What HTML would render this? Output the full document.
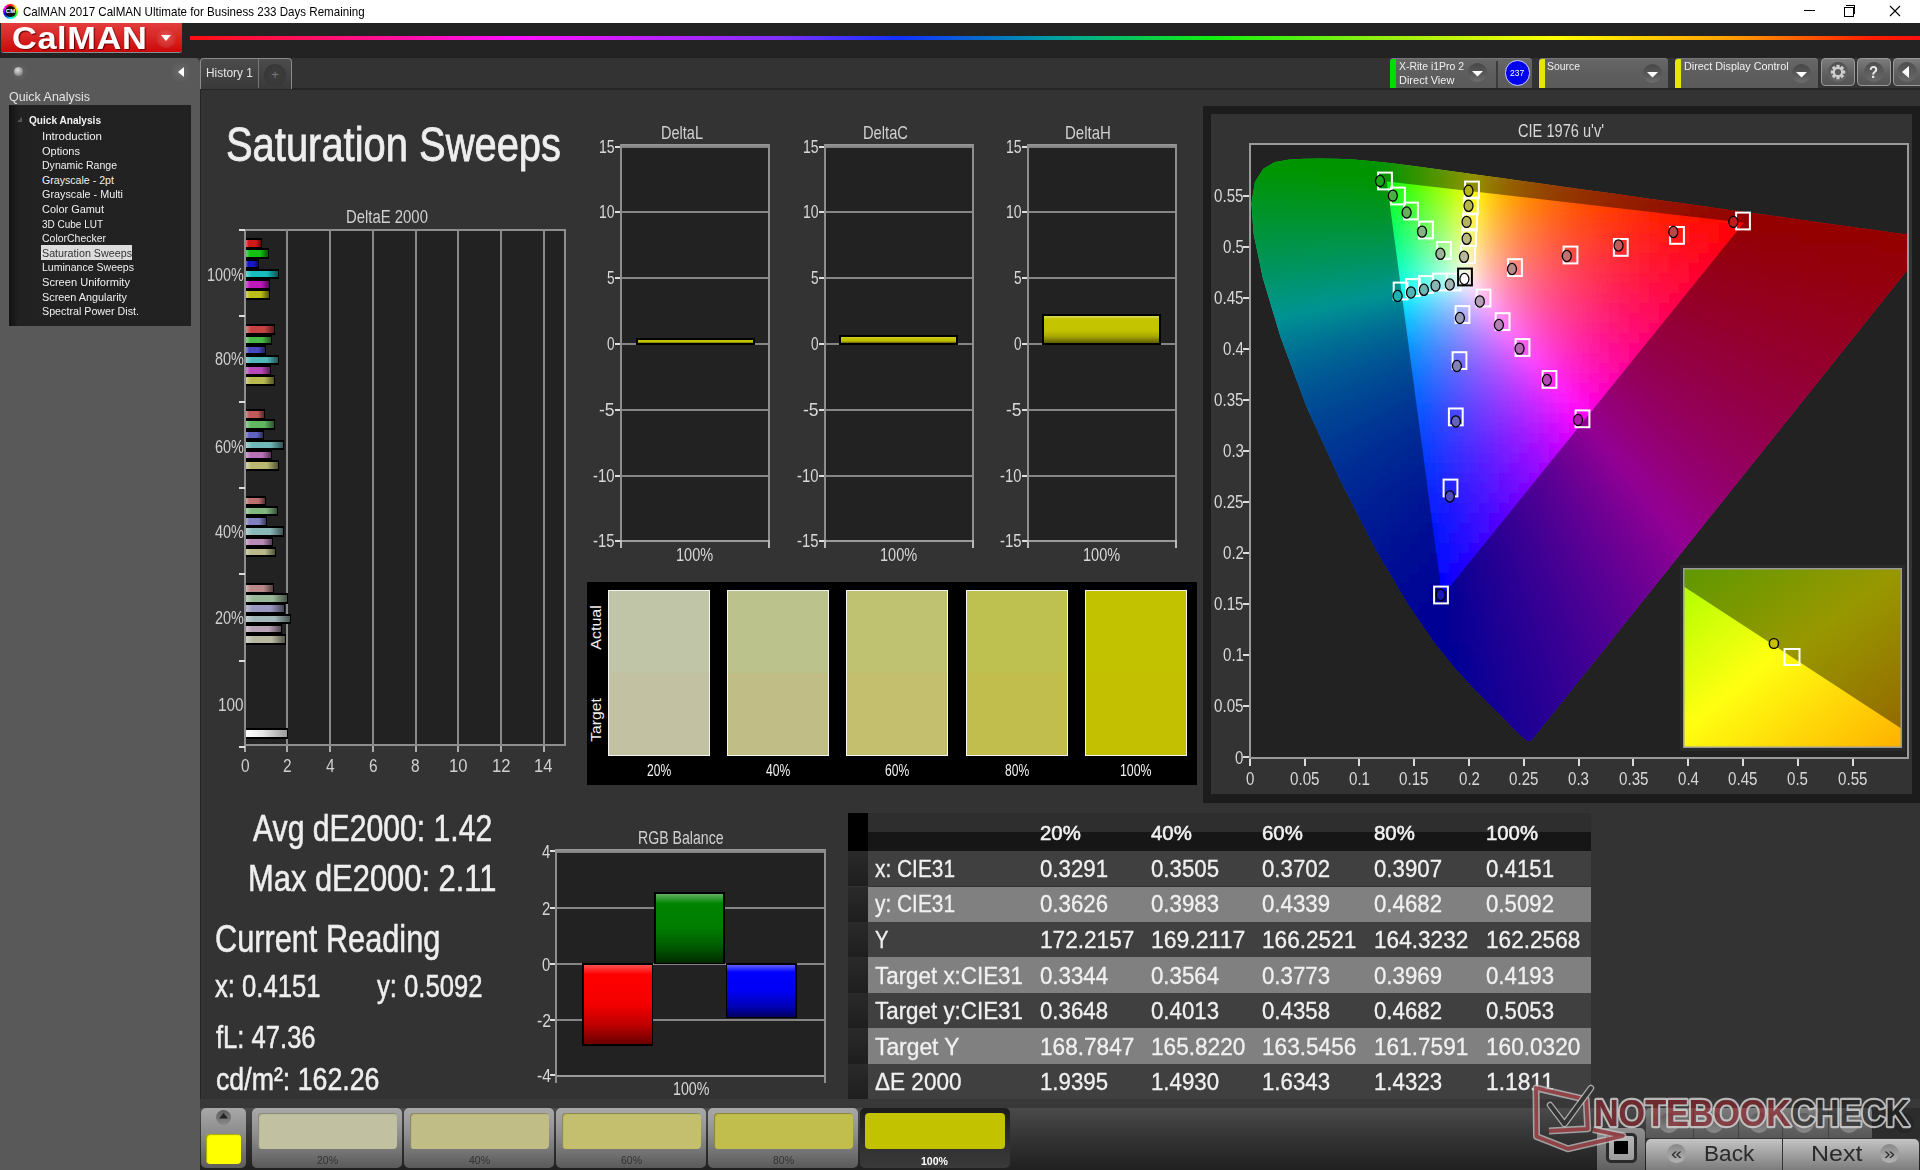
<!DOCTYPE html>
<html><head><meta charset="utf-8"><style>
html,body{margin:0;padding:0;width:1920px;height:1170px;overflow:hidden;background:#333;}
body{position:relative;font-family:"Liberation Sans",sans-serif;}
.r{position:absolute;}
.t{position:absolute;white-space:nowrap;}
svg.r{overflow:hidden}
.cg rect{width:10px;height:10px}
</style></head><body>
<div class="r" style="left:0px;top:0px;width:1920px;height:23px;background:#fff"></div>
<div class="r" style="left:3px;top:4px;width:15px;height:15px;border-radius:50%;background:conic-gradient(#f00,#ff0,#0f0,#0ff,#00f,#f0f,#f00)"></div>
<div class="r" style="left:5px;top:6px;width:11px;height:11px;border-radius:50%;background:#111"></div>
<div class="t" style="left:5px;top:8px;font-size:6px;line-height:7px;color:#fff;font-weight:bold;width:11px;text-align:center">CM</div>
<div class="t " style="left:23.30px;top:6.12px;font-size:12.20px;line-height:12.20px;color:#000;transform:scaleX(0.9499);transform-origin:0 0;">CalMAN 2017 CalMAN Ultimate for Business 233 Days Remaining</div>
<div class="r" style="left:1804px;top:10px;width:11px;height:1px;background:#000"></div>
<div class="r" style="left:1844px;top:7px;width:8px;height:8px;border:1px solid #000;background:#fff"></div>
<div class="r" style="left:1846px;top:5px;width:8px;height:8px;border-top:1px solid #000;border-right:1px solid #000"></div>
<svg class="r" style="left:1889px;top:5px" width="12" height="12"><path d="M1 1L11 11M11 1L1 11" stroke="#000" stroke-width="1.1"/></svg>
<div class="r" style="left:0px;top:23px;width:1920px;height:35px;background:#232323"></div>
<div class="r" style="left:1px;top:23px;width:181px;height:29px;background:linear-gradient(#e43d3d,#d82424 50%,#cc0808);border-radius:0 0 3px 3px;box-shadow:0 1px 0 #8a8a8a"></div>
<div class="t " style="left:12.00px;top:23.00px;font-size:31.25px;line-height:31.25px;color:#fff;font-weight:bold;transform:scaleX(1.1018);transform-origin:0 0;text-shadow:1px 1px 1px #600;letter-spacing:0.5px">CalMAN</div>
<div class="r" style="left:156px;top:28px;width:20px;height:20px;border-radius:50%;background:radial-gradient(circle at 50% 40%,#e85050,#c81818)"></div>
<svg class="r" style="left:159px;top:32px" width="14" height="12"><path d="M2 3L12 3L7 9Z" fill="#fff"/></svg>
<div class="r" style="left:190px;top:36px;width:1730px;height:4px;background:linear-gradient(90deg,#ff1010 0%,#ff10a0 12%,#ff10ff 19%,#8030ff 34%,#1030ff 41%,#00a0a0 50%,#10f010 59%,#a0f010 70%,#ffff00 79%,#ffa000 89%,#ff2000 97%,#ff1010 100%)"></div>
<div class="r" style="left:0px;top:58px;width:200px;height:1112px;background:#595959;border-radius:0 5px 0 0"></div>
<div class="r" style="left:9px;top:62px;width:20px;height:20px;border-radius:50%;background:radial-gradient(circle,#666 0,#5a5a5a 60%,#555 100%)"></div>
<div class="r" style="left:14px;top:67px;width:9px;height:9px;border-radius:50%;background:radial-gradient(circle at 40% 35%,#ddd,#888 70%)"></div>
<div class="r" style="left:171px;top:62px;width:20px;height:20px;border-radius:50%;background:radial-gradient(circle,#6a6a6a,#555)"></div>
<svg class="r" style="left:176px;top:66px" width="10" height="12"><path d="M8 1L8 11L2 6Z" fill="#fff"/></svg>
<div class="t " style="left:9.00px;top:90.62px;font-size:12.79px;line-height:12.79px;color:#e4e4e4;transform:scaleX(0.9739);transform-origin:0 0;">Quick Analysis</div>
<div class="r" style="left:9px;top:105px;width:182px;height:221px;background:linear-gradient(90deg,#121212 0,#212121 10px,#222 100%)"></div>
<svg class="r" style="left:17px;top:117px" width="6" height="6"><path d="M5 0L5 5L0 5Z" fill="#555"/></svg>
<div class="t " style="left:29.00px;top:115.47px;font-size:10.61px;line-height:10.61px;color:#f4f4f4;font-weight:bold;transform:scaleX(0.9513);transform-origin:0 0;">Quick Analysis</div>
<div class="t " style="left:42.00px;top:131.07px;font-size:10.61px;line-height:10.61px;color:#f0f0f0;transform:scaleX(1.0821);transform-origin:0 0;">Introduction</div>
<div class="t " style="left:42.00px;top:145.67px;font-size:10.61px;line-height:10.61px;color:#f0f0f0;transform:scaleX(1.0392);transform-origin:0 0;">Options</div>
<div class="t " style="left:42.00px;top:160.27px;font-size:10.61px;line-height:10.61px;color:#f0f0f0;transform:scaleX(0.9935);transform-origin:0 0;">Dynamic Range</div>
<div class="t " style="left:42.00px;top:174.87px;font-size:10.61px;line-height:10.61px;color:#f0f0f0;">Grayscale - 2pt</div>
<div class="t " style="left:42.00px;top:189.47px;font-size:10.61px;line-height:10.61px;color:#f0f0f0;transform:scaleX(1.0176);transform-origin:0 0;">Grayscale - Multi</div>
<div class="t " style="left:42.00px;top:204.07px;font-size:10.61px;line-height:10.61px;color:#f0f0f0;transform:scaleX(1.0308);transform-origin:0 0;">Color Gamut</div>
<div class="t " style="left:42.00px;top:218.67px;font-size:10.61px;line-height:10.61px;color:#f0f0f0;transform:scaleX(0.9403);transform-origin:0 0;">3D Cube LUT</div>
<div class="t " style="left:42.00px;top:233.27px;font-size:10.61px;line-height:10.61px;color:#f0f0f0;transform:scaleX(0.9866);transform-origin:0 0;">ColorChecker</div>
<div class="r" style="left:41px;top:245px;width:91px;height:15px;background:#dcdcdc"></div>
<div class="t " style="left:42.00px;top:247.87px;font-size:10.61px;line-height:10.61px;color:#333;transform:scaleX(1.0105);transform-origin:0 0;">Saturation Sweeps</div>
<div class="t " style="left:42.00px;top:262.47px;font-size:10.61px;line-height:10.61px;color:#f0f0f0;transform:scaleX(0.9935);transform-origin:0 0;">Luminance Sweeps</div>
<div class="t " style="left:42.00px;top:277.07px;font-size:10.61px;line-height:10.61px;color:#f0f0f0;transform:scaleX(1.0436);transform-origin:0 0;">Screen Uniformity</div>
<div class="t " style="left:42.00px;top:291.67px;font-size:10.61px;line-height:10.61px;color:#f0f0f0;transform:scaleX(1.0220);transform-origin:0 0;">Screen Angularity</div>
<div class="t " style="left:42.00px;top:306.27px;font-size:10.61px;line-height:10.61px;color:#f0f0f0;transform:scaleX(1.0092);transform-origin:0 0;">Spectral Power Dist.</div>
<div class="r" style="left:200px;top:88px;width:1720px;height:1020px;background:#333"></div>
<div class="r" style="left:200px;top:88px;width:1720px;height:2px;background:#262626"></div>
<div class="r" style="left:200px;top:88px;width:1px;height:1020px;background:#242424"></div>
<div class="r" style="left:200px;top:58px;width:92px;height:31px;background:linear-gradient(#4c4c4c,#393939);border:1px solid #8a8a8a;border-bottom:none;border-radius:4px 4px 0 0;box-sizing:border-box"></div>
<div class="r" style="left:258px;top:59px;width:1px;height:29px;background:#777"></div>
<div class="t " style="left:206.00px;top:66.99px;font-size:12.35px;line-height:12.35px;color:#e6e6e6;transform:scaleX(0.9642);transform-origin:0 0;">History 1</div>
<div class="r" style="left:264px;top:64px;width:22px;height:22px;border-radius:50%;background:radial-gradient(circle,#3e3e3e,#353535)"></div>
<div class="t " style="left:271.20px;top:68.45px;font-size:13.00px;line-height:13.00px;color:#777;">+</div>
<div class="t " style="left:225.80px;top:120.75px;font-size:47.97px;line-height:47.97px;color:#eeeeee;transform:scaleX(0.8320);transform-origin:0 0;-webkit-text-stroke:0.8px #eeeeee;">Saturation Sweeps</div>
<div class="t " style="left:346.00px;top:209.12px;font-size:17.88px;line-height:17.88px;color:#d0d0d0;transform:scaleX(0.8333);transform-origin:0 0;">DeltaE 2000</div>
<div class="r" style="left:244px;top:229px;width:322px;height:517px;background:#222;box-sizing:border-box;border-left:2px solid #8e8e8e;border-top:2px solid #8e8e8e;border-right:2px solid #8e8e8e"></div>
<div class="r" style="left:244px;top:744px;width:322px;height:2px;background:#8e8e8e"></div>
<div class="r" style="left:286px;top:229px;width:2px;height:517px;background:#8a8a8a"></div>
<div class="r" style="left:329px;top:229px;width:2px;height:517px;background:#8a8a8a"></div>
<div class="r" style="left:372px;top:229px;width:2px;height:517px;background:#8a8a8a"></div>
<div class="r" style="left:415px;top:229px;width:2px;height:517px;background:#8a8a8a"></div>
<div class="r" style="left:457px;top:229px;width:2px;height:517px;background:#8a8a8a"></div>
<div class="r" style="left:500px;top:229px;width:2px;height:517px;background:#8a8a8a"></div>
<div class="r" style="left:543px;top:229px;width:2px;height:517px;background:#8a8a8a"></div>
<div class="r" style="left:244px;top:746px;width:2px;height:6px;background:#aaa"></div>
<div class="t " style="left:240.50px;top:758.29px;font-size:17.44px;line-height:17.44px;color:#d0d0d0;transform:scaleX(0.8865);transform-origin:0 0;">0</div>
<div class="r" style="left:286px;top:746px;width:2px;height:6px;background:#aaa"></div>
<div class="t " style="left:283.19px;top:758.29px;font-size:17.44px;line-height:17.44px;color:#d0d0d0;transform:scaleX(0.8865);transform-origin:0 0;">2</div>
<div class="r" style="left:329px;top:746px;width:2px;height:6px;background:#aaa"></div>
<div class="t " style="left:325.87px;top:758.29px;font-size:17.44px;line-height:17.44px;color:#d0d0d0;transform:scaleX(0.8865);transform-origin:0 0;">4</div>
<div class="r" style="left:372px;top:746px;width:2px;height:6px;background:#aaa"></div>
<div class="t " style="left:368.56px;top:758.29px;font-size:17.44px;line-height:17.44px;color:#d0d0d0;transform:scaleX(0.8865);transform-origin:0 0;">6</div>
<div class="r" style="left:415px;top:746px;width:2px;height:6px;background:#aaa"></div>
<div class="t " style="left:411.24px;top:758.29px;font-size:17.44px;line-height:17.44px;color:#d0d0d0;transform:scaleX(0.8865);transform-origin:0 0;">8</div>
<div class="r" style="left:457px;top:746px;width:2px;height:6px;background:#aaa"></div>
<div class="t " style="left:448.98px;top:758.29px;font-size:17.44px;line-height:17.44px;color:#d0d0d0;transform:scaleX(0.9535);transform-origin:0 0;">10</div>
<div class="r" style="left:500px;top:746px;width:2px;height:6px;background:#aaa"></div>
<div class="t " style="left:491.66px;top:758.29px;font-size:17.44px;line-height:17.44px;color:#d0d0d0;transform:scaleX(0.9535);transform-origin:0 0;">12</div>
<div class="r" style="left:543px;top:746px;width:2px;height:6px;background:#aaa"></div>
<div class="t " style="left:534.35px;top:758.29px;font-size:17.44px;line-height:17.44px;color:#d0d0d0;transform:scaleX(0.9535);transform-origin:0 0;">14</div>
<div class="r" style="left:239px;top:229px;width:6px;height:2px;background:#ddd"></div>
<div class="r" style="left:239px;top:315px;width:6px;height:2px;background:#ddd"></div>
<div class="r" style="left:239px;top:401px;width:6px;height:2px;background:#ddd"></div>
<div class="r" style="left:239px;top:487px;width:6px;height:2px;background:#ddd"></div>
<div class="r" style="left:239px;top:573px;width:6px;height:2px;background:#ddd"></div>
<div class="r" style="left:239px;top:660px;width:6px;height:2px;background:#ddd"></div>
<div class="r" style="left:239px;top:746px;width:6px;height:2px;background:#ddd"></div>
<div class="t " style="left:206.70px;top:265.50px;font-size:18.60px;line-height:18.60px;color:#d0d0d0;transform:scaleX(0.7734);transform-origin:0 0;">100%</div>
<div class="t " style="left:214.50px;top:350.10px;font-size:18.60px;line-height:18.60px;color:#d0d0d0;transform:scaleX(0.7788);transform-origin:0 0;">80%</div>
<div class="t " style="left:214.50px;top:437.70px;font-size:18.60px;line-height:18.60px;color:#d0d0d0;transform:scaleX(0.7788);transform-origin:0 0;">60%</div>
<div class="t " style="left:214.50px;top:523.20px;font-size:18.60px;line-height:18.60px;color:#d0d0d0;transform:scaleX(0.7788);transform-origin:0 0;">40%</div>
<div class="t " style="left:214.50px;top:608.70px;font-size:18.60px;line-height:18.60px;color:#d0d0d0;transform:scaleX(0.7788);transform-origin:0 0;">20%</div>
<div class="t " style="left:217.90px;top:695.70px;font-size:18.60px;line-height:18.60px;color:#d0d0d0;transform:scaleX(0.8247);transform-origin:0 0;">100</div>
<div class="r" style="left:246px;top:238.2px;width:15.8px;height:10.5px;background:#000"></div>
<div class="r" style="left:246px;top:240.2px;width:14.8px;height:6.6px;background:linear-gradient(90deg,rgba(255,255,255,.35),rgba(255,255,255,0) 18%,rgba(0,0,0,0) 65%,rgba(0,0,0,.55)),#d01a1a"></div>
<div class="r" style="left:246px;top:248.4px;width:23px;height:10.5px;background:#000"></div>
<div class="r" style="left:246px;top:250.4px;width:22px;height:6.6px;background:linear-gradient(90deg,rgba(255,255,255,.35),rgba(255,255,255,0) 18%,rgba(0,0,0,0) 65%,rgba(0,0,0,.55)),#14bf14"></div>
<div class="r" style="left:246px;top:258.6px;width:13px;height:10.5px;background:#000"></div>
<div class="r" style="left:246px;top:260.6px;width:12px;height:6.6px;background:linear-gradient(90deg,rgba(255,255,255,.35),rgba(255,255,255,0) 18%,rgba(0,0,0,0) 65%,rgba(0,0,0,.55)),#1616c8"></div>
<div class="r" style="left:246px;top:268.8px;width:32.5px;height:10.5px;background:#000"></div>
<div class="r" style="left:246px;top:270.8px;width:31.5px;height:6.6px;background:linear-gradient(90deg,rgba(255,255,255,.35),rgba(255,255,255,0) 18%,rgba(0,0,0,0) 65%,rgba(0,0,0,.55)),#18bcbc"></div>
<div class="r" style="left:246px;top:279.0px;width:23.7px;height:10.5px;background:#000"></div>
<div class="r" style="left:246px;top:281.0px;width:22.7px;height:6.6px;background:linear-gradient(90deg,rgba(255,255,255,.35),rgba(255,255,255,0) 18%,rgba(0,0,0,0) 65%,rgba(0,0,0,.55)),#bc18bc"></div>
<div class="r" style="left:246px;top:289.2px;width:24px;height:10.5px;background:#000"></div>
<div class="r" style="left:246px;top:291.2px;width:23px;height:6.6px;background:linear-gradient(90deg,rgba(255,255,255,.35),rgba(255,255,255,0) 18%,rgba(0,0,0,0) 65%,rgba(0,0,0,.55)),#bcbc18"></div>
<div class="r" style="left:246px;top:324.3px;width:29px;height:10.5px;background:#000"></div>
<div class="r" style="left:246px;top:326.3px;width:28px;height:6.6px;background:linear-gradient(90deg,rgba(255,255,255,.35),rgba(255,255,255,0) 18%,rgba(0,0,0,0) 65%,rgba(0,0,0,.55)),#c64242"></div>
<div class="r" style="left:246px;top:334.5px;width:25.7px;height:10.5px;background:#000"></div>
<div class="r" style="left:246px;top:336.5px;width:24.7px;height:6.6px;background:linear-gradient(90deg,rgba(255,255,255,.35),rgba(255,255,255,0) 18%,rgba(0,0,0,0) 65%,rgba(0,0,0,.55)),#48b848"></div>
<div class="r" style="left:246px;top:344.7px;width:20px;height:10.5px;background:#000"></div>
<div class="r" style="left:246px;top:346.7px;width:19px;height:6.6px;background:linear-gradient(90deg,rgba(255,255,255,.35),rgba(255,255,255,0) 18%,rgba(0,0,0,0) 65%,rgba(0,0,0,.55)),#4848c0"></div>
<div class="r" style="left:246px;top:354.9px;width:32.5px;height:10.5px;background:#000"></div>
<div class="r" style="left:246px;top:356.9px;width:31.5px;height:6.6px;background:linear-gradient(90deg,rgba(255,255,255,.35),rgba(255,255,255,0) 18%,rgba(0,0,0,0) 65%,rgba(0,0,0,.55)),#50b8b8"></div>
<div class="r" style="left:246px;top:365.1px;width:25.3px;height:10.5px;background:#000"></div>
<div class="r" style="left:246px;top:367.1px;width:24.3px;height:6.6px;background:linear-gradient(90deg,rgba(255,255,255,.35),rgba(255,255,255,0) 18%,rgba(0,0,0,0) 65%,rgba(0,0,0,.55)),#b848b8"></div>
<div class="r" style="left:246px;top:375.3px;width:28.6px;height:10.5px;background:#000"></div>
<div class="r" style="left:246px;top:377.3px;width:27.6px;height:6.6px;background:linear-gradient(90deg,rgba(255,255,255,.35),rgba(255,255,255,0) 18%,rgba(0,0,0,0) 65%,rgba(0,0,0,.55)),#b8b850"></div>
<div class="r" style="left:246px;top:409.1px;width:18.5px;height:10.5px;background:#000"></div>
<div class="r" style="left:246px;top:411.1px;width:17.5px;height:6.6px;background:linear-gradient(90deg,rgba(255,255,255,.35),rgba(255,255,255,0) 18%,rgba(0,0,0,0) 65%,rgba(0,0,0,.55)),#c05a5a"></div>
<div class="r" style="left:246px;top:419.3px;width:28.7px;height:10.5px;background:#000"></div>
<div class="r" style="left:246px;top:421.3px;width:27.7px;height:6.6px;background:linear-gradient(90deg,rgba(255,255,255,.35),rgba(255,255,255,0) 18%,rgba(0,0,0,0) 65%,rgba(0,0,0,.55)),#62b862"></div>
<div class="r" style="left:246px;top:429.5px;width:17.7px;height:10.5px;background:#000"></div>
<div class="r" style="left:246px;top:431.5px;width:16.7px;height:6.6px;background:linear-gradient(90deg,rgba(255,255,255,.35),rgba(255,255,255,0) 18%,rgba(0,0,0,0) 65%,rgba(0,0,0,.55)),#6262c0"></div>
<div class="r" style="left:246px;top:439.7px;width:37.7px;height:10.5px;background:#000"></div>
<div class="r" style="left:246px;top:441.7px;width:36.7px;height:6.6px;background:linear-gradient(90deg,rgba(255,255,255,.35),rgba(255,255,255,0) 18%,rgba(0,0,0,0) 65%,rgba(0,0,0,.55)),#72b8b8"></div>
<div class="r" style="left:246px;top:449.9px;width:25.7px;height:10.5px;background:#000"></div>
<div class="r" style="left:246px;top:451.9px;width:24.7px;height:6.6px;background:linear-gradient(90deg,rgba(255,255,255,.35),rgba(255,255,255,0) 18%,rgba(0,0,0,0) 65%,rgba(0,0,0,.55)),#b872b8"></div>
<div class="r" style="left:246px;top:460.1px;width:32.9px;height:10.5px;background:#000"></div>
<div class="r" style="left:246px;top:462.1px;width:31.9px;height:6.6px;background:linear-gradient(90deg,rgba(255,255,255,.35),rgba(255,255,255,0) 18%,rgba(0,0,0,0) 65%,rgba(0,0,0,.55)),#b8b872"></div>
<div class="r" style="left:246px;top:495.7px;width:20px;height:10.5px;background:#000"></div>
<div class="r" style="left:246px;top:497.7px;width:19px;height:6.6px;background:linear-gradient(90deg,rgba(255,255,255,.35),rgba(255,255,255,0) 18%,rgba(0,0,0,0) 65%,rgba(0,0,0,.55)),#bc7070"></div>
<div class="r" style="left:246px;top:505.9px;width:31.6px;height:10.5px;background:#000"></div>
<div class="r" style="left:246px;top:507.9px;width:30.6px;height:6.6px;background:linear-gradient(90deg,rgba(255,255,255,.35),rgba(255,255,255,0) 18%,rgba(0,0,0,0) 65%,rgba(0,0,0,.55)),#80b880"></div>
<div class="r" style="left:246px;top:516.1px;width:21.4px;height:10.5px;background:#000"></div>
<div class="r" style="left:246px;top:518.1px;width:20.4px;height:6.6px;background:linear-gradient(90deg,rgba(255,255,255,.35),rgba(255,255,255,0) 18%,rgba(0,0,0,0) 65%,rgba(0,0,0,.55)),#8080c0"></div>
<div class="r" style="left:246px;top:526.3px;width:38.4px;height:10.5px;background:#000"></div>
<div class="r" style="left:246px;top:528.3px;width:37.4px;height:6.6px;background:linear-gradient(90deg,rgba(255,255,255,.35),rgba(255,255,255,0) 18%,rgba(0,0,0,0) 65%,rgba(0,0,0,.55)),#8ab8b8"></div>
<div class="r" style="left:246px;top:536.5px;width:26.8px;height:10.5px;background:#000"></div>
<div class="r" style="left:246px;top:538.5px;width:25.8px;height:6.6px;background:linear-gradient(90deg,rgba(255,255,255,.35),rgba(255,255,255,0) 18%,rgba(0,0,0,0) 65%,rgba(0,0,0,.55)),#b88ab8"></div>
<div class="r" style="left:246px;top:546.7px;width:29.6px;height:10.5px;background:#000"></div>
<div class="r" style="left:246px;top:548.7px;width:28.6px;height:6.6px;background:linear-gradient(90deg,rgba(255,255,255,.35),rgba(255,255,255,0) 18%,rgba(0,0,0,0) 65%,rgba(0,0,0,.55)),#b8b88a"></div>
<div class="r" style="left:246px;top:583.0px;width:27.5px;height:10.5px;background:#000"></div>
<div class="r" style="left:246px;top:585.0px;width:26.5px;height:6.6px;background:linear-gradient(90deg,rgba(255,255,255,.35),rgba(255,255,255,0) 18%,rgba(0,0,0,0) 65%,rgba(0,0,0,.55)),#b88888"></div>
<div class="r" style="left:246px;top:593.2px;width:41.9px;height:10.5px;background:#000"></div>
<div class="r" style="left:246px;top:595.2px;width:40.9px;height:6.6px;background:linear-gradient(90deg,rgba(255,255,255,.35),rgba(255,255,255,0) 18%,rgba(0,0,0,0) 65%,rgba(0,0,0,.55)),#98b898"></div>
<div class="r" style="left:246px;top:603.4px;width:38.9px;height:10.5px;background:#000"></div>
<div class="r" style="left:246px;top:605.4px;width:37.9px;height:6.6px;background:linear-gradient(90deg,rgba(255,255,255,.35),rgba(255,255,255,0) 18%,rgba(0,0,0,0) 65%,rgba(0,0,0,.55)),#9898c0"></div>
<div class="r" style="left:246px;top:613.6px;width:44.9px;height:10.5px;background:#000"></div>
<div class="r" style="left:246px;top:615.6px;width:43.9px;height:6.6px;background:linear-gradient(90deg,rgba(255,255,255,.35),rgba(255,255,255,0) 18%,rgba(0,0,0,0) 65%,rgba(0,0,0,.55)),#a2b8b8"></div>
<div class="r" style="left:246px;top:623.8px;width:35.9px;height:10.5px;background:#000"></div>
<div class="r" style="left:246px;top:625.8px;width:34.9px;height:6.6px;background:linear-gradient(90deg,rgba(255,255,255,.35),rgba(255,255,255,0) 18%,rgba(0,0,0,0) 65%,rgba(0,0,0,.55)),#b8a2b8"></div>
<div class="r" style="left:246px;top:634.0px;width:39.8px;height:10.5px;background:#000"></div>
<div class="r" style="left:246px;top:636.0px;width:38.8px;height:6.6px;background:linear-gradient(90deg,rgba(255,255,255,.35),rgba(255,255,255,0) 18%,rgba(0,0,0,0) 65%,rgba(0,0,0,.55)),#b8b8a2"></div>
<div class="r" style="left:246px;top:728px;width:42.2px;height:11px;background:#000"></div>
<div class="r" style="left:246px;top:730px;width:41.2px;height:7px;background:linear-gradient(90deg,#fff,#e8e8e8 40%,#9a9a9a)"></div>
<div class="t " style="left:660.50px;top:123.95px;font-size:18.31px;line-height:18.31px;color:#d0d0d0;transform:scaleX(0.7933);transform-origin:0 0;">DeltaL</div>
<div class="r" style="left:620px;top:145px;width:150px;height:397px;background:#222"></div>
<div class="r" style="left:620px;top:211px;width:150px;height:2px;background:#858585"></div>
<div class="r" style="left:620px;top:277px;width:150px;height:2px;background:#858585"></div>
<div class="r" style="left:620px;top:343px;width:150px;height:2px;background:#858585"></div>
<div class="r" style="left:620px;top:409px;width:150px;height:2px;background:#858585"></div>
<div class="r" style="left:620px;top:475px;width:150px;height:2px;background:#858585"></div>
<div class="r" style="left:620px;top:144px;width:150px;height:4px;background:linear-gradient(#9a9a9a,#7e7e7e)"></div>
<div class="r" style="left:620px;top:540px;width:150px;height:2px;background:#9a9a9a"></div>
<div class="r" style="left:620px;top:144px;width:2px;height:398px;background:#8e8e8e"></div>
<div class="r" style="left:768px;top:144px;width:2px;height:398px;background:#8e8e8e"></div>
<div class="r" style="left:620px;top:540px;width:2px;height:8px;background:#bbb"></div>
<div class="r" style="left:768px;top:540px;width:2px;height:8px;background:#bbb"></div>
<div class="r" style="left:615px;top:146px;width:5px;height:2px;background:#ddd"></div>
<div class="t " style="left:598.90px;top:137.60px;font-size:18.60px;line-height:18.60px;color:#d8d8d8;transform:scaleX(0.7538);transform-origin:0 0;">15</div>
<div class="r" style="left:615px;top:211px;width:5px;height:2px;background:#ddd"></div>
<div class="t " style="left:598.90px;top:203.30px;font-size:18.60px;line-height:18.60px;color:#d8d8d8;transform:scaleX(0.7538);transform-origin:0 0;">10</div>
<div class="r" style="left:615px;top:277px;width:5px;height:2px;background:#ddd"></div>
<div class="t " style="left:606.90px;top:269.20px;font-size:18.60px;line-height:18.60px;color:#d8d8d8;transform:scaleX(0.7345);transform-origin:0 0;">5</div>
<div class="r" style="left:615px;top:343px;width:5px;height:2px;background:#ddd"></div>
<div class="t " style="left:606.90px;top:335.10px;font-size:18.60px;line-height:18.60px;color:#d8d8d8;transform:scaleX(0.7345);transform-origin:0 0;">0</div>
<div class="r" style="left:615px;top:409px;width:5px;height:2px;background:#ddd"></div>
<div class="t " style="left:598.90px;top:401.00px;font-size:18.60px;line-height:18.60px;color:#d8d8d8;transform:scaleX(0.9430);transform-origin:0 0;">-5</div>
<div class="r" style="left:615px;top:475px;width:5px;height:2px;background:#ddd"></div>
<div class="t " style="left:593.00px;top:466.90px;font-size:18.60px;line-height:18.60px;color:#d8d8d8;transform:scaleX(0.7995);transform-origin:0 0;">-10</div>
<div class="r" style="left:615px;top:540px;width:5px;height:2px;background:#ddd"></div>
<div class="t " style="left:593.00px;top:532.10px;font-size:18.60px;line-height:18.60px;color:#d8d8d8;transform:scaleX(0.7995);transform-origin:0 0;">-15</div>
<div class="t " style="left:676.40px;top:545.79px;font-size:18.02px;line-height:18.02px;color:#d8d8d8;transform:scaleX(0.8070);transform-origin:0 0;">100%</div>
<div class="r" style="left:636px;top:338.1px;width:119px;height:6.7px;background:#000"></div>
<div class="r" style="left:637.8px;top:339.9px;width:115.4px;height:3.1px;background:linear-gradient(#dada5a 0,#c4c400 12%,#c2c200 55%,#a8a800 75%,#5e5e00 100%)"></div>
<div class="t " style="left:862.50px;top:123.95px;font-size:18.31px;line-height:18.31px;color:#d0d0d0;transform:scaleX(0.8038);transform-origin:0 0;">DeltaC</div>
<div class="r" style="left:824px;top:145px;width:150px;height:397px;background:#222"></div>
<div class="r" style="left:824px;top:211px;width:150px;height:2px;background:#858585"></div>
<div class="r" style="left:824px;top:277px;width:150px;height:2px;background:#858585"></div>
<div class="r" style="left:824px;top:343px;width:150px;height:2px;background:#858585"></div>
<div class="r" style="left:824px;top:409px;width:150px;height:2px;background:#858585"></div>
<div class="r" style="left:824px;top:475px;width:150px;height:2px;background:#858585"></div>
<div class="r" style="left:824px;top:144px;width:150px;height:4px;background:linear-gradient(#9a9a9a,#7e7e7e)"></div>
<div class="r" style="left:824px;top:540px;width:150px;height:2px;background:#9a9a9a"></div>
<div class="r" style="left:824px;top:144px;width:2px;height:398px;background:#8e8e8e"></div>
<div class="r" style="left:972px;top:144px;width:2px;height:398px;background:#8e8e8e"></div>
<div class="r" style="left:824px;top:540px;width:2px;height:8px;background:#bbb"></div>
<div class="r" style="left:972px;top:540px;width:2px;height:8px;background:#bbb"></div>
<div class="r" style="left:819px;top:146px;width:5px;height:2px;background:#ddd"></div>
<div class="t " style="left:802.90px;top:137.60px;font-size:18.60px;line-height:18.60px;color:#d8d8d8;transform:scaleX(0.7538);transform-origin:0 0;">15</div>
<div class="r" style="left:819px;top:211px;width:5px;height:2px;background:#ddd"></div>
<div class="t " style="left:802.90px;top:203.30px;font-size:18.60px;line-height:18.60px;color:#d8d8d8;transform:scaleX(0.7538);transform-origin:0 0;">10</div>
<div class="r" style="left:819px;top:277px;width:5px;height:2px;background:#ddd"></div>
<div class="t " style="left:810.90px;top:269.20px;font-size:18.60px;line-height:18.60px;color:#d8d8d8;transform:scaleX(0.7345);transform-origin:0 0;">5</div>
<div class="r" style="left:819px;top:343px;width:5px;height:2px;background:#ddd"></div>
<div class="t " style="left:810.90px;top:335.10px;font-size:18.60px;line-height:18.60px;color:#d8d8d8;transform:scaleX(0.7345);transform-origin:0 0;">0</div>
<div class="r" style="left:819px;top:409px;width:5px;height:2px;background:#ddd"></div>
<div class="t " style="left:802.90px;top:401.00px;font-size:18.60px;line-height:18.60px;color:#d8d8d8;transform:scaleX(0.9430);transform-origin:0 0;">-5</div>
<div class="r" style="left:819px;top:475px;width:5px;height:2px;background:#ddd"></div>
<div class="t " style="left:797.00px;top:466.90px;font-size:18.60px;line-height:18.60px;color:#d8d8d8;transform:scaleX(0.7995);transform-origin:0 0;">-10</div>
<div class="r" style="left:819px;top:540px;width:5px;height:2px;background:#ddd"></div>
<div class="t " style="left:797.00px;top:532.10px;font-size:18.60px;line-height:18.60px;color:#d8d8d8;transform:scaleX(0.7995);transform-origin:0 0;">-15</div>
<div class="t " style="left:880.40px;top:545.79px;font-size:18.02px;line-height:18.02px;color:#d8d8d8;transform:scaleX(0.8070);transform-origin:0 0;">100%</div>
<div class="r" style="left:839px;top:335.4px;width:119px;height:9.4px;background:#000"></div>
<div class="r" style="left:840.8px;top:337.2px;width:115.4px;height:5.8px;background:linear-gradient(#dada5a 0,#c4c400 12%,#c2c200 55%,#a8a800 75%,#5e5e00 100%)"></div>
<div class="t " style="left:1065.00px;top:123.95px;font-size:18.31px;line-height:18.31px;color:#d0d0d0;transform:scaleX(0.8217);transform-origin:0 0;">DeltaH</div>
<div class="r" style="left:1027px;top:145px;width:150px;height:397px;background:#222"></div>
<div class="r" style="left:1027px;top:211px;width:150px;height:2px;background:#858585"></div>
<div class="r" style="left:1027px;top:277px;width:150px;height:2px;background:#858585"></div>
<div class="r" style="left:1027px;top:343px;width:150px;height:2px;background:#858585"></div>
<div class="r" style="left:1027px;top:409px;width:150px;height:2px;background:#858585"></div>
<div class="r" style="left:1027px;top:475px;width:150px;height:2px;background:#858585"></div>
<div class="r" style="left:1027px;top:144px;width:150px;height:4px;background:linear-gradient(#9a9a9a,#7e7e7e)"></div>
<div class="r" style="left:1027px;top:540px;width:150px;height:2px;background:#9a9a9a"></div>
<div class="r" style="left:1027px;top:144px;width:2px;height:398px;background:#8e8e8e"></div>
<div class="r" style="left:1175px;top:144px;width:2px;height:398px;background:#8e8e8e"></div>
<div class="r" style="left:1027px;top:540px;width:2px;height:8px;background:#bbb"></div>
<div class="r" style="left:1175px;top:540px;width:2px;height:8px;background:#bbb"></div>
<div class="r" style="left:1022px;top:146px;width:5px;height:2px;background:#ddd"></div>
<div class="t " style="left:1005.90px;top:137.60px;font-size:18.60px;line-height:18.60px;color:#d8d8d8;transform:scaleX(0.7538);transform-origin:0 0;">15</div>
<div class="r" style="left:1022px;top:211px;width:5px;height:2px;background:#ddd"></div>
<div class="t " style="left:1005.90px;top:203.30px;font-size:18.60px;line-height:18.60px;color:#d8d8d8;transform:scaleX(0.7538);transform-origin:0 0;">10</div>
<div class="r" style="left:1022px;top:277px;width:5px;height:2px;background:#ddd"></div>
<div class="t " style="left:1013.90px;top:269.20px;font-size:18.60px;line-height:18.60px;color:#d8d8d8;transform:scaleX(0.7345);transform-origin:0 0;">5</div>
<div class="r" style="left:1022px;top:343px;width:5px;height:2px;background:#ddd"></div>
<div class="t " style="left:1013.90px;top:335.10px;font-size:18.60px;line-height:18.60px;color:#d8d8d8;transform:scaleX(0.7345);transform-origin:0 0;">0</div>
<div class="r" style="left:1022px;top:409px;width:5px;height:2px;background:#ddd"></div>
<div class="t " style="left:1005.90px;top:401.00px;font-size:18.60px;line-height:18.60px;color:#d8d8d8;transform:scaleX(0.9430);transform-origin:0 0;">-5</div>
<div class="r" style="left:1022px;top:475px;width:5px;height:2px;background:#ddd"></div>
<div class="t " style="left:1000.00px;top:466.90px;font-size:18.60px;line-height:18.60px;color:#d8d8d8;transform:scaleX(0.7995);transform-origin:0 0;">-10</div>
<div class="r" style="left:1022px;top:540px;width:5px;height:2px;background:#ddd"></div>
<div class="t " style="left:1000.00px;top:532.10px;font-size:18.60px;line-height:18.60px;color:#d8d8d8;transform:scaleX(0.7995);transform-origin:0 0;">-15</div>
<div class="t " style="left:1083.40px;top:545.79px;font-size:18.02px;line-height:18.02px;color:#d8d8d8;transform:scaleX(0.8070);transform-origin:0 0;">100%</div>
<div class="r" style="left:1042.1px;top:314.2px;width:119px;height:30.6px;background:#000"></div>
<div class="r" style="left:1043.9px;top:316.0px;width:115.4px;height:27.0px;background:linear-gradient(#dada5a 0,#c4c400 12%,#c2c200 55%,#a8a800 75%,#5e5e00 100%)"></div>
<div class="r" style="left:587px;top:582px;width:610px;height:203px;background:#000"></div>
<div class="r" style="left:608px;top:590px;width:102px;height:166px;box-sizing:border-box;border:1.3px solid #f4f4f4;background:linear-gradient(#c1c5a8 0,#c1c5a8 50%,#c2c1a2 50%,#c2c1a2 100%)"></div>
<div class="t " style="left:646.90px;top:761.75px;font-size:16.42px;line-height:16.42px;color:#f4f4f4;transform:scaleX(0.7362);transform-origin:0 0;">20%</div>
<div class="r" style="left:727px;top:590px;width:102px;height:166px;box-sizing:border-box;border:1.3px solid #f4f4f4;background:linear-gradient(#bcc28c 0,#bcc28c 50%,#c0be86 50%,#c0be86 100%)"></div>
<div class="t " style="left:765.90px;top:761.75px;font-size:16.42px;line-height:16.42px;color:#f4f4f4;transform:scaleX(0.7362);transform-origin:0 0;">40%</div>
<div class="r" style="left:846px;top:590px;width:102px;height:166px;box-sizing:border-box;border:1.3px solid #f4f4f4;background:linear-gradient(#bfc371 0,#bfc371 50%,#c3bf6e 50%,#c3bf6e 100%)"></div>
<div class="t " style="left:884.90px;top:761.75px;font-size:16.42px;line-height:16.42px;color:#f4f4f4;transform:scaleX(0.7362);transform-origin:0 0;">60%</div>
<div class="r" style="left:966px;top:590px;width:102px;height:166px;box-sizing:border-box;border:1.3px solid #f4f4f4;background:linear-gradient(#bec150 0,#bec150 50%,#c2be4e 50%,#c2be4e 100%)"></div>
<div class="t " style="left:1004.90px;top:761.75px;font-size:16.42px;line-height:16.42px;color:#f4f4f4;transform:scaleX(0.7362);transform-origin:0 0;">80%</div>
<div class="r" style="left:1085px;top:590px;width:102px;height:166px;box-sizing:border-box;border:1.3px solid #f4f4f4;background:linear-gradient(#c2c200 0,#c2c200 50%,#c2c000 50%,#c2c000 100%)"></div>
<div class="t " style="left:1120.20px;top:761.75px;font-size:16.42px;line-height:16.42px;color:#f4f4f4;transform:scaleX(0.7522);transform-origin:0 0;">100%</div>
<div class="t" style="left:601.00px;top:636.50px;font-size:15.12px;line-height:15.12px;color:#f0f0f0;transform-origin:0 12.80px;transform:rotate(-90deg) scaleX(1.0616)">Actual</div>
<div class="t" style="left:601.00px;top:728.50px;font-size:15.12px;line-height:15.12px;color:#f0f0f0;transform-origin:0 12.80px;transform:rotate(-90deg) scaleX(1.0378)">Target</div>
<div class="t " style="left:252.50px;top:811.07px;font-size:36.48px;line-height:36.48px;color:#eeeeee;transform:scaleX(0.8269);transform-origin:0 0;-webkit-text-stroke:0.55px #eeeeee;">Avg dE2000: 1.42</div>
<div class="t " style="left:248.40px;top:861.17px;font-size:36.48px;line-height:36.48px;color:#eeeeee;transform:scaleX(0.8469);transform-origin:0 0;-webkit-text-stroke:0.55px #eeeeee;">Max dE2000: 2.11</div>
<div class="t " style="left:215.00px;top:919.77px;font-size:38.37px;line-height:38.37px;color:#eeeeee;transform:scaleX(0.8005);transform-origin:0 0;-webkit-text-stroke:0.55px #eeeeee;">Current Reading</div>
<div class="t " style="left:215.20px;top:970.14px;font-size:32.27px;line-height:32.27px;color:#eeeeee;transform:scaleX(0.7939);transform-origin:0 0;-webkit-text-stroke:0.55px #eeeeee;">x: 0.4151</div>
<div class="t " style="left:376.90px;top:970.14px;font-size:32.27px;line-height:32.27px;color:#eeeeee;transform:scaleX(0.7939);transform-origin:0 0;-webkit-text-stroke:0.55px #eeeeee;">y: 0.5092</div>
<div class="t " style="left:215.60px;top:1020.94px;font-size:32.27px;line-height:32.27px;color:#eeeeee;transform:scaleX(0.7931);transform-origin:0 0;-webkit-text-stroke:0.55px #eeeeee;">fL: 47.36</div>
<div class="t " style="left:215.80px;top:1062.84px;font-size:32.27px;line-height:32.27px;color:#eeeeee;transform:scaleX(0.8282);transform-origin:0 0;-webkit-text-stroke:0.55px #eeeeee;">cd/m²: 162.26</div>
<div class="t " style="left:638.40px;top:828.55px;font-size:18.31px;line-height:18.31px;color:#d0d0d0;transform:scaleX(0.7724);transform-origin:0 0;">RGB Balance</div>
<div class="r" style="left:555px;top:849px;width:270px;height:227px;background:#222"></div>
<div class="r" style="left:555px;top:907px;width:270px;height:2px;background:#858585"></div>
<div class="r" style="left:555px;top:963px;width:270px;height:2px;background:#858585"></div>
<div class="r" style="left:555px;top:1019px;width:270px;height:2px;background:#858585"></div>
<div class="r" style="left:555px;top:849px;width:270px;height:4px;background:linear-gradient(#9a9a9a,#7e7e7e)"></div>
<div class="r" style="left:555px;top:1075px;width:270px;height:2px;background:#9a9a9a"></div>
<div class="r" style="left:555px;top:849px;width:2px;height:234px;background:#8e8e8e"></div>
<div class="r" style="left:824px;top:849px;width:2px;height:234px;background:#8e8e8e"></div>
<div class="r" style="left:550px;top:850px;width:5px;height:2px;background:#ddd"></div>
<div class="t " style="left:542.20px;top:841.81px;font-size:19.19px;line-height:19.19px;color:#d8d8d8;transform:scaleX(0.7778);transform-origin:0 0;">4</div>
<div class="r" style="left:550px;top:907px;width:5px;height:2px;background:#ddd"></div>
<div class="t " style="left:542.20px;top:898.71px;font-size:19.19px;line-height:19.19px;color:#d8d8d8;transform:scaleX(0.7778);transform-origin:0 0;">2</div>
<div class="r" style="left:550px;top:963px;width:5px;height:2px;background:#ddd"></div>
<div class="t " style="left:542.20px;top:954.71px;font-size:19.19px;line-height:19.19px;color:#d8d8d8;transform:scaleX(0.7778);transform-origin:0 0;">0</div>
<div class="r" style="left:550px;top:1019px;width:5px;height:2px;background:#ddd"></div>
<div class="t " style="left:536.50px;top:1010.51px;font-size:19.19px;line-height:19.19px;color:#d8d8d8;transform:scaleX(0.8206);transform-origin:0 0;">-2</div>
<div class="r" style="left:550px;top:1074px;width:5px;height:2px;background:#ddd"></div>
<div class="t " style="left:536.50px;top:1066.31px;font-size:19.19px;line-height:19.19px;color:#d8d8d8;transform:scaleX(0.8206);transform-origin:0 0;">-4</div>
<div class="t " style="left:672.50px;top:1080.39px;font-size:18.02px;line-height:18.02px;color:#d8d8d8;transform:scaleX(0.7918);transform-origin:0 0;">100%</div>
<div class="r" style="left:582.4px;top:963px;width:71.1px;height:82.8px;background:#000"></div>
<div class="r" style="left:583.9px;top:964.5px;width:68.1px;height:79.8px;background:linear-gradient(#ff5050 0,#ff0000 12%,#f40000 50%,#c00000 75%,#6a0000 100%)"></div>
<div class="r" style="left:654.2px;top:892.1px;width:70.6px;height:72.4px;background:#000"></div>
<div class="r" style="left:655.7px;top:893.6px;width:67.6px;height:69.4px;background:linear-gradient(#60b060 0,#008400 14%,#007c00 50%,#005800 78%,#002a00 100%)"></div>
<div class="r" style="left:725.6px;top:963px;width:71.1px;height:55px;background:#000"></div>
<div class="r" style="left:727.1px;top:964.5px;width:68.1px;height:52px;background:linear-gradient(#6060ff 0,#0000ff 14%,#0000f4 50%,#0000b4 80%,#000060 100%)"></div>
<div class="r" style="left:848px;top:813px;width:743px;height:19px;background:#2e2e2e"></div>
<div class="r" style="left:848px;top:832px;width:743px;height:19px;background:#161616"></div>
<div class="r" style="left:848px;top:813px;width:20px;height:38px;background:#000"></div>
<div class="t " style="left:1039.70px;top:823.10px;font-size:20.49px;line-height:20.49px;color:#f2f2f2;transform:scaleX(0.9947);transform-origin:0 0;-webkit-text-stroke:0.55px #f2f2f2;">20%</div>
<div class="t " style="left:1150.80px;top:823.10px;font-size:20.49px;line-height:20.49px;color:#f2f2f2;transform:scaleX(0.9947);transform-origin:0 0;-webkit-text-stroke:0.55px #f2f2f2;">40%</div>
<div class="t " style="left:1262.40px;top:823.10px;font-size:20.49px;line-height:20.49px;color:#f2f2f2;transform:scaleX(0.9947);transform-origin:0 0;-webkit-text-stroke:0.55px #f2f2f2;">60%</div>
<div class="t " style="left:1374.40px;top:823.10px;font-size:20.49px;line-height:20.49px;color:#f2f2f2;transform:scaleX(0.9947);transform-origin:0 0;-webkit-text-stroke:0.55px #f2f2f2;">80%</div>
<div class="t " style="left:1486.00px;top:823.10px;font-size:20.49px;line-height:20.49px;color:#f2f2f2;transform:scaleX(0.9920);transform-origin:0 0;-webkit-text-stroke:0.55px #f2f2f2;">100%</div>
<div class="r" style="left:868px;top:850.8px;width:723px;height:35.7px;background:#404040"></div>
<div class="r" style="left:848px;top:850.8px;width:20px;height:35.7px;background:linear-gradient(#2a2a2a,#1e1e1e)"></div>
<div class="t " style="left:875.00px;top:857.89px;font-size:23.11px;line-height:23.11px;color:#f0f0f0;transform:scaleX(0.9026);transform-origin:0 0;-webkit-text-stroke:0.3px #f0f0f0;">x: CIE31</div>
<div class="t " style="left:1039.70px;top:857.89px;font-size:23.11px;line-height:23.11px;color:#f0f0f0;transform:scaleX(0.9620);transform-origin:0 0;-webkit-text-stroke:0.3px #f0f0f0;">0.3291</div>
<div class="t " style="left:1150.80px;top:857.89px;font-size:23.11px;line-height:23.11px;color:#f0f0f0;transform:scaleX(0.9620);transform-origin:0 0;-webkit-text-stroke:0.3px #f0f0f0;">0.3505</div>
<div class="t " style="left:1262.40px;top:857.89px;font-size:23.11px;line-height:23.11px;color:#f0f0f0;transform:scaleX(0.9620);transform-origin:0 0;-webkit-text-stroke:0.3px #f0f0f0;">0.3702</div>
<div class="t " style="left:1374.40px;top:857.89px;font-size:23.11px;line-height:23.11px;color:#f0f0f0;transform:scaleX(0.9620);transform-origin:0 0;-webkit-text-stroke:0.3px #f0f0f0;">0.3907</div>
<div class="t " style="left:1486.00px;top:857.89px;font-size:23.11px;line-height:23.11px;color:#f0f0f0;transform:scaleX(0.9620);transform-origin:0 0;-webkit-text-stroke:0.3px #f0f0f0;">0.4151</div>
<div class="r" style="left:868px;top:886.5px;width:723px;height:35.3px;background:#808080"></div>
<div class="r" style="left:848px;top:886.5px;width:20px;height:35.3px;background:linear-gradient(#2a2a2a,#1e1e1e)"></div>
<div class="t " style="left:875.00px;top:893.49px;font-size:23.11px;line-height:23.11px;color:#f0f0f0;transform:scaleX(0.9026);transform-origin:0 0;-webkit-text-stroke:0.3px #f0f0f0;">y: CIE31</div>
<div class="t " style="left:1039.70px;top:893.49px;font-size:23.11px;line-height:23.11px;color:#f0f0f0;transform:scaleX(0.9620);transform-origin:0 0;-webkit-text-stroke:0.3px #f0f0f0;">0.3626</div>
<div class="t " style="left:1150.80px;top:893.49px;font-size:23.11px;line-height:23.11px;color:#f0f0f0;transform:scaleX(0.9620);transform-origin:0 0;-webkit-text-stroke:0.3px #f0f0f0;">0.3983</div>
<div class="t " style="left:1262.40px;top:893.49px;font-size:23.11px;line-height:23.11px;color:#f0f0f0;transform:scaleX(0.9620);transform-origin:0 0;-webkit-text-stroke:0.3px #f0f0f0;">0.4339</div>
<div class="t " style="left:1374.40px;top:893.49px;font-size:23.11px;line-height:23.11px;color:#f0f0f0;transform:scaleX(0.9620);transform-origin:0 0;-webkit-text-stroke:0.3px #f0f0f0;">0.4682</div>
<div class="t " style="left:1486.00px;top:893.49px;font-size:23.11px;line-height:23.11px;color:#f0f0f0;transform:scaleX(0.9620);transform-origin:0 0;-webkit-text-stroke:0.3px #f0f0f0;">0.5092</div>
<div class="r" style="left:868px;top:921.8px;width:723px;height:35.5px;background:#404040"></div>
<div class="r" style="left:848px;top:921.8px;width:20px;height:35.5px;background:linear-gradient(#2a2a2a,#1e1e1e)"></div>
<div class="t " style="left:875.00px;top:929.09px;font-size:23.11px;line-height:23.11px;color:#f0f0f0;transform:scaleX(0.8757);transform-origin:0 0;-webkit-text-stroke:0.3px #f0f0f0;">Y</div>
<div class="t " style="left:1039.70px;top:929.09px;font-size:23.11px;line-height:23.11px;color:#f0f0f0;transform:scaleX(0.9783);transform-origin:0 0;-webkit-text-stroke:0.3px #f0f0f0;">172.2157</div>
<div class="t " style="left:1150.80px;top:929.09px;font-size:23.11px;line-height:23.11px;color:#f0f0f0;transform:scaleX(0.9960);transform-origin:0 0;-webkit-text-stroke:0.3px #f0f0f0;">169.2117</div>
<div class="t " style="left:1262.40px;top:929.09px;font-size:23.11px;line-height:23.11px;color:#f0f0f0;transform:scaleX(0.9783);transform-origin:0 0;-webkit-text-stroke:0.3px #f0f0f0;">166.2521</div>
<div class="t " style="left:1374.40px;top:929.09px;font-size:23.11px;line-height:23.11px;color:#f0f0f0;transform:scaleX(0.9783);transform-origin:0 0;-webkit-text-stroke:0.3px #f0f0f0;">164.3232</div>
<div class="t " style="left:1486.00px;top:929.09px;font-size:23.11px;line-height:23.11px;color:#f0f0f0;transform:scaleX(0.9783);transform-origin:0 0;-webkit-text-stroke:0.3px #f0f0f0;">162.2568</div>
<div class="r" style="left:868px;top:957.3px;width:723px;height:35.4px;background:#808080"></div>
<div class="r" style="left:848px;top:957.3px;width:20px;height:35.4px;background:linear-gradient(#2a2a2a,#1e1e1e)"></div>
<div class="t " style="left:875.00px;top:964.69px;font-size:23.11px;line-height:23.11px;color:#f0f0f0;transform:scaleX(0.9682);transform-origin:0 0;-webkit-text-stroke:0.3px #f0f0f0;">Target x:CIE31</div>
<div class="t " style="left:1039.70px;top:964.69px;font-size:23.11px;line-height:23.11px;color:#f0f0f0;transform:scaleX(0.9620);transform-origin:0 0;-webkit-text-stroke:0.3px #f0f0f0;">0.3344</div>
<div class="t " style="left:1150.80px;top:964.69px;font-size:23.11px;line-height:23.11px;color:#f0f0f0;transform:scaleX(0.9620);transform-origin:0 0;-webkit-text-stroke:0.3px #f0f0f0;">0.3564</div>
<div class="t " style="left:1262.40px;top:964.69px;font-size:23.11px;line-height:23.11px;color:#f0f0f0;transform:scaleX(0.9620);transform-origin:0 0;-webkit-text-stroke:0.3px #f0f0f0;">0.3773</div>
<div class="t " style="left:1374.40px;top:964.69px;font-size:23.11px;line-height:23.11px;color:#f0f0f0;transform:scaleX(0.9620);transform-origin:0 0;-webkit-text-stroke:0.3px #f0f0f0;">0.3969</div>
<div class="t " style="left:1486.00px;top:964.69px;font-size:23.11px;line-height:23.11px;color:#f0f0f0;transform:scaleX(0.9620);transform-origin:0 0;-webkit-text-stroke:0.3px #f0f0f0;">0.4193</div>
<div class="r" style="left:868px;top:992.7px;width:723px;height:35.4px;background:#404040"></div>
<div class="r" style="left:848px;top:992.7px;width:20px;height:35.4px;background:linear-gradient(#2a2a2a,#1e1e1e)"></div>
<div class="t " style="left:875.00px;top:1000.29px;font-size:23.11px;line-height:23.11px;color:#f0f0f0;transform:scaleX(0.9682);transform-origin:0 0;-webkit-text-stroke:0.3px #f0f0f0;">Target y:CIE31</div>
<div class="t " style="left:1039.70px;top:1000.29px;font-size:23.11px;line-height:23.11px;color:#f0f0f0;transform:scaleX(0.9620);transform-origin:0 0;-webkit-text-stroke:0.3px #f0f0f0;">0.3648</div>
<div class="t " style="left:1150.80px;top:1000.29px;font-size:23.11px;line-height:23.11px;color:#f0f0f0;transform:scaleX(0.9620);transform-origin:0 0;-webkit-text-stroke:0.3px #f0f0f0;">0.4013</div>
<div class="t " style="left:1262.40px;top:1000.29px;font-size:23.11px;line-height:23.11px;color:#f0f0f0;transform:scaleX(0.9620);transform-origin:0 0;-webkit-text-stroke:0.3px #f0f0f0;">0.4358</div>
<div class="t " style="left:1374.40px;top:1000.29px;font-size:23.11px;line-height:23.11px;color:#f0f0f0;transform:scaleX(0.9620);transform-origin:0 0;-webkit-text-stroke:0.3px #f0f0f0;">0.4682</div>
<div class="t " style="left:1486.00px;top:1000.29px;font-size:23.11px;line-height:23.11px;color:#f0f0f0;transform:scaleX(0.9620);transform-origin:0 0;-webkit-text-stroke:0.3px #f0f0f0;">0.5053</div>
<div class="r" style="left:868px;top:1028.1px;width:723px;height:35.5px;background:#808080"></div>
<div class="r" style="left:848px;top:1028.1px;width:20px;height:35.5px;background:linear-gradient(#2a2a2a,#1e1e1e)"></div>
<div class="t " style="left:875.00px;top:1035.89px;font-size:23.11px;line-height:23.11px;color:#f0f0f0;transform:scaleX(0.9877);transform-origin:0 0;-webkit-text-stroke:0.3px #f0f0f0;">Target Y</div>
<div class="t " style="left:1039.70px;top:1035.89px;font-size:23.11px;line-height:23.11px;color:#f0f0f0;transform:scaleX(0.9783);transform-origin:0 0;-webkit-text-stroke:0.3px #f0f0f0;">168.7847</div>
<div class="t " style="left:1150.80px;top:1035.89px;font-size:23.11px;line-height:23.11px;color:#f0f0f0;transform:scaleX(0.9783);transform-origin:0 0;-webkit-text-stroke:0.3px #f0f0f0;">165.8220</div>
<div class="t " style="left:1262.40px;top:1035.89px;font-size:23.11px;line-height:23.11px;color:#f0f0f0;transform:scaleX(0.9783);transform-origin:0 0;-webkit-text-stroke:0.3px #f0f0f0;">163.5456</div>
<div class="t " style="left:1374.40px;top:1035.89px;font-size:23.11px;line-height:23.11px;color:#f0f0f0;transform:scaleX(0.9783);transform-origin:0 0;-webkit-text-stroke:0.3px #f0f0f0;">161.7591</div>
<div class="t " style="left:1486.00px;top:1035.89px;font-size:23.11px;line-height:23.11px;color:#f0f0f0;transform:scaleX(0.9783);transform-origin:0 0;-webkit-text-stroke:0.3px #f0f0f0;">160.0320</div>
<div class="r" style="left:868px;top:1063.6px;width:723px;height:35.4px;background:#404040"></div>
<div class="r" style="left:848px;top:1063.6px;width:20px;height:35.4px;background:linear-gradient(#2a2a2a,#1e1e1e)"></div>
<div class="t " style="left:875.00px;top:1071.49px;font-size:23.11px;line-height:23.11px;color:#f0f0f0;transform:scaleX(0.9753);transform-origin:0 0;-webkit-text-stroke:0.3px #f0f0f0;">ΔE 2000</div>
<div class="t " style="left:1039.70px;top:1071.49px;font-size:23.11px;line-height:23.11px;color:#f0f0f0;transform:scaleX(0.9620);transform-origin:0 0;-webkit-text-stroke:0.3px #f0f0f0;">1.9395</div>
<div class="t " style="left:1150.80px;top:1071.49px;font-size:23.11px;line-height:23.11px;color:#f0f0f0;transform:scaleX(0.9620);transform-origin:0 0;-webkit-text-stroke:0.3px #f0f0f0;">1.4930</div>
<div class="t " style="left:1262.40px;top:1071.49px;font-size:23.11px;line-height:23.11px;color:#f0f0f0;transform:scaleX(0.9620);transform-origin:0 0;-webkit-text-stroke:0.3px #f0f0f0;">1.6343</div>
<div class="t " style="left:1374.40px;top:1071.49px;font-size:23.11px;line-height:23.11px;color:#f0f0f0;transform:scaleX(0.9620);transform-origin:0 0;-webkit-text-stroke:0.3px #f0f0f0;">1.4323</div>
<div class="t " style="left:1486.00px;top:1071.49px;font-size:23.11px;line-height:23.11px;color:#f0f0f0;transform:scaleX(0.9859);transform-origin:0 0;-webkit-text-stroke:0.3px #f0f0f0;">1.1811</div>
<div class="r" style="left:1203px;top:106px;width:717px;height:697px;background:#1c1c1c"></div>
<div class="r" style="left:1211px;top:114px;width:701px;height:680px;background:#333"></div>
<div class="t " style="left:1518.00px;top:121.96px;font-size:18.90px;line-height:18.90px;color:#d8d8d8;transform:scaleX(0.7733);transform-origin:0 0;">CIE 1976 u'v'</div>
<div class="r" style="left:1249px;top:143px;width:660px;height:616px;background:#222"></div>
<div class="r" style="left:1243px;top:756px;width:6px;height:2px;background:#ddd"></div>
<div class="t " style="left:1235.10px;top:748.50px;font-size:18.60px;line-height:18.60px;color:#d8d8d8;transform:scaleX(0.8118);transform-origin:0 0;">0</div>
<div class="r" style="left:1249px;top:758px;width:2px;height:8px;background:#ddd"></div>
<div class="t " style="left:1245.60px;top:769.72px;font-size:18.46px;line-height:18.46px;color:#d8d8d8;transform:scaleX(0.8182);transform-origin:0 0;">0</div>
<div class="r" style="left:1243px;top:705px;width:6px;height:2px;background:#ddd"></div>
<div class="t " style="left:1214.00px;top:697.49px;font-size:18.60px;line-height:18.60px;color:#d8d8d8;transform:scaleX(0.8147);transform-origin:0 0;">0.05</div>
<div class="r" style="left:1304px;top:758px;width:2px;height:8px;background:#ddd"></div>
<div class="t " style="left:1289.85px;top:769.72px;font-size:18.46px;line-height:18.46px;color:#d8d8d8;transform:scaleX(0.8211);transform-origin:0 0;">0.05</div>
<div class="r" style="left:1243px;top:654px;width:6px;height:2px;background:#ddd"></div>
<div class="t " style="left:1222.50px;top:646.47px;font-size:18.60px;line-height:18.60px;color:#d8d8d8;transform:scaleX(0.8120);transform-origin:0 0;">0.1</div>
<div class="r" style="left:1358px;top:758px;width:2px;height:8px;background:#ddd"></div>
<div class="t " style="left:1348.90px;top:769.72px;font-size:18.46px;line-height:18.46px;color:#d8d8d8;transform:scaleX(0.8184);transform-origin:0 0;">0.1</div>
<div class="r" style="left:1243px;top:603px;width:6px;height:2px;background:#ddd"></div>
<div class="t " style="left:1214.00px;top:595.46px;font-size:18.60px;line-height:18.60px;color:#d8d8d8;transform:scaleX(0.8147);transform-origin:0 0;">0.15</div>
<div class="r" style="left:1413px;top:758px;width:2px;height:8px;background:#ddd"></div>
<div class="t " style="left:1399.45px;top:769.72px;font-size:18.46px;line-height:18.46px;color:#d8d8d8;transform:scaleX(0.8211);transform-origin:0 0;">0.15</div>
<div class="r" style="left:1243px;top:552px;width:6px;height:2px;background:#ddd"></div>
<div class="t " style="left:1222.50px;top:544.44px;font-size:18.60px;line-height:18.60px;color:#d8d8d8;transform:scaleX(0.8120);transform-origin:0 0;">0.2</div>
<div class="r" style="left:1468px;top:758px;width:2px;height:8px;background:#ddd"></div>
<div class="t " style="left:1458.50px;top:769.72px;font-size:18.46px;line-height:18.46px;color:#d8d8d8;transform:scaleX(0.8184);transform-origin:0 0;">0.2</div>
<div class="r" style="left:1243px;top:501px;width:6px;height:2px;background:#ddd"></div>
<div class="t " style="left:1214.00px;top:493.43px;font-size:18.60px;line-height:18.60px;color:#d8d8d8;transform:scaleX(0.8147);transform-origin:0 0;">0.25</div>
<div class="r" style="left:1523px;top:758px;width:2px;height:8px;background:#ddd"></div>
<div class="t " style="left:1509.05px;top:769.72px;font-size:18.46px;line-height:18.46px;color:#d8d8d8;transform:scaleX(0.8211);transform-origin:0 0;">0.25</div>
<div class="r" style="left:1243px;top:450px;width:6px;height:2px;background:#ddd"></div>
<div class="t " style="left:1222.50px;top:442.41px;font-size:18.60px;line-height:18.60px;color:#d8d8d8;transform:scaleX(0.8120);transform-origin:0 0;">0.3</div>
<div class="r" style="left:1578px;top:758px;width:2px;height:8px;background:#ddd"></div>
<div class="t " style="left:1568.10px;top:769.72px;font-size:18.46px;line-height:18.46px;color:#d8d8d8;transform:scaleX(0.8184);transform-origin:0 0;">0.3</div>
<div class="r" style="left:1243px;top:399px;width:6px;height:2px;background:#ddd"></div>
<div class="t " style="left:1214.00px;top:391.40px;font-size:18.60px;line-height:18.60px;color:#d8d8d8;transform:scaleX(0.8147);transform-origin:0 0;">0.35</div>
<div class="r" style="left:1632px;top:758px;width:2px;height:8px;background:#ddd"></div>
<div class="t " style="left:1618.65px;top:769.72px;font-size:18.46px;line-height:18.46px;color:#d8d8d8;transform:scaleX(0.8211);transform-origin:0 0;">0.35</div>
<div class="r" style="left:1243px;top:348px;width:6px;height:2px;background:#ddd"></div>
<div class="t " style="left:1222.50px;top:340.38px;font-size:18.60px;line-height:18.60px;color:#d8d8d8;transform:scaleX(0.8120);transform-origin:0 0;">0.4</div>
<div class="r" style="left:1687px;top:758px;width:2px;height:8px;background:#ddd"></div>
<div class="t " style="left:1677.70px;top:769.72px;font-size:18.46px;line-height:18.46px;color:#d8d8d8;transform:scaleX(0.8184);transform-origin:0 0;">0.4</div>
<div class="r" style="left:1243px;top:297px;width:6px;height:2px;background:#ddd"></div>
<div class="t " style="left:1214.00px;top:289.37px;font-size:18.60px;line-height:18.60px;color:#d8d8d8;transform:scaleX(0.8147);transform-origin:0 0;">0.45</div>
<div class="r" style="left:1742px;top:758px;width:2px;height:8px;background:#ddd"></div>
<div class="t " style="left:1728.25px;top:769.72px;font-size:18.46px;line-height:18.46px;color:#d8d8d8;transform:scaleX(0.8211);transform-origin:0 0;">0.45</div>
<div class="r" style="left:1243px;top:246px;width:6px;height:2px;background:#ddd"></div>
<div class="t " style="left:1222.50px;top:238.35px;font-size:18.60px;line-height:18.60px;color:#d8d8d8;transform:scaleX(0.8120);transform-origin:0 0;">0.5</div>
<div class="r" style="left:1797px;top:758px;width:2px;height:8px;background:#ddd"></div>
<div class="t " style="left:1787.30px;top:769.72px;font-size:18.46px;line-height:18.46px;color:#d8d8d8;transform:scaleX(0.8184);transform-origin:0 0;">0.5</div>
<div class="r" style="left:1243px;top:195px;width:6px;height:2px;background:#ddd"></div>
<div class="t " style="left:1214.00px;top:187.34px;font-size:18.60px;line-height:18.60px;color:#d8d8d8;transform:scaleX(0.8147);transform-origin:0 0;">0.55</div>
<div class="r" style="left:1852px;top:758px;width:2px;height:8px;background:#ddd"></div>
<div class="t " style="left:1837.85px;top:769.72px;font-size:18.46px;line-height:18.46px;color:#d8d8d8;transform:scaleX(0.8211);transform-origin:0 0;">0.55</div>
<svg class="r" style="left:1249px;top:143px" width="660" height="616" viewBox="1249 143 660 616">
<defs>
<clipPath id="loc"><path d="M1531.3 740.5 L1531.1 740.5 L1530.8 740.8 L1530.5 740.8 L1530.0 741.1 L1529.5 741.1 L1528.8 741.1 L1527.9 741.2 L1526.2 740.2 L1523.4 737.9 L1519.5 734.3 L1514.0 728.9 L1507.0 721.7 L1498.2 712.8 L1486.6 701.3 L1472.7 687.2 L1455.5 668.5 L1435.0 643.2 L1407.7 603.4 L1375.5 548.9 L1340.6 481.1 L1306.9 407.8 L1280.7 337.4 L1262.8 278.0 L1253.6 233.9 L1251.4 203.2 L1254.9 182.1 L1263.3 168.7 L1275.1 161.9 L1289.3 159.4 L1304.7 158.7 L1320.3 158.4 L1336.6 158.7 L1354.2 159.6 L1373.3 161.3 L1394.3 163.6 L1417.6 166.6 L1443.3 170.1 L1471.8 174.0 L1503.2 178.3 L1537.3 183.1 L1574.2 188.2 L1613.2 193.6 L1653.2 199.2 L1692.0 204.6 L1729.8 209.9 L1764.0 214.6 L1794.3 218.8 L1820.0 222.4 L1841.6 225.4 L1859.7 227.9 L1875.5 230.1 L1888.8 232.0 L1899.6 233.5 L1907.9 234.6 L1914.5 235.5 L1919.3 236.2 L1922.5 236.7 L1925.1 237.0 L1927.2 237.3 L1929.2 237.6 L1931.0 237.8 L1932.2 238.0 L1932.7 238.1 L1933.0 238.1 Z"/></clipPath>
<filter id="bl" x="-5%" y="-5%" width="110%" height="110%"><feGaussianBlur stdDeviation="6"/></filter>
</defs>
<g clip-path="url(#loc)"><g filter="url(#bl)" class="cg"><rect x="1239" y="163" fill="#00ff02"/><rect x="1239" y="173" fill="#00ff14"/><rect x="1239" y="183" fill="#00ff24"/><rect x="1239" y="193" fill="#00ff33"/><rect x="1239" y="203" fill="#00ff42"/><rect x="1239" y="213" fill="#00ff51"/><rect x="1239" y="223" fill="#00ff60"/><rect x="1239" y="233" fill="#00ff6f"/><rect x="1239" y="243" fill="#00ff7f"/><rect x="1239" y="253" fill="#00ff8e"/><rect x="1239" y="263" fill="#00ff9e"/><rect x="1239" y="273" fill="#00ffaf"/><rect x="1239" y="283" fill="#00ffbf"/><rect x="1249" y="153" fill="#00ff00"/><rect x="1249" y="163" fill="#00ff00"/><rect x="1249" y="173" fill="#00ff12"/><rect x="1249" y="183" fill="#00ff23"/><rect x="1249" y="193" fill="#00ff32"/><rect x="1249" y="203" fill="#00ff42"/><rect x="1249" y="213" fill="#00ff51"/><rect x="1249" y="223" fill="#00ff60"/><rect x="1249" y="233" fill="#00ff70"/><rect x="1249" y="243" fill="#00ff80"/><rect x="1249" y="253" fill="#00ff90"/><rect x="1249" y="263" fill="#00ffa0"/><rect x="1249" y="273" fill="#00ffb0"/><rect x="1249" y="283" fill="#00ffc1"/><rect x="1249" y="293" fill="#00ffd3"/><rect x="1249" y="303" fill="#00ffe5"/><rect x="1249" y="313" fill="#00fff7"/><rect x="1259" y="143" fill="#00ff00"/><rect x="1259" y="153" fill="#00ff00"/><rect x="1259" y="163" fill="#00ff00"/><rect x="1259" y="173" fill="#00ff11"/><rect x="1259" y="183" fill="#00ff21"/><rect x="1259" y="193" fill="#00ff31"/><rect x="1259" y="203" fill="#00ff41"/><rect x="1259" y="213" fill="#00ff51"/><rect x="1259" y="223" fill="#00ff60"/><rect x="1259" y="233" fill="#00ff70"/><rect x="1259" y="243" fill="#00ff80"/><rect x="1259" y="253" fill="#00ff91"/><rect x="1259" y="263" fill="#00ffa1"/><rect x="1259" y="273" fill="#00ffb2"/><rect x="1259" y="283" fill="#00ffc4"/><rect x="1259" y="293" fill="#00ffd6"/><rect x="1259" y="303" fill="#00ffe8"/><rect x="1259" y="313" fill="#00fffb"/><rect x="1259" y="323" fill="#00f1ff"/><rect x="1259" y="333" fill="#00e0ff"/><rect x="1259" y="343" fill="#00d1ff"/><rect x="1269" y="143" fill="#00ff00"/><rect x="1269" y="153" fill="#00ff00"/><rect x="1269" y="163" fill="#00ff00"/><rect x="1269" y="173" fill="#00ff0f"/><rect x="1269" y="183" fill="#00ff20"/><rect x="1269" y="193" fill="#00ff30"/><rect x="1269" y="203" fill="#00ff41"/><rect x="1269" y="213" fill="#00ff51"/><rect x="1269" y="223" fill="#00ff61"/><rect x="1269" y="233" fill="#00ff71"/><rect x="1269" y="243" fill="#00ff81"/><rect x="1269" y="253" fill="#00ff92"/><rect x="1269" y="263" fill="#00ffa3"/><rect x="1269" y="273" fill="#00ffb4"/><rect x="1269" y="283" fill="#00ffc6"/><rect x="1269" y="293" fill="#00ffd8"/><rect x="1269" y="303" fill="#00ffeb"/><rect x="1269" y="313" fill="#00ffff"/><rect x="1269" y="323" fill="#00edff"/><rect x="1269" y="333" fill="#00ddff"/><rect x="1269" y="343" fill="#00ceff"/><rect x="1269" y="353" fill="#00c0ff"/><rect x="1269" y="363" fill="#00b4ff"/><rect x="1269" y="373" fill="#00a9ff"/><rect x="1279" y="133" fill="#00ff00"/><rect x="1279" y="143" fill="#00ff00"/><rect x="1279" y="153" fill="#00ff00"/><rect x="1279" y="163" fill="#00ff00"/><rect x="1279" y="173" fill="#00ff0d"/><rect x="1279" y="183" fill="#00ff1f"/><rect x="1279" y="193" fill="#00ff30"/><rect x="1279" y="203" fill="#00ff40"/><rect x="1279" y="213" fill="#00ff50"/><rect x="1279" y="223" fill="#00ff61"/><rect x="1279" y="233" fill="#00ff71"/><rect x="1279" y="243" fill="#00ff82"/><rect x="1279" y="253" fill="#00ff93"/><rect x="1279" y="263" fill="#00ffa5"/><rect x="1279" y="273" fill="#00ffb6"/><rect x="1279" y="283" fill="#00ffc9"/><rect x="1279" y="293" fill="#00ffdb"/><rect x="1279" y="303" fill="#00ffef"/><rect x="1279" y="313" fill="#00fcff"/><rect x="1279" y="323" fill="#00e9ff"/><rect x="1279" y="333" fill="#00d9ff"/><rect x="1279" y="343" fill="#00caff"/><rect x="1279" y="353" fill="#00bdff"/><rect x="1279" y="363" fill="#00b1ff"/><rect x="1279" y="373" fill="#00a6ff"/><rect x="1279" y="383" fill="#009cff"/><rect x="1279" y="393" fill="#0092ff"/><rect x="1279" y="403" fill="#008aff"/><rect x="1289" y="133" fill="#00ff00"/><rect x="1289" y="143" fill="#00ff00"/><rect x="1289" y="153" fill="#00ff00"/><rect x="1289" y="163" fill="#00ff00"/><rect x="1289" y="173" fill="#00ff0b"/><rect x="1289" y="183" fill="#00ff1d"/><rect x="1289" y="193" fill="#00ff2f"/><rect x="1289" y="203" fill="#00ff3f"/><rect x="1289" y="213" fill="#00ff50"/><rect x="1289" y="223" fill="#00ff61"/><rect x="1289" y="233" fill="#00ff72"/><rect x="1289" y="243" fill="#00ff83"/><rect x="1289" y="253" fill="#00ff94"/><rect x="1289" y="263" fill="#00ffa6"/><rect x="1289" y="273" fill="#00ffb9"/><rect x="1289" y="283" fill="#00ffcb"/><rect x="1289" y="293" fill="#00ffdf"/><rect x="1289" y="303" fill="#00fff2"/><rect x="1289" y="313" fill="#00f7ff"/><rect x="1289" y="323" fill="#00e5ff"/><rect x="1289" y="333" fill="#00d5ff"/><rect x="1289" y="343" fill="#00c6ff"/><rect x="1289" y="353" fill="#00b9ff"/><rect x="1289" y="363" fill="#00adff"/><rect x="1289" y="373" fill="#00a2ff"/><rect x="1289" y="383" fill="#0098ff"/><rect x="1289" y="393" fill="#008fff"/><rect x="1289" y="403" fill="#0087ff"/><rect x="1289" y="413" fill="#007fff"/><rect x="1289" y="423" fill="#0078ff"/><rect x="1299" y="133" fill="#00ff00"/><rect x="1299" y="143" fill="#00ff00"/><rect x="1299" y="153" fill="#00ff00"/><rect x="1299" y="163" fill="#00ff00"/><rect x="1299" y="173" fill="#00ff09"/><rect x="1299" y="183" fill="#00ff1c"/><rect x="1299" y="193" fill="#00ff2e"/><rect x="1299" y="203" fill="#00ff3f"/><rect x="1299" y="213" fill="#00ff50"/><rect x="1299" y="223" fill="#00ff61"/><rect x="1299" y="233" fill="#00ff72"/><rect x="1299" y="243" fill="#00ff84"/><rect x="1299" y="253" fill="#00ff96"/><rect x="1299" y="263" fill="#00ffa8"/><rect x="1299" y="273" fill="#00ffbb"/><rect x="1299" y="283" fill="#00ffce"/><rect x="1299" y="293" fill="#00ffe2"/><rect x="1299" y="303" fill="#00fff6"/><rect x="1299" y="313" fill="#00f3ff"/><rect x="1299" y="323" fill="#00e1ff"/><rect x="1299" y="333" fill="#00d1ff"/><rect x="1299" y="343" fill="#00c2ff"/><rect x="1299" y="353" fill="#00b5ff"/><rect x="1299" y="363" fill="#00a9ff"/><rect x="1299" y="373" fill="#009fff"/><rect x="1299" y="383" fill="#0095ff"/><rect x="1299" y="393" fill="#008cff"/><rect x="1299" y="403" fill="#0083ff"/><rect x="1299" y="413" fill="#007cff"/><rect x="1299" y="423" fill="#0074ff"/><rect x="1299" y="433" fill="#006eff"/><rect x="1299" y="443" fill="#0067ff"/><rect x="1309" y="133" fill="#00ff00"/><rect x="1309" y="143" fill="#00ff00"/><rect x="1309" y="153" fill="#00ff00"/><rect x="1309" y="163" fill="#00ff00"/><rect x="1309" y="173" fill="#00ff07"/><rect x="1309" y="183" fill="#00ff1b"/><rect x="1309" y="193" fill="#00ff2d"/><rect x="1309" y="203" fill="#00ff3e"/><rect x="1309" y="213" fill="#00ff50"/><rect x="1309" y="223" fill="#00ff61"/><rect x="1309" y="233" fill="#00ff73"/><rect x="1309" y="243" fill="#00ff85"/><rect x="1309" y="253" fill="#00ff97"/><rect x="1309" y="263" fill="#00ffaa"/><rect x="1309" y="273" fill="#00ffbd"/><rect x="1309" y="283" fill="#00ffd1"/><rect x="1309" y="293" fill="#00ffe5"/><rect x="1309" y="303" fill="#00fffa"/><rect x="1309" y="313" fill="#00efff"/><rect x="1309" y="323" fill="#00ddff"/><rect x="1309" y="333" fill="#00cdff"/><rect x="1309" y="343" fill="#00beff"/><rect x="1309" y="353" fill="#00b1ff"/><rect x="1309" y="363" fill="#00a6ff"/><rect x="1309" y="373" fill="#009bff"/><rect x="1309" y="383" fill="#0091ff"/><rect x="1309" y="393" fill="#0088ff"/><rect x="1309" y="403" fill="#0080ff"/><rect x="1309" y="413" fill="#0078ff"/><rect x="1309" y="423" fill="#0071ff"/><rect x="1309" y="433" fill="#006aff"/><rect x="1309" y="443" fill="#0064ff"/><rect x="1309" y="453" fill="#005eff"/><rect x="1309" y="463" fill="#0059ff"/><rect x="1319" y="133" fill="#00ff00"/><rect x="1319" y="143" fill="#00ff00"/><rect x="1319" y="153" fill="#00ff00"/><rect x="1319" y="163" fill="#00ff00"/><rect x="1319" y="173" fill="#00ff04"/><rect x="1319" y="183" fill="#00ff19"/><rect x="1319" y="193" fill="#00ff2b"/><rect x="1319" y="203" fill="#00ff3e"/><rect x="1319" y="213" fill="#00ff4f"/><rect x="1319" y="223" fill="#00ff61"/><rect x="1319" y="233" fill="#00ff74"/><rect x="1319" y="243" fill="#00ff86"/><rect x="1319" y="253" fill="#00ff99"/><rect x="1319" y="263" fill="#00ffac"/><rect x="1319" y="273" fill="#00ffc0"/><rect x="1319" y="283" fill="#00ffd4"/><rect x="1319" y="293" fill="#00ffe9"/><rect x="1319" y="303" fill="#00ffff"/><rect x="1319" y="313" fill="#00ebff"/><rect x="1319" y="323" fill="#00d9ff"/><rect x="1319" y="333" fill="#00c9ff"/><rect x="1319" y="343" fill="#00baff"/><rect x="1319" y="353" fill="#00aeff"/><rect x="1319" y="363" fill="#00a2ff"/><rect x="1319" y="373" fill="#0097ff"/><rect x="1319" y="383" fill="#008eff"/><rect x="1319" y="393" fill="#0085ff"/><rect x="1319" y="403" fill="#007cff"/><rect x="1319" y="413" fill="#0075ff"/><rect x="1319" y="423" fill="#006eff"/><rect x="1319" y="433" fill="#0067ff"/><rect x="1319" y="443" fill="#0061ff"/><rect x="1319" y="453" fill="#005bff"/><rect x="1319" y="463" fill="#0056ff"/><rect x="1319" y="473" fill="#0051ff"/><rect x="1319" y="483" fill="#004cff"/><rect x="1329" y="133" fill="#00ff00"/><rect x="1329" y="143" fill="#00ff00"/><rect x="1329" y="153" fill="#00ff00"/><rect x="1329" y="163" fill="#00ff00"/><rect x="1329" y="173" fill="#00ff02"/><rect x="1329" y="183" fill="#00ff17"/><rect x="1329" y="193" fill="#00ff2a"/><rect x="1329" y="203" fill="#00ff3d"/><rect x="1329" y="213" fill="#00ff4f"/><rect x="1329" y="223" fill="#00ff62"/><rect x="1329" y="233" fill="#00ff74"/><rect x="1329" y="243" fill="#00ff87"/><rect x="1329" y="253" fill="#00ff9a"/><rect x="1329" y="263" fill="#00ffae"/><rect x="1329" y="273" fill="#00ffc2"/><rect x="1329" y="283" fill="#00ffd7"/><rect x="1329" y="293" fill="#00ffed"/><rect x="1329" y="303" fill="#00fbff"/><rect x="1329" y="313" fill="#00e7ff"/><rect x="1329" y="323" fill="#00d5ff"/><rect x="1329" y="333" fill="#00c5ff"/><rect x="1329" y="343" fill="#00b6ff"/><rect x="1329" y="353" fill="#00aaff"/><rect x="1329" y="363" fill="#009eff"/><rect x="1329" y="373" fill="#0094ff"/><rect x="1329" y="383" fill="#008aff"/><rect x="1329" y="393" fill="#0081ff"/><rect x="1329" y="403" fill="#0079ff"/><rect x="1329" y="413" fill="#0071ff"/><rect x="1329" y="423" fill="#006aff"/><rect x="1329" y="433" fill="#0064ff"/><rect x="1329" y="443" fill="#005eff"/><rect x="1329" y="453" fill="#0058ff"/><rect x="1329" y="463" fill="#0053ff"/><rect x="1329" y="473" fill="#004eff"/><rect x="1329" y="483" fill="#0049ff"/><rect x="1329" y="493" fill="#0044ff"/><rect x="1329" y="503" fill="#0040ff"/><rect x="1339" y="133" fill="#00ff00"/><rect x="1339" y="143" fill="#00ff00"/><rect x="1339" y="153" fill="#00ff00"/><rect x="1339" y="163" fill="#00ff00"/><rect x="1339" y="173" fill="#00ff00"/><rect x="1339" y="183" fill="#00ff16"/><rect x="1339" y="193" fill="#00ff29"/><rect x="1339" y="203" fill="#00ff3c"/><rect x="1339" y="213" fill="#00ff4f"/><rect x="1339" y="223" fill="#00ff62"/><rect x="1339" y="233" fill="#00ff75"/><rect x="1339" y="243" fill="#00ff88"/><rect x="1339" y="253" fill="#00ff9c"/><rect x="1339" y="263" fill="#00ffb0"/><rect x="1339" y="273" fill="#00ffc5"/><rect x="1339" y="283" fill="#00ffdb"/><rect x="1339" y="293" fill="#00fff1"/><rect x="1339" y="303" fill="#00f6ff"/><rect x="1339" y="313" fill="#00e2ff"/><rect x="1339" y="323" fill="#00d0ff"/><rect x="1339" y="333" fill="#00c0ff"/><rect x="1339" y="343" fill="#00b2ff"/><rect x="1339" y="353" fill="#00a6ff"/><rect x="1339" y="363" fill="#009aff"/><rect x="1339" y="373" fill="#0090ff"/><rect x="1339" y="383" fill="#0086ff"/><rect x="1339" y="393" fill="#007dff"/><rect x="1339" y="403" fill="#0075ff"/><rect x="1339" y="413" fill="#006eff"/><rect x="1339" y="423" fill="#0067ff"/><rect x="1339" y="433" fill="#0061ff"/><rect x="1339" y="443" fill="#005bff"/><rect x="1339" y="453" fill="#0055ff"/><rect x="1339" y="463" fill="#0050ff"/><rect x="1339" y="473" fill="#004bff"/><rect x="1339" y="483" fill="#0046ff"/><rect x="1339" y="493" fill="#0041ff"/><rect x="1339" y="503" fill="#003dff"/><rect x="1339" y="513" fill="#0039ff"/><rect x="1339" y="523" fill="#0035ff"/><rect x="1349" y="133" fill="#00ff00"/><rect x="1349" y="143" fill="#00ff00"/><rect x="1349" y="153" fill="#00ff00"/><rect x="1349" y="163" fill="#00ff00"/><rect x="1349" y="173" fill="#00ff00"/><rect x="1349" y="183" fill="#00ff14"/><rect x="1349" y="193" fill="#00ff28"/><rect x="1349" y="203" fill="#00ff3b"/><rect x="1349" y="213" fill="#00ff4f"/><rect x="1349" y="223" fill="#00ff62"/><rect x="1349" y="233" fill="#00ff76"/><rect x="1349" y="243" fill="#00ff89"/><rect x="1349" y="253" fill="#00ff9e"/><rect x="1349" y="263" fill="#00ffb3"/><rect x="1349" y="273" fill="#00ffc8"/><rect x="1349" y="283" fill="#00ffde"/><rect x="1349" y="293" fill="#00fff5"/><rect x="1349" y="303" fill="#00f2ff"/><rect x="1349" y="313" fill="#00deff"/><rect x="1349" y="323" fill="#00ccff"/><rect x="1349" y="333" fill="#00bcff"/><rect x="1349" y="343" fill="#00aeff"/><rect x="1349" y="353" fill="#00a2ff"/><rect x="1349" y="363" fill="#0096ff"/><rect x="1349" y="373" fill="#008cff"/><rect x="1349" y="383" fill="#0082ff"/><rect x="1349" y="393" fill="#007aff"/><rect x="1349" y="403" fill="#0072ff"/><rect x="1349" y="413" fill="#006aff"/><rect x="1349" y="423" fill="#0064ff"/><rect x="1349" y="433" fill="#005dff"/><rect x="1349" y="443" fill="#0057ff"/><rect x="1349" y="453" fill="#0052ff"/><rect x="1349" y="463" fill="#004cff"/><rect x="1349" y="473" fill="#0047ff"/><rect x="1349" y="483" fill="#0043ff"/><rect x="1349" y="493" fill="#003eff"/><rect x="1349" y="503" fill="#003aff"/><rect x="1349" y="513" fill="#0036ff"/><rect x="1349" y="523" fill="#0032ff"/><rect x="1349" y="533" fill="#002fff"/><rect x="1349" y="543" fill="#002bff"/><rect x="1359" y="143" fill="#00ff00"/><rect x="1359" y="153" fill="#00ff00"/><rect x="1359" y="163" fill="#00ff00"/><rect x="1359" y="173" fill="#00ff00"/><rect x="1359" y="183" fill="#00ff12"/><rect x="1359" y="193" fill="#00ff27"/><rect x="1359" y="203" fill="#00ff3b"/><rect x="1359" y="213" fill="#00ff4e"/><rect x="1359" y="223" fill="#00ff62"/><rect x="1359" y="233" fill="#00ff76"/><rect x="1359" y="243" fill="#00ff8b"/><rect x="1359" y="253" fill="#00ffa0"/><rect x="1359" y="263" fill="#00ffb5"/><rect x="1359" y="273" fill="#00ffcb"/><rect x="1359" y="283" fill="#00ffe2"/><rect x="1359" y="293" fill="#00fffa"/><rect x="1359" y="303" fill="#00edff"/><rect x="1359" y="313" fill="#00d9ff"/><rect x="1359" y="323" fill="#00c7ff"/><rect x="1359" y="333" fill="#00b8ff"/><rect x="1359" y="343" fill="#00aaff"/><rect x="1359" y="353" fill="#009dff"/><rect x="1359" y="363" fill="#0092ff"/><rect x="1359" y="373" fill="#0088ff"/><rect x="1359" y="383" fill="#007fff"/><rect x="1359" y="393" fill="#0076ff"/><rect x="1359" y="403" fill="#006eff"/><rect x="1359" y="413" fill="#0067ff"/><rect x="1359" y="423" fill="#0060ff"/><rect x="1359" y="433" fill="#005aff"/><rect x="1359" y="443" fill="#0054ff"/><rect x="1359" y="453" fill="#004eff"/><rect x="1359" y="463" fill="#0049ff"/><rect x="1359" y="473" fill="#0044ff"/><rect x="1359" y="483" fill="#0040ff"/><rect x="1359" y="493" fill="#003bff"/><rect x="1359" y="503" fill="#0037ff"/><rect x="1359" y="513" fill="#0033ff"/><rect x="1359" y="523" fill="#002fff"/><rect x="1359" y="533" fill="#002cff"/><rect x="1359" y="543" fill="#0028ff"/><rect x="1359" y="553" fill="#0025ff"/><rect x="1359" y="563" fill="#0022ff"/><rect x="1369" y="143" fill="#00ff00"/><rect x="1369" y="153" fill="#00ff00"/><rect x="1369" y="163" fill="#00ff00"/><rect x="1369" y="173" fill="#00ff00"/><rect x="1369" y="183" fill="#00ff0f"/><rect x="1369" y="193" fill="#00ff25"/><rect x="1369" y="203" fill="#00ff3a"/><rect x="1369" y="213" fill="#00ff4e"/><rect x="1369" y="223" fill="#00ff62"/><rect x="1369" y="233" fill="#00ff77"/><rect x="1369" y="243" fill="#00ff8c"/><rect x="1369" y="253" fill="#00ffa2"/><rect x="1369" y="263" fill="#00ffb8"/><rect x="1369" y="273" fill="#00ffcf"/><rect x="1369" y="283" fill="#00ffe6"/><rect x="1369" y="293" fill="#00ffff"/><rect x="1369" y="303" fill="#00e8ff"/><rect x="1369" y="313" fill="#00d4ff"/><rect x="1369" y="323" fill="#00c3ff"/><rect x="1369" y="333" fill="#00b3ff"/><rect x="1369" y="343" fill="#00a6ff"/><rect x="1369" y="353" fill="#0099ff"/><rect x="1369" y="363" fill="#008eff"/><rect x="1369" y="373" fill="#0084ff"/><rect x="1369" y="383" fill="#007bff"/><rect x="1369" y="393" fill="#0072ff"/><rect x="1369" y="403" fill="#006aff"/><rect x="1369" y="413" fill="#0063ff"/><rect x="1369" y="423" fill="#005dff"/><rect x="1369" y="433" fill="#0056ff"/><rect x="1369" y="443" fill="#0050ff"/><rect x="1369" y="453" fill="#004bff"/><rect x="1369" y="463" fill="#0046ff"/><rect x="1369" y="473" fill="#0041ff"/><rect x="1369" y="483" fill="#003cff"/><rect x="1369" y="493" fill="#0038ff"/><rect x="1369" y="503" fill="#0034ff"/><rect x="1369" y="513" fill="#0030ff"/><rect x="1369" y="523" fill="#002cff"/><rect x="1369" y="533" fill="#0029ff"/><rect x="1369" y="543" fill="#0025ff"/><rect x="1369" y="553" fill="#0022ff"/><rect x="1369" y="563" fill="#001fff"/><rect x="1369" y="573" fill="#001cff"/><rect x="1369" y="583" fill="#0019ff"/><rect x="1379" y="143" fill="#07ff00"/><rect x="1379" y="153" fill="#03ff00"/><rect x="1379" y="163" fill="#00ff00"/><rect x="1379" y="173" fill="#00ff00"/><rect x="1379" y="183" fill="#00ff0d"/><rect x="1379" y="193" fill="#00ff24"/><rect x="1379" y="203" fill="#00ff39"/><rect x="1379" y="213" fill="#00ff4e"/><rect x="1379" y="223" fill="#00ff63"/><rect x="1379" y="233" fill="#00ff78"/><rect x="1379" y="243" fill="#00ff8d"/><rect x="1379" y="253" fill="#00ffa4"/><rect x="1379" y="263" fill="#00ffbb"/><rect x="1379" y="273" fill="#00ffd2"/><rect x="1379" y="283" fill="#00ffea"/><rect x="1379" y="293" fill="#00faff"/><rect x="1379" y="303" fill="#00e3ff"/><rect x="1379" y="313" fill="#00cfff"/><rect x="1379" y="323" fill="#00beff"/><rect x="1379" y="333" fill="#00afff"/><rect x="1379" y="343" fill="#00a1ff"/><rect x="1379" y="353" fill="#0095ff"/><rect x="1379" y="363" fill="#008aff"/><rect x="1379" y="373" fill="#0080ff"/><rect x="1379" y="383" fill="#0077ff"/><rect x="1379" y="393" fill="#006eff"/><rect x="1379" y="403" fill="#0067ff"/><rect x="1379" y="413" fill="#0060ff"/><rect x="1379" y="423" fill="#0059ff"/><rect x="1379" y="433" fill="#0053ff"/><rect x="1379" y="443" fill="#004dff"/><rect x="1379" y="453" fill="#0048ff"/><rect x="1379" y="463" fill="#0043ff"/><rect x="1379" y="473" fill="#003eff"/><rect x="1379" y="483" fill="#0039ff"/><rect x="1379" y="493" fill="#0035ff"/><rect x="1379" y="503" fill="#0031ff"/><rect x="1379" y="513" fill="#002dff"/><rect x="1379" y="523" fill="#0029ff"/><rect x="1379" y="533" fill="#0026ff"/><rect x="1379" y="543" fill="#0022ff"/><rect x="1379" y="553" fill="#001fff"/><rect x="1379" y="563" fill="#001cff"/><rect x="1379" y="573" fill="#0019ff"/><rect x="1379" y="583" fill="#0016ff"/><rect x="1379" y="593" fill="#0013ff"/><rect x="1389" y="143" fill="#23ff00"/><rect x="1389" y="153" fill="#20ff00"/><rect x="1389" y="163" fill="#1dff00"/><rect x="1389" y="173" fill="#1aff00"/><rect x="1389" y="183" fill="#16ff0b"/><rect x="1389" y="193" fill="#13ff22"/><rect x="1389" y="203" fill="#0fff38"/><rect x="1389" y="213" fill="#0aff4d"/><rect x="1389" y="223" fill="#06ff63"/><rect x="1389" y="233" fill="#00ff79"/><rect x="1389" y="243" fill="#00ff8f"/><rect x="1389" y="253" fill="#00ffa6"/><rect x="1389" y="263" fill="#00ffbd"/><rect x="1389" y="273" fill="#00ffd6"/><rect x="1389" y="283" fill="#00ffef"/><rect x="1389" y="293" fill="#00f5ff"/><rect x="1389" y="303" fill="#00deff"/><rect x="1389" y="313" fill="#00cbff"/><rect x="1389" y="323" fill="#00b9ff"/><rect x="1389" y="333" fill="#00aaff"/><rect x="1389" y="343" fill="#009dff"/><rect x="1389" y="353" fill="#0091ff"/><rect x="1389" y="363" fill="#0086ff"/><rect x="1389" y="373" fill="#007cff"/><rect x="1389" y="383" fill="#0073ff"/><rect x="1389" y="393" fill="#006bff"/><rect x="1389" y="403" fill="#0063ff"/><rect x="1389" y="413" fill="#005cff"/><rect x="1389" y="423" fill="#0055ff"/><rect x="1389" y="433" fill="#004fff"/><rect x="1389" y="443" fill="#004aff"/><rect x="1389" y="453" fill="#0044ff"/><rect x="1389" y="463" fill="#003fff"/><rect x="1389" y="473" fill="#003aff"/><rect x="1389" y="483" fill="#0036ff"/><rect x="1389" y="493" fill="#0032ff"/><rect x="1389" y="503" fill="#002eff"/><rect x="1389" y="513" fill="#002aff"/><rect x="1389" y="523" fill="#0026ff"/><rect x="1389" y="533" fill="#0023ff"/><rect x="1389" y="543" fill="#001fff"/><rect x="1389" y="553" fill="#001cff"/><rect x="1389" y="563" fill="#0019ff"/><rect x="1389" y="573" fill="#0016ff"/><rect x="1389" y="583" fill="#0013ff"/><rect x="1389" y="593" fill="#0010ff"/><rect x="1389" y="603" fill="#000eff"/><rect x="1389" y="613" fill="#000bff"/><rect x="1399" y="143" fill="#3cff00"/><rect x="1399" y="153" fill="#3aff00"/><rect x="1399" y="163" fill="#38ff00"/><rect x="1399" y="173" fill="#35ff00"/><rect x="1399" y="183" fill="#33ff08"/><rect x="1399" y="193" fill="#30ff20"/><rect x="1399" y="203" fill="#2dff37"/><rect x="1399" y="213" fill="#2aff4d"/><rect x="1399" y="223" fill="#27ff63"/><rect x="1399" y="233" fill="#24ff7a"/><rect x="1399" y="243" fill="#20ff91"/><rect x="1399" y="253" fill="#1cffa8"/><rect x="1399" y="263" fill="#18ffc1"/><rect x="1399" y="273" fill="#14ffda"/><rect x="1399" y="283" fill="#0ffff4"/><rect x="1399" y="293" fill="#09f0ff"/><rect x="1399" y="303" fill="#03d9ff"/><rect x="1399" y="313" fill="#00c6ff"/><rect x="1399" y="323" fill="#00b5ff"/><rect x="1399" y="333" fill="#00a5ff"/><rect x="1399" y="343" fill="#0098ff"/><rect x="1399" y="353" fill="#008cff"/><rect x="1399" y="363" fill="#0081ff"/><rect x="1399" y="373" fill="#0078ff"/><rect x="1399" y="383" fill="#006fff"/><rect x="1399" y="393" fill="#0067ff"/><rect x="1399" y="403" fill="#005fff"/><rect x="1399" y="413" fill="#0058ff"/><rect x="1399" y="423" fill="#0052ff"/><rect x="1399" y="433" fill="#004cff"/><rect x="1399" y="443" fill="#0046ff"/><rect x="1399" y="453" fill="#0041ff"/><rect x="1399" y="463" fill="#003cff"/><rect x="1399" y="473" fill="#0037ff"/><rect x="1399" y="483" fill="#0033ff"/><rect x="1399" y="493" fill="#002eff"/><rect x="1399" y="503" fill="#002bff"/><rect x="1399" y="513" fill="#0027ff"/><rect x="1399" y="523" fill="#0023ff"/><rect x="1399" y="533" fill="#0020ff"/><rect x="1399" y="543" fill="#001cff"/><rect x="1399" y="553" fill="#0019ff"/><rect x="1399" y="563" fill="#0016ff"/><rect x="1399" y="573" fill="#0013ff"/><rect x="1399" y="583" fill="#0010ff"/><rect x="1399" y="593" fill="#000dff"/><rect x="1399" y="603" fill="#000aff"/><rect x="1399" y="613" fill="#0008ff"/><rect x="1399" y="623" fill="#0005ff"/><rect x="1409" y="143" fill="#55ff00"/><rect x="1409" y="153" fill="#53ff00"/><rect x="1409" y="163" fill="#52ff00"/><rect x="1409" y="173" fill="#50ff00"/><rect x="1409" y="183" fill="#4eff05"/><rect x="1409" y="193" fill="#4cff1e"/><rect x="1409" y="203" fill="#4aff36"/><rect x="1409" y="213" fill="#48ff4d"/><rect x="1409" y="223" fill="#46ff63"/><rect x="1409" y="233" fill="#43ff7b"/><rect x="1409" y="243" fill="#41ff92"/><rect x="1409" y="253" fill="#3effab"/><rect x="1409" y="263" fill="#3bffc4"/><rect x="1409" y="273" fill="#38ffde"/><rect x="1409" y="283" fill="#35fff9"/><rect x="1409" y="293" fill="#2eeaff"/><rect x="1409" y="303" fill="#26d4ff"/><rect x="1409" y="313" fill="#20c0ff"/><rect x="1409" y="323" fill="#1ab0ff"/><rect x="1409" y="333" fill="#15a1ff"/><rect x="1409" y="343" fill="#1093ff"/><rect x="1409" y="353" fill="#0c88ff"/><rect x="1409" y="363" fill="#087dff"/><rect x="1409" y="373" fill="#0473ff"/><rect x="1409" y="383" fill="#006bff"/><rect x="1409" y="393" fill="#0062ff"/><rect x="1409" y="403" fill="#005bff"/><rect x="1409" y="413" fill="#0054ff"/><rect x="1409" y="423" fill="#004eff"/><rect x="1409" y="433" fill="#0048ff"/><rect x="1409" y="443" fill="#0042ff"/><rect x="1409" y="453" fill="#003dff"/><rect x="1409" y="463" fill="#0038ff"/><rect x="1409" y="473" fill="#0034ff"/><rect x="1409" y="483" fill="#002fff"/><rect x="1409" y="493" fill="#002bff"/><rect x="1409" y="503" fill="#0027ff"/><rect x="1409" y="513" fill="#0023ff"/><rect x="1409" y="523" fill="#0020ff"/><rect x="1409" y="533" fill="#001cff"/><rect x="1409" y="543" fill="#0019ff"/><rect x="1409" y="553" fill="#0016ff"/><rect x="1409" y="563" fill="#0013ff"/><rect x="1409" y="573" fill="#0010ff"/><rect x="1409" y="583" fill="#000dff"/><rect x="1409" y="593" fill="#000aff"/><rect x="1409" y="603" fill="#0007ff"/><rect x="1409" y="613" fill="#0004ff"/><rect x="1409" y="623" fill="#0001ff"/><rect x="1409" y="633" fill="#0000ff"/><rect x="1409" y="643" fill="#0000ff"/><rect x="1419" y="143" fill="#6eff00"/><rect x="1419" y="153" fill="#6dff00"/><rect x="1419" y="163" fill="#6cff00"/><rect x="1419" y="173" fill="#6bff00"/><rect x="1419" y="183" fill="#6aff01"/><rect x="1419" y="193" fill="#69ff1d"/><rect x="1419" y="203" fill="#67ff35"/><rect x="1419" y="213" fill="#66ff4c"/><rect x="1419" y="223" fill="#64ff64"/><rect x="1419" y="233" fill="#63ff7c"/><rect x="1419" y="243" fill="#61ff94"/><rect x="1419" y="253" fill="#5fffad"/><rect x="1419" y="263" fill="#5effc7"/><rect x="1419" y="273" fill="#5cffe2"/><rect x="1419" y="283" fill="#5affff"/><rect x="1419" y="293" fill="#4ee5ff"/><rect x="1419" y="303" fill="#45cfff"/><rect x="1419" y="313" fill="#3dbbff"/><rect x="1419" y="323" fill="#35abff"/><rect x="1419" y="333" fill="#2f9cff"/><rect x="1419" y="343" fill="#298fff"/><rect x="1419" y="353" fill="#2483ff"/><rect x="1419" y="363" fill="#1f79ff"/><rect x="1419" y="373" fill="#1b6fff"/><rect x="1419" y="383" fill="#1766ff"/><rect x="1419" y="393" fill="#145eff"/><rect x="1419" y="403" fill="#1057ff"/><rect x="1419" y="413" fill="#0d50ff"/><rect x="1419" y="423" fill="#0a4aff"/><rect x="1419" y="433" fill="#0744ff"/><rect x="1419" y="443" fill="#043fff"/><rect x="1419" y="453" fill="#013aff"/><rect x="1419" y="463" fill="#0035ff"/><rect x="1419" y="473" fill="#0030ff"/><rect x="1419" y="483" fill="#002cff"/><rect x="1419" y="493" fill="#0028ff"/><rect x="1419" y="503" fill="#0024ff"/><rect x="1419" y="513" fill="#0020ff"/><rect x="1419" y="523" fill="#001dff"/><rect x="1419" y="533" fill="#0019ff"/><rect x="1419" y="543" fill="#0016ff"/><rect x="1419" y="553" fill="#0013ff"/><rect x="1419" y="563" fill="#0010ff"/><rect x="1419" y="573" fill="#000dff"/><rect x="1419" y="583" fill="#000aff"/><rect x="1419" y="593" fill="#0007ff"/><rect x="1419" y="603" fill="#0004ff"/><rect x="1419" y="613" fill="#0000ff"/><rect x="1419" y="623" fill="#0000ff"/><rect x="1419" y="633" fill="#0000ff"/><rect x="1419" y="643" fill="#0000ff"/><rect x="1419" y="653" fill="#0000ff"/><rect x="1429" y="143" fill="#88ff00"/><rect x="1429" y="153" fill="#87ff00"/><rect x="1429" y="163" fill="#87ff00"/><rect x="1429" y="173" fill="#86ff00"/><rect x="1429" y="183" fill="#86ff00"/><rect x="1429" y="193" fill="#85ff1a"/><rect x="1429" y="203" fill="#85ff33"/><rect x="1429" y="213" fill="#84ff4c"/><rect x="1429" y="223" fill="#83ff64"/><rect x="1429" y="233" fill="#83ff7d"/><rect x="1429" y="243" fill="#82ff96"/><rect x="1429" y="253" fill="#81ffb0"/><rect x="1429" y="263" fill="#80ffcb"/><rect x="1429" y="273" fill="#7fffe7"/><rect x="1429" y="283" fill="#7cfaff"/><rect x="1429" y="293" fill="#6edfff"/><rect x="1429" y="303" fill="#62c9ff"/><rect x="1429" y="313" fill="#58b6ff"/><rect x="1429" y="323" fill="#4fa5ff"/><rect x="1429" y="333" fill="#4797ff"/><rect x="1429" y="343" fill="#408aff"/><rect x="1429" y="353" fill="#3a7eff"/><rect x="1429" y="363" fill="#3574ff"/><rect x="1429" y="373" fill="#306bff"/><rect x="1429" y="383" fill="#2b62ff"/><rect x="1429" y="393" fill="#275aff"/><rect x="1429" y="403" fill="#2353ff"/><rect x="1429" y="413" fill="#1f4cff"/><rect x="1429" y="423" fill="#1c46ff"/><rect x="1429" y="433" fill="#1940ff"/><rect x="1429" y="443" fill="#163bff"/><rect x="1429" y="453" fill="#1336ff"/><rect x="1429" y="463" fill="#1031ff"/><rect x="1429" y="473" fill="#0e2dff"/><rect x="1429" y="483" fill="#0b28ff"/><rect x="1429" y="493" fill="#0924ff"/><rect x="1429" y="503" fill="#0721ff"/><rect x="1429" y="513" fill="#041dff"/><rect x="1429" y="523" fill="#0219ff"/><rect x="1429" y="533" fill="#0016ff"/><rect x="1429" y="543" fill="#0013ff"/><rect x="1429" y="553" fill="#000fff"/><rect x="1429" y="563" fill="#000cff"/><rect x="1429" y="573" fill="#0009ff"/><rect x="1429" y="583" fill="#0006ff"/><rect x="1429" y="593" fill="#0003ff"/><rect x="1429" y="603" fill="#0000ff"/><rect x="1429" y="613" fill="#0000ff"/><rect x="1429" y="623" fill="#0000ff"/><rect x="1429" y="633" fill="#0000ff"/><rect x="1429" y="643" fill="#0000ff"/><rect x="1429" y="653" fill="#0000ff"/><rect x="1429" y="663" fill="#0000ff"/><rect x="1439" y="143" fill="#a2ff00"/><rect x="1439" y="153" fill="#a2ff00"/><rect x="1439" y="163" fill="#a2ff00"/><rect x="1439" y="173" fill="#a3ff00"/><rect x="1439" y="183" fill="#a3ff00"/><rect x="1439" y="193" fill="#a3ff18"/><rect x="1439" y="203" fill="#a3ff32"/><rect x="1439" y="213" fill="#a3ff4b"/><rect x="1439" y="223" fill="#a3ff64"/><rect x="1439" y="233" fill="#a3ff7e"/><rect x="1439" y="243" fill="#a4ff98"/><rect x="1439" y="253" fill="#a4ffb3"/><rect x="1439" y="263" fill="#a4ffcf"/><rect x="1439" y="273" fill="#a4ffec"/><rect x="1439" y="283" fill="#9df4ff"/><rect x="1439" y="293" fill="#8cd9ff"/><rect x="1439" y="303" fill="#7ec3ff"/><rect x="1439" y="313" fill="#72b0ff"/><rect x="1439" y="323" fill="#68a0ff"/><rect x="1439" y="333" fill="#5f92ff"/><rect x="1439" y="343" fill="#5785ff"/><rect x="1439" y="353" fill="#4f7aff"/><rect x="1439" y="363" fill="#496fff"/><rect x="1439" y="373" fill="#4366ff"/><rect x="1439" y="383" fill="#3e5eff"/><rect x="1439" y="393" fill="#3956ff"/><rect x="1439" y="403" fill="#344fff"/><rect x="1439" y="413" fill="#3048ff"/><rect x="1439" y="423" fill="#2c42ff"/><rect x="1439" y="433" fill="#293cff"/><rect x="1439" y="443" fill="#2537ff"/><rect x="1439" y="453" fill="#2232ff"/><rect x="1439" y="463" fill="#1f2dff"/><rect x="1439" y="473" fill="#1c29ff"/><rect x="1439" y="483" fill="#1a25ff"/><rect x="1439" y="493" fill="#1721ff"/><rect x="1439" y="503" fill="#151dff"/><rect x="1439" y="513" fill="#1319ff"/><rect x="1439" y="523" fill="#1016ff"/><rect x="1439" y="533" fill="#0e12ff"/><rect x="1439" y="543" fill="#0c0fff"/><rect x="1439" y="553" fill="#0a0cff"/><rect x="1439" y="563" fill="#0809ff"/><rect x="1439" y="573" fill="#0606ff"/><rect x="1439" y="583" fill="#0502ff"/><rect x="1439" y="593" fill="#0300ff"/><rect x="1439" y="603" fill="#0100ff"/><rect x="1439" y="613" fill="#0000ff"/><rect x="1439" y="623" fill="#0000ff"/><rect x="1439" y="633" fill="#0000ff"/><rect x="1439" y="643" fill="#0000ff"/><rect x="1439" y="653" fill="#0000ff"/><rect x="1439" y="663" fill="#0000ff"/><rect x="1439" y="673" fill="#0000ff"/><rect x="1439" y="683" fill="#0000ff"/><rect x="1449" y="153" fill="#beff00"/><rect x="1449" y="163" fill="#bfff00"/><rect x="1449" y="173" fill="#c0ff00"/><rect x="1449" y="183" fill="#c0ff00"/><rect x="1449" y="193" fill="#c1ff16"/><rect x="1449" y="203" fill="#c2ff31"/><rect x="1449" y="213" fill="#c3ff4b"/><rect x="1449" y="223" fill="#c4ff65"/><rect x="1449" y="233" fill="#c6ff7f"/><rect x="1449" y="243" fill="#c7ff9a"/><rect x="1449" y="253" fill="#c8ffb6"/><rect x="1449" y="263" fill="#c9ffd4"/><rect x="1449" y="273" fill="#cbfff2"/><rect x="1449" y="283" fill="#beedff"/><rect x="1449" y="293" fill="#abd3ff"/><rect x="1449" y="303" fill="#9abeff"/><rect x="1449" y="313" fill="#8cabff"/><rect x="1449" y="323" fill="#809bff"/><rect x="1449" y="333" fill="#768dff"/><rect x="1449" y="343" fill="#6c80ff"/><rect x="1449" y="353" fill="#6475ff"/><rect x="1449" y="363" fill="#5d6bff"/><rect x="1449" y="373" fill="#5662ff"/><rect x="1449" y="383" fill="#5059ff"/><rect x="1449" y="393" fill="#4a52ff"/><rect x="1449" y="403" fill="#454bff"/><rect x="1449" y="413" fill="#4044ff"/><rect x="1449" y="423" fill="#3c3eff"/><rect x="1449" y="433" fill="#3839ff"/><rect x="1449" y="443" fill="#3433ff"/><rect x="1449" y="453" fill="#302eff"/><rect x="1449" y="463" fill="#2d2aff"/><rect x="1449" y="473" fill="#2a25ff"/><rect x="1449" y="483" fill="#2721ff"/><rect x="1449" y="493" fill="#241dff"/><rect x="1449" y="503" fill="#2219ff"/><rect x="1449" y="513" fill="#1f16ff"/><rect x="1449" y="523" fill="#1d12ff"/><rect x="1449" y="533" fill="#1a0fff"/><rect x="1449" y="543" fill="#180cff"/><rect x="1449" y="553" fill="#1608ff"/><rect x="1449" y="563" fill="#1405ff"/><rect x="1449" y="573" fill="#1202ff"/><rect x="1449" y="583" fill="#1000ff"/><rect x="1449" y="593" fill="#0f00ff"/><rect x="1449" y="603" fill="#0d00ff"/><rect x="1449" y="613" fill="#0b00ff"/><rect x="1449" y="623" fill="#0a00ff"/><rect x="1449" y="633" fill="#0800ff"/><rect x="1449" y="643" fill="#0600ff"/><rect x="1449" y="653" fill="#0500ff"/><rect x="1449" y="663" fill="#0300ff"/><rect x="1449" y="673" fill="#0100ff"/><rect x="1449" y="683" fill="#0000ff"/><rect x="1449" y="693" fill="#0000ff"/><rect x="1459" y="153" fill="#dbff00"/><rect x="1459" y="163" fill="#dcff00"/><rect x="1459" y="173" fill="#deff00"/><rect x="1459" y="183" fill="#e0ff00"/><rect x="1459" y="193" fill="#e1ff13"/><rect x="1459" y="203" fill="#e3ff2f"/><rect x="1459" y="213" fill="#e5ff4a"/><rect x="1459" y="223" fill="#e7ff65"/><rect x="1459" y="233" fill="#e9ff81"/><rect x="1459" y="243" fill="#ecff9d"/><rect x="1459" y="253" fill="#eeffba"/><rect x="1459" y="263" fill="#f1ffd8"/><rect x="1459" y="273" fill="#f3fff8"/><rect x="1459" y="283" fill="#dfe7ff"/><rect x="1459" y="293" fill="#c9cdff"/><rect x="1459" y="303" fill="#b6b8ff"/><rect x="1459" y="313" fill="#a6a5ff"/><rect x="1459" y="323" fill="#9995ff"/><rect x="1459" y="333" fill="#8d87ff"/><rect x="1459" y="343" fill="#827bff"/><rect x="1459" y="353" fill="#7870ff"/><rect x="1459" y="363" fill="#7066ff"/><rect x="1459" y="373" fill="#685dff"/><rect x="1459" y="383" fill="#6155ff"/><rect x="1459" y="393" fill="#5b4dff"/><rect x="1459" y="403" fill="#5546ff"/><rect x="1459" y="413" fill="#5040ff"/><rect x="1459" y="423" fill="#4b3aff"/><rect x="1459" y="433" fill="#4734ff"/><rect x="1459" y="443" fill="#422fff"/><rect x="1459" y="453" fill="#3e2aff"/><rect x="1459" y="463" fill="#3b26ff"/><rect x="1459" y="473" fill="#3722ff"/><rect x="1459" y="483" fill="#341dff"/><rect x="1459" y="493" fill="#311aff"/><rect x="1459" y="503" fill="#2e16ff"/><rect x="1459" y="513" fill="#2b12ff"/><rect x="1459" y="523" fill="#280fff"/><rect x="1459" y="533" fill="#260bff"/><rect x="1459" y="543" fill="#2408ff"/><rect x="1459" y="553" fill="#2104ff"/><rect x="1459" y="563" fill="#1f01ff"/><rect x="1459" y="573" fill="#1d00ff"/><rect x="1459" y="583" fill="#1b00ff"/><rect x="1459" y="593" fill="#1900ff"/><rect x="1459" y="603" fill="#1700ff"/><rect x="1459" y="613" fill="#1500ff"/><rect x="1459" y="623" fill="#1400ff"/><rect x="1459" y="633" fill="#1200ff"/><rect x="1459" y="643" fill="#1000ff"/><rect x="1459" y="653" fill="#0f00ff"/><rect x="1459" y="663" fill="#0d00ff"/><rect x="1459" y="673" fill="#0c00ff"/><rect x="1459" y="683" fill="#0a00ff"/><rect x="1459" y="693" fill="#0900ff"/><rect x="1459" y="703" fill="#0800ff"/><rect x="1469" y="153" fill="#f9ff00"/><rect x="1469" y="163" fill="#fbff00"/><rect x="1469" y="173" fill="#fdff00"/><rect x="1469" y="183" fill="#fffe00"/><rect x="1469" y="193" fill="#fffb10"/><rect x="1469" y="203" fill="#fff92c"/><rect x="1469" y="213" fill="#fff647"/><rect x="1469" y="223" fill="#fff361"/><rect x="1469" y="233" fill="#fff07a"/><rect x="1469" y="243" fill="#ffed94"/><rect x="1469" y="253" fill="#ffeaae"/><rect x="1469" y="263" fill="#ffe6c8"/><rect x="1469" y="273" fill="#ffe3e3"/><rect x="1469" y="283" fill="#ffdffe"/><rect x="1469" y="293" fill="#e7c7ff"/><rect x="1469" y="303" fill="#d2b2ff"/><rect x="1469" y="313" fill="#c09fff"/><rect x="1469" y="323" fill="#b190ff"/><rect x="1469" y="333" fill="#a382ff"/><rect x="1469" y="343" fill="#9776ff"/><rect x="1469" y="353" fill="#8d6bff"/><rect x="1469" y="363" fill="#8361ff"/><rect x="1469" y="373" fill="#7b58ff"/><rect x="1469" y="383" fill="#7350ff"/><rect x="1469" y="393" fill="#6c49ff"/><rect x="1469" y="403" fill="#6542ff"/><rect x="1469" y="413" fill="#5f3cff"/><rect x="1469" y="423" fill="#5a36ff"/><rect x="1469" y="433" fill="#5530ff"/><rect x="1469" y="443" fill="#502bff"/><rect x="1469" y="453" fill="#4c26ff"/><rect x="1469" y="463" fill="#4822ff"/><rect x="1469" y="473" fill="#441eff"/><rect x="1469" y="483" fill="#401aff"/><rect x="1469" y="493" fill="#3d16ff"/><rect x="1469" y="503" fill="#3a12ff"/><rect x="1469" y="513" fill="#370eff"/><rect x="1469" y="523" fill="#340bff"/><rect x="1469" y="533" fill="#3107ff"/><rect x="1469" y="543" fill="#2e04ff"/><rect x="1469" y="553" fill="#2c00ff"/><rect x="1469" y="563" fill="#2900ff"/><rect x="1469" y="573" fill="#2700ff"/><rect x="1469" y="583" fill="#2500ff"/><rect x="1469" y="593" fill="#2300ff"/><rect x="1469" y="603" fill="#2100ff"/><rect x="1469" y="613" fill="#1f00ff"/><rect x="1469" y="623" fill="#1d00ff"/><rect x="1469" y="633" fill="#1b00ff"/><rect x="1469" y="643" fill="#1a00ff"/><rect x="1469" y="653" fill="#1800ff"/><rect x="1469" y="663" fill="#1600ff"/><rect x="1469" y="673" fill="#1500ff"/><rect x="1469" y="683" fill="#1300ff"/><rect x="1469" y="693" fill="#1200ff"/><rect x="1469" y="703" fill="#1000ff"/><rect x="1469" y="713" fill="#0f00ff"/><rect x="1479" y="153" fill="#ffe800"/><rect x="1479" y="163" fill="#ffe600"/><rect x="1479" y="173" fill="#ffe300"/><rect x="1479" y="183" fill="#ffe000"/><rect x="1479" y="193" fill="#ffde0c"/><rect x="1479" y="203" fill="#ffdb26"/><rect x="1479" y="213" fill="#ffd83e"/><rect x="1479" y="223" fill="#ffd555"/><rect x="1479" y="233" fill="#ffd16c"/><rect x="1479" y="243" fill="#ffce83"/><rect x="1479" y="253" fill="#ffcb9a"/><rect x="1479" y="263" fill="#ffc7b1"/><rect x="1479" y="273" fill="#ffc4c9"/><rect x="1479" y="283" fill="#ffc0e1"/><rect x="1479" y="293" fill="#ffbcf9"/><rect x="1479" y="303" fill="#eeabff"/><rect x="1479" y="313" fill="#da99ff"/><rect x="1479" y="323" fill="#c88aff"/><rect x="1479" y="333" fill="#b97cff"/><rect x="1479" y="343" fill="#ac70ff"/><rect x="1479" y="353" fill="#a066ff"/><rect x="1479" y="363" fill="#965cff"/><rect x="1479" y="373" fill="#8d53ff"/><rect x="1479" y="383" fill="#844bff"/><rect x="1479" y="393" fill="#7c44ff"/><rect x="1479" y="403" fill="#753dff"/><rect x="1479" y="413" fill="#6f37ff"/><rect x="1479" y="423" fill="#6931ff"/><rect x="1479" y="433" fill="#632cff"/><rect x="1479" y="443" fill="#5e27ff"/><rect x="1479" y="453" fill="#5922ff"/><rect x="1479" y="463" fill="#551eff"/><rect x="1479" y="473" fill="#501aff"/><rect x="1479" y="483" fill="#4c16ff"/><rect x="1479" y="493" fill="#4912ff"/><rect x="1479" y="503" fill="#450eff"/><rect x="1479" y="513" fill="#420aff"/><rect x="1479" y="523" fill="#3f07ff"/><rect x="1479" y="533" fill="#3c03ff"/><rect x="1479" y="543" fill="#3900ff"/><rect x="1479" y="553" fill="#3600ff"/><rect x="1479" y="563" fill="#3400ff"/><rect x="1479" y="573" fill="#3100ff"/><rect x="1479" y="583" fill="#2f00ff"/><rect x="1479" y="593" fill="#2c00ff"/><rect x="1479" y="603" fill="#2a00ff"/><rect x="1479" y="613" fill="#2800ff"/><rect x="1479" y="623" fill="#2600ff"/><rect x="1479" y="633" fill="#2400ff"/><rect x="1479" y="643" fill="#2300ff"/><rect x="1479" y="653" fill="#2100ff"/><rect x="1479" y="663" fill="#1f00ff"/><rect x="1479" y="673" fill="#1d00ff"/><rect x="1479" y="683" fill="#1c00ff"/><rect x="1479" y="693" fill="#1a00ff"/><rect x="1479" y="703" fill="#1900ff"/><rect x="1479" y="713" fill="#1700ff"/><rect x="1479" y="723" fill="#1600ff"/><rect x="1489" y="153" fill="#ffd000"/><rect x="1489" y="163" fill="#ffcd00"/><rect x="1489" y="173" fill="#ffcb00"/><rect x="1489" y="183" fill="#ffc800"/><rect x="1489" y="193" fill="#ffc508"/><rect x="1489" y="203" fill="#ffc220"/><rect x="1489" y="213" fill="#ffbf36"/><rect x="1489" y="223" fill="#ffbc4b"/><rect x="1489" y="233" fill="#ffb860"/><rect x="1489" y="243" fill="#ffb575"/><rect x="1489" y="253" fill="#ffb28a"/><rect x="1489" y="263" fill="#ffae9f"/><rect x="1489" y="273" fill="#ffaab4"/><rect x="1489" y="283" fill="#ffa7c9"/><rect x="1489" y="293" fill="#ffa3df"/><rect x="1489" y="303" fill="#ff9ff5"/><rect x="1489" y="313" fill="#f393ff"/><rect x="1489" y="323" fill="#e084ff"/><rect x="1489" y="333" fill="#d077ff"/><rect x="1489" y="343" fill="#c16bff"/><rect x="1489" y="353" fill="#b460ff"/><rect x="1489" y="363" fill="#a957ff"/><rect x="1489" y="373" fill="#9e4eff"/><rect x="1489" y="383" fill="#9546ff"/><rect x="1489" y="393" fill="#8d3fff"/><rect x="1489" y="403" fill="#8539ff"/><rect x="1489" y="413" fill="#7e33ff"/><rect x="1489" y="423" fill="#772dff"/><rect x="1489" y="433" fill="#7128ff"/><rect x="1489" y="443" fill="#6b23ff"/><rect x="1489" y="453" fill="#661eff"/><rect x="1489" y="463" fill="#611aff"/><rect x="1489" y="473" fill="#5d16ff"/><rect x="1489" y="483" fill="#5812ff"/><rect x="1489" y="493" fill="#540eff"/><rect x="1489" y="503" fill="#500aff"/><rect x="1489" y="513" fill="#4d06ff"/><rect x="1489" y="523" fill="#4902ff"/><rect x="1489" y="533" fill="#4600ff"/><rect x="1489" y="543" fill="#4300ff"/><rect x="1489" y="553" fill="#4000ff"/><rect x="1489" y="563" fill="#3d00ff"/><rect x="1489" y="573" fill="#3b00ff"/><rect x="1489" y="583" fill="#3800ff"/><rect x="1489" y="593" fill="#3600ff"/><rect x="1489" y="603" fill="#3300ff"/><rect x="1489" y="613" fill="#3100ff"/><rect x="1489" y="623" fill="#2f00ff"/><rect x="1489" y="633" fill="#2d00ff"/><rect x="1489" y="643" fill="#2b00ff"/><rect x="1489" y="653" fill="#2900ff"/><rect x="1489" y="663" fill="#2700ff"/><rect x="1489" y="673" fill="#2600ff"/><rect x="1489" y="683" fill="#2400ff"/><rect x="1489" y="693" fill="#2200ff"/><rect x="1489" y="703" fill="#2100ff"/><rect x="1489" y="713" fill="#1f00ff"/><rect x="1489" y="723" fill="#1d00ff"/><rect x="1489" y="733" fill="#1c00ff"/><rect x="1499" y="153" fill="#ffbb00"/><rect x="1499" y="163" fill="#ffb900"/><rect x="1499" y="173" fill="#ffb600"/><rect x="1499" y="183" fill="#ffb300"/><rect x="1499" y="193" fill="#ffb004"/><rect x="1499" y="203" fill="#ffad1b"/><rect x="1499" y="213" fill="#ffaa30"/><rect x="1499" y="223" fill="#ffa743"/><rect x="1499" y="233" fill="#ffa357"/><rect x="1499" y="243" fill="#ffa06a"/><rect x="1499" y="253" fill="#ff9d7d"/><rect x="1499" y="263" fill="#ff9990"/><rect x="1499" y="273" fill="#ff95a3"/><rect x="1499" y="283" fill="#ff92b6"/><rect x="1499" y="293" fill="#ff8eca"/><rect x="1499" y="303" fill="#ff8ade"/><rect x="1499" y="313" fill="#ff86f2"/><rect x="1499" y="323" fill="#f87eff"/><rect x="1499" y="333" fill="#e671ff"/><rect x="1499" y="343" fill="#d665ff"/><rect x="1499" y="353" fill="#c85bff"/><rect x="1499" y="363" fill="#bb52ff"/><rect x="1499" y="373" fill="#b049ff"/><rect x="1499" y="383" fill="#a642ff"/><rect x="1499" y="393" fill="#9d3bff"/><rect x="1499" y="403" fill="#9434ff"/><rect x="1499" y="413" fill="#8d2eff"/><rect x="1499" y="423" fill="#8529ff"/><rect x="1499" y="433" fill="#7f23ff"/><rect x="1499" y="443" fill="#791eff"/><rect x="1499" y="453" fill="#731aff"/><rect x="1499" y="463" fill="#6e15ff"/><rect x="1499" y="473" fill="#6911ff"/><rect x="1499" y="483" fill="#640dff"/><rect x="1499" y="493" fill="#6009ff"/><rect x="1499" y="503" fill="#5c05ff"/><rect x="1499" y="513" fill="#5801ff"/><rect x="1499" y="523" fill="#5400ff"/><rect x="1499" y="533" fill="#5100ff"/><rect x="1499" y="543" fill="#4d00ff"/><rect x="1499" y="553" fill="#4a00ff"/><rect x="1499" y="563" fill="#4700ff"/><rect x="1499" y="573" fill="#4400ff"/><rect x="1499" y="583" fill="#4100ff"/><rect x="1499" y="593" fill="#3f00ff"/><rect x="1499" y="603" fill="#3c00ff"/><rect x="1499" y="613" fill="#3a00ff"/><rect x="1499" y="623" fill="#3800ff"/><rect x="1499" y="633" fill="#3500ff"/><rect x="1499" y="643" fill="#3300ff"/><rect x="1499" y="653" fill="#3100ff"/><rect x="1499" y="663" fill="#2f00ff"/><rect x="1499" y="673" fill="#2d00ff"/><rect x="1499" y="683" fill="#2c00ff"/><rect x="1499" y="693" fill="#2a00ff"/><rect x="1499" y="703" fill="#2800ff"/><rect x="1499" y="713" fill="#2700ff"/><rect x="1499" y="723" fill="#2500ff"/><rect x="1499" y="733" fill="#2300ff"/><rect x="1499" y="743" fill="#2200ff"/><rect x="1509" y="153" fill="#ffaa00"/><rect x="1509" y="163" fill="#ffa700"/><rect x="1509" y="173" fill="#ffa400"/><rect x="1509" y="183" fill="#ffa100"/><rect x="1509" y="193" fill="#ff9e00"/><rect x="1509" y="203" fill="#ff9b17"/><rect x="1509" y="213" fill="#ff982a"/><rect x="1509" y="223" fill="#ff953c"/><rect x="1509" y="233" fill="#ff924e"/><rect x="1509" y="243" fill="#ff8e60"/><rect x="1509" y="253" fill="#ff8b72"/><rect x="1509" y="263" fill="#ff8883"/><rect x="1509" y="273" fill="#ff8495"/><rect x="1509" y="283" fill="#ff80a6"/><rect x="1509" y="293" fill="#ff7cb8"/><rect x="1509" y="303" fill="#ff78ca"/><rect x="1509" y="313" fill="#ff74dd"/><rect x="1509" y="323" fill="#ff70ef"/><rect x="1509" y="333" fill="#fc6bff"/><rect x="1509" y="343" fill="#eb5fff"/><rect x="1509" y="353" fill="#dc55ff"/><rect x="1509" y="363" fill="#ce4cff"/><rect x="1509" y="373" fill="#c244ff"/><rect x="1509" y="383" fill="#b73cff"/><rect x="1509" y="393" fill="#ad36ff"/><rect x="1509" y="403" fill="#a42fff"/><rect x="1509" y="413" fill="#9b29ff"/><rect x="1509" y="423" fill="#9424ff"/><rect x="1509" y="433" fill="#8d1fff"/><rect x="1509" y="443" fill="#861aff"/><rect x="1509" y="453" fill="#8015ff"/><rect x="1509" y="463" fill="#7a11ff"/><rect x="1509" y="473" fill="#750dff"/><rect x="1509" y="483" fill="#7009ff"/><rect x="1509" y="493" fill="#6b05ff"/><rect x="1509" y="503" fill="#6700ff"/><rect x="1509" y="513" fill="#6200ff"/><rect x="1509" y="523" fill="#5e00ff"/><rect x="1509" y="533" fill="#5b00ff"/><rect x="1509" y="543" fill="#5700ff"/><rect x="1509" y="553" fill="#5400ff"/><rect x="1509" y="563" fill="#5100ff"/><rect x="1509" y="573" fill="#4e00ff"/><rect x="1509" y="583" fill="#4b00ff"/><rect x="1509" y="593" fill="#4800ff"/><rect x="1509" y="603" fill="#4500ff"/><rect x="1509" y="613" fill="#4300ff"/><rect x="1509" y="623" fill="#4000ff"/><rect x="1509" y="633" fill="#3e00ff"/><rect x="1509" y="643" fill="#3c00ff"/><rect x="1509" y="653" fill="#3900ff"/><rect x="1509" y="663" fill="#3700ff"/><rect x="1509" y="673" fill="#3500ff"/><rect x="1509" y="683" fill="#3300ff"/><rect x="1509" y="693" fill="#3100ff"/><rect x="1509" y="703" fill="#3000ff"/><rect x="1509" y="713" fill="#2e00ff"/><rect x="1509" y="723" fill="#2c00ff"/><rect x="1509" y="733" fill="#2b00ff"/><rect x="1509" y="743" fill="#2900ff"/><rect x="1509" y="753" fill="#2700ff"/><rect x="1519" y="163" fill="#ff9700"/><rect x="1519" y="173" fill="#ff9500"/><rect x="1519" y="183" fill="#ff9200"/><rect x="1519" y="193" fill="#ff8f00"/><rect x="1519" y="203" fill="#ff8c13"/><rect x="1519" y="213" fill="#ff8925"/><rect x="1519" y="223" fill="#ff8637"/><rect x="1519" y="233" fill="#ff8347"/><rect x="1519" y="243" fill="#ff7f58"/><rect x="1519" y="253" fill="#ff7c68"/><rect x="1519" y="263" fill="#ff7878"/><rect x="1519" y="273" fill="#ff7589"/><rect x="1519" y="283" fill="#ff7199"/><rect x="1519" y="293" fill="#ff6ea9"/><rect x="1519" y="303" fill="#ff6aba"/><rect x="1519" y="313" fill="#ff66cb"/><rect x="1519" y="323" fill="#ff62dc"/><rect x="1519" y="333" fill="#ff5eed"/><rect x="1519" y="343" fill="#ff59fe"/><rect x="1519" y="353" fill="#f050ff"/><rect x="1519" y="363" fill="#e147ff"/><rect x="1519" y="373" fill="#d43fff"/><rect x="1519" y="383" fill="#c837ff"/><rect x="1519" y="393" fill="#bd31ff"/><rect x="1519" y="403" fill="#b32aff"/><rect x="1519" y="413" fill="#aa25ff"/><rect x="1519" y="423" fill="#a21fff"/><rect x="1519" y="433" fill="#9a1aff"/><rect x="1519" y="443" fill="#9315ff"/><rect x="1519" y="453" fill="#8d11ff"/><rect x="1519" y="463" fill="#860cff"/><rect x="1519" y="473" fill="#8108ff"/><rect x="1519" y="483" fill="#7b04ff"/><rect x="1519" y="493" fill="#7600ff"/><rect x="1519" y="503" fill="#7200ff"/><rect x="1519" y="513" fill="#6d00ff"/><rect x="1519" y="523" fill="#6900ff"/><rect x="1519" y="533" fill="#6500ff"/><rect x="1519" y="543" fill="#6100ff"/><rect x="1519" y="553" fill="#5d00ff"/><rect x="1519" y="563" fill="#5a00ff"/><rect x="1519" y="573" fill="#5700ff"/><rect x="1519" y="583" fill="#5400ff"/><rect x="1519" y="593" fill="#5100ff"/><rect x="1519" y="603" fill="#4e00ff"/><rect x="1519" y="613" fill="#4b00ff"/><rect x="1519" y="623" fill="#4800ff"/><rect x="1519" y="633" fill="#4600ff"/><rect x="1519" y="643" fill="#4400ff"/><rect x="1519" y="653" fill="#4100ff"/><rect x="1519" y="663" fill="#3f00ff"/><rect x="1519" y="673" fill="#3d00ff"/><rect x="1519" y="683" fill="#3b00ff"/><rect x="1519" y="693" fill="#3900ff"/><rect x="1519" y="703" fill="#3700ff"/><rect x="1519" y="713" fill="#3500ff"/><rect x="1519" y="723" fill="#3300ff"/><rect x="1519" y="733" fill="#3100ff"/><rect x="1519" y="743" fill="#3000ff"/><rect x="1519" y="753" fill="#2e00ff"/><rect x="1529" y="163" fill="#ff8a00"/><rect x="1529" y="173" fill="#ff8700"/><rect x="1529" y="183" fill="#ff8400"/><rect x="1529" y="193" fill="#ff8100"/><rect x="1529" y="203" fill="#ff7e10"/><rect x="1529" y="213" fill="#ff7b21"/><rect x="1529" y="223" fill="#ff7831"/><rect x="1529" y="233" fill="#ff7541"/><rect x="1529" y="243" fill="#ff7251"/><rect x="1529" y="253" fill="#ff6f60"/><rect x="1529" y="263" fill="#ff6b6f"/><rect x="1529" y="273" fill="#ff687e"/><rect x="1529" y="283" fill="#ff648d"/><rect x="1529" y="293" fill="#ff619d"/><rect x="1529" y="303" fill="#ff5dac"/><rect x="1529" y="313" fill="#ff59bb"/><rect x="1529" y="323" fill="#ff55cb"/><rect x="1529" y="333" fill="#ff51db"/><rect x="1529" y="343" fill="#ff4deb"/><rect x="1529" y="353" fill="#ff49fb"/><rect x="1529" y="363" fill="#f441ff"/><rect x="1529" y="373" fill="#e539ff"/><rect x="1529" y="383" fill="#d932ff"/><rect x="1529" y="393" fill="#cd2bff"/><rect x="1529" y="403" fill="#c325ff"/><rect x="1529" y="413" fill="#b920ff"/><rect x="1529" y="423" fill="#b01aff"/><rect x="1529" y="433" fill="#a815ff"/><rect x="1529" y="443" fill="#a010ff"/><rect x="1529" y="453" fill="#990cff"/><rect x="1529" y="463" fill="#9307ff"/><rect x="1529" y="473" fill="#8d03ff"/><rect x="1529" y="483" fill="#8700ff"/><rect x="1529" y="493" fill="#8100ff"/><rect x="1529" y="503" fill="#7c00ff"/><rect x="1529" y="513" fill="#7800ff"/><rect x="1529" y="523" fill="#7300ff"/><rect x="1529" y="533" fill="#6f00ff"/><rect x="1529" y="543" fill="#6b00ff"/><rect x="1529" y="553" fill="#6700ff"/><rect x="1529" y="563" fill="#6300ff"/><rect x="1529" y="573" fill="#6000ff"/><rect x="1529" y="583" fill="#5d00ff"/><rect x="1529" y="593" fill="#5900ff"/><rect x="1529" y="603" fill="#5600ff"/><rect x="1529" y="613" fill="#5300ff"/><rect x="1529" y="623" fill="#5100ff"/><rect x="1529" y="633" fill="#4e00ff"/><rect x="1529" y="643" fill="#4c00ff"/><rect x="1529" y="653" fill="#4900ff"/><rect x="1529" y="663" fill="#4700ff"/><rect x="1529" y="673" fill="#4400ff"/><rect x="1529" y="683" fill="#4200ff"/><rect x="1529" y="693" fill="#4000ff"/><rect x="1529" y="703" fill="#3e00ff"/><rect x="1529" y="713" fill="#3c00ff"/><rect x="1529" y="723" fill="#3a00ff"/><rect x="1529" y="733" fill="#3800ff"/><rect x="1529" y="743" fill="#3700ff"/><rect x="1529" y="753" fill="#3500ff"/><rect x="1539" y="163" fill="#ff7e00"/><rect x="1539" y="173" fill="#ff7b00"/><rect x="1539" y="183" fill="#ff7800"/><rect x="1539" y="193" fill="#ff7600"/><rect x="1539" y="203" fill="#ff730d"/><rect x="1539" y="213" fill="#ff701e"/><rect x="1539" y="223" fill="#ff6d2d"/><rect x="1539" y="233" fill="#ff6a3c"/><rect x="1539" y="243" fill="#ff664a"/><rect x="1539" y="253" fill="#ff6359"/><rect x="1539" y="263" fill="#ff6067"/><rect x="1539" y="273" fill="#ff5c75"/><rect x="1539" y="283" fill="#ff5983"/><rect x="1539" y="293" fill="#ff5591"/><rect x="1539" y="303" fill="#ff52a0"/><rect x="1539" y="313" fill="#ff4eae"/><rect x="1539" y="323" fill="#ff4abd"/><rect x="1539" y="333" fill="#ff46cb"/><rect x="1539" y="343" fill="#ff42da"/><rect x="1539" y="353" fill="#ff3ee9"/><rect x="1539" y="363" fill="#ff3af8"/><rect x="1539" y="373" fill="#f734ff"/><rect x="1539" y="383" fill="#ea2dff"/><rect x="1539" y="393" fill="#dd26ff"/><rect x="1539" y="403" fill="#d220ff"/><rect x="1539" y="413" fill="#c81aff"/><rect x="1539" y="423" fill="#be15ff"/><rect x="1539" y="433" fill="#b510ff"/><rect x="1539" y="443" fill="#ad0bff"/><rect x="1539" y="453" fill="#a607ff"/><rect x="1539" y="463" fill="#9f02ff"/><rect x="1539" y="473" fill="#9800ff"/><rect x="1539" y="483" fill="#9200ff"/><rect x="1539" y="493" fill="#8d00ff"/><rect x="1539" y="503" fill="#8700ff"/><rect x="1539" y="513" fill="#8200ff"/><rect x="1539" y="523" fill="#7d00ff"/><rect x="1539" y="533" fill="#7900ff"/><rect x="1539" y="543" fill="#7500ff"/><rect x="1539" y="553" fill="#7000ff"/><rect x="1539" y="563" fill="#6d00ff"/><rect x="1539" y="573" fill="#6900ff"/><rect x="1539" y="583" fill="#6500ff"/><rect x="1539" y="593" fill="#6200ff"/><rect x="1539" y="603" fill="#5f00ff"/><rect x="1539" y="613" fill="#5c00ff"/><rect x="1539" y="623" fill="#5900ff"/><rect x="1539" y="633" fill="#5600ff"/><rect x="1539" y="643" fill="#5300ff"/><rect x="1539" y="653" fill="#5100ff"/><rect x="1539" y="663" fill="#4e00ff"/><rect x="1539" y="673" fill="#4c00ff"/><rect x="1539" y="683" fill="#4a00ff"/><rect x="1539" y="693" fill="#4700ff"/><rect x="1539" y="703" fill="#4500ff"/><rect x="1539" y="713" fill="#4300ff"/><rect x="1539" y="723" fill="#4100ff"/><rect x="1539" y="733" fill="#3f00ff"/><rect x="1539" y="743" fill="#3d00ff"/><rect x="1539" y="753" fill="#3b00ff"/><rect x="1549" y="163" fill="#ff7300"/><rect x="1549" y="173" fill="#ff7000"/><rect x="1549" y="183" fill="#ff6e00"/><rect x="1549" y="193" fill="#ff6b00"/><rect x="1549" y="203" fill="#ff680b"/><rect x="1549" y="213" fill="#ff651a"/><rect x="1549" y="223" fill="#ff6229"/><rect x="1549" y="233" fill="#ff5f37"/><rect x="1549" y="243" fill="#ff5c45"/><rect x="1549" y="253" fill="#ff5952"/><rect x="1549" y="263" fill="#ff5660"/><rect x="1549" y="273" fill="#ff526d"/><rect x="1549" y="283" fill="#ff4f7a"/><rect x="1549" y="293" fill="#ff4b88"/><rect x="1549" y="303" fill="#ff4895"/><rect x="1549" y="313" fill="#ff44a3"/><rect x="1549" y="323" fill="#ff41b0"/><rect x="1549" y="333" fill="#ff3dbe"/><rect x="1549" y="343" fill="#ff39cc"/><rect x="1549" y="353" fill="#ff35d9"/><rect x="1549" y="363" fill="#ff30e7"/><rect x="1549" y="373" fill="#ff2cf5"/><rect x="1549" y="383" fill="#fa27ff"/><rect x="1549" y="393" fill="#ed20ff"/><rect x="1549" y="403" fill="#e11bff"/><rect x="1549" y="413" fill="#d615ff"/><rect x="1549" y="423" fill="#cc10ff"/><rect x="1549" y="433" fill="#c30bff"/><rect x="1549" y="443" fill="#ba06ff"/><rect x="1549" y="453" fill="#b200ff"/><rect x="1549" y="463" fill="#ab00ff"/><rect x="1549" y="473" fill="#a400ff"/><rect x="1549" y="483" fill="#9e00ff"/><rect x="1549" y="493" fill="#9800ff"/><rect x="1549" y="503" fill="#9200ff"/><rect x="1549" y="513" fill="#8d00ff"/><rect x="1549" y="523" fill="#8800ff"/><rect x="1549" y="533" fill="#8300ff"/><rect x="1549" y="543" fill="#7e00ff"/><rect x="1549" y="553" fill="#7a00ff"/><rect x="1549" y="563" fill="#7600ff"/><rect x="1549" y="573" fill="#7200ff"/><rect x="1549" y="583" fill="#6e00ff"/><rect x="1549" y="593" fill="#6b00ff"/><rect x="1549" y="603" fill="#6700ff"/><rect x="1549" y="613" fill="#6400ff"/><rect x="1549" y="623" fill="#6100ff"/><rect x="1549" y="633" fill="#5e00ff"/><rect x="1549" y="643" fill="#5b00ff"/><rect x="1549" y="653" fill="#5800ff"/><rect x="1549" y="663" fill="#5600ff"/><rect x="1549" y="673" fill="#5300ff"/><rect x="1549" y="683" fill="#5100ff"/><rect x="1549" y="693" fill="#4e00ff"/><rect x="1549" y="703" fill="#4c00ff"/><rect x="1549" y="713" fill="#4a00ff"/><rect x="1549" y="723" fill="#4800ff"/><rect x="1549" y="733" fill="#4600ff"/><rect x="1559" y="163" fill="#ff6900"/><rect x="1559" y="173" fill="#ff6700"/><rect x="1559" y="183" fill="#ff6400"/><rect x="1559" y="193" fill="#ff6100"/><rect x="1559" y="203" fill="#ff5f08"/><rect x="1559" y="213" fill="#ff5c18"/><rect x="1559" y="223" fill="#ff5925"/><rect x="1559" y="233" fill="#ff5633"/><rect x="1559" y="243" fill="#ff5340"/><rect x="1559" y="253" fill="#ff504d"/><rect x="1559" y="263" fill="#ff4d59"/><rect x="1559" y="273" fill="#ff4966"/><rect x="1559" y="283" fill="#ff4672"/><rect x="1559" y="293" fill="#ff437f"/><rect x="1559" y="303" fill="#ff3f8c"/><rect x="1559" y="313" fill="#ff3c98"/><rect x="1559" y="323" fill="#ff38a5"/><rect x="1559" y="333" fill="#ff34b2"/><rect x="1559" y="343" fill="#ff30bf"/><rect x="1559" y="353" fill="#ff2ccc"/><rect x="1559" y="363" fill="#ff28d9"/><rect x="1559" y="373" fill="#ff24e6"/><rect x="1559" y="383" fill="#ff20f3"/><rect x="1559" y="393" fill="#fd1bff"/><rect x="1559" y="403" fill="#f115ff"/><rect x="1559" y="413" fill="#e50fff"/><rect x="1559" y="423" fill="#da0aff"/><rect x="1559" y="433" fill="#d105ff"/><rect x="1559" y="443" fill="#c700ff"/><rect x="1559" y="453" fill="#bf00ff"/><rect x="1559" y="463" fill="#b700ff"/><rect x="1559" y="473" fill="#b000ff"/><rect x="1559" y="483" fill="#a900ff"/><rect x="1559" y="493" fill="#a300ff"/><rect x="1559" y="503" fill="#9d00ff"/><rect x="1559" y="513" fill="#9700ff"/><rect x="1559" y="523" fill="#9200ff"/><rect x="1559" y="533" fill="#8d00ff"/><rect x="1559" y="543" fill="#8800ff"/><rect x="1559" y="553" fill="#8300ff"/><rect x="1559" y="563" fill="#7f00ff"/><rect x="1559" y="573" fill="#7b00ff"/><rect x="1559" y="583" fill="#7700ff"/><rect x="1559" y="593" fill="#7300ff"/><rect x="1559" y="603" fill="#7000ff"/><rect x="1559" y="613" fill="#6c00ff"/><rect x="1559" y="623" fill="#6900ff"/><rect x="1559" y="633" fill="#6600ff"/><rect x="1559" y="643" fill="#6300ff"/><rect x="1559" y="653" fill="#6000ff"/><rect x="1559" y="663" fill="#5d00ff"/><rect x="1559" y="673" fill="#5b00ff"/><rect x="1559" y="683" fill="#5800ff"/><rect x="1559" y="693" fill="#5600ff"/><rect x="1559" y="703" fill="#5300ff"/><rect x="1559" y="713" fill="#5100ff"/><rect x="1559" y="723" fill="#4f00ff"/><rect x="1569" y="163" fill="#ff6100"/><rect x="1569" y="173" fill="#ff5e00"/><rect x="1569" y="183" fill="#ff5b00"/><rect x="1569" y="193" fill="#ff5900"/><rect x="1569" y="203" fill="#ff5606"/><rect x="1569" y="213" fill="#ff5315"/><rect x="1569" y="223" fill="#ff5022"/><rect x="1569" y="233" fill="#ff4d2f"/><rect x="1569" y="243" fill="#ff4b3b"/><rect x="1569" y="253" fill="#ff4747"/><rect x="1569" y="263" fill="#ff4454"/><rect x="1569" y="273" fill="#ff415f"/><rect x="1569" y="283" fill="#ff3e6b"/><rect x="1569" y="293" fill="#ff3b77"/><rect x="1569" y="303" fill="#ff3783"/><rect x="1569" y="313" fill="#ff348f"/><rect x="1569" y="323" fill="#ff309b"/><rect x="1569" y="333" fill="#ff2ca7"/><rect x="1569" y="343" fill="#ff29b3"/><rect x="1569" y="353" fill="#ff25c0"/><rect x="1569" y="363" fill="#ff21cc"/><rect x="1569" y="373" fill="#ff1dd8"/><rect x="1569" y="383" fill="#ff18e5"/><rect x="1569" y="393" fill="#ff14f1"/><rect x="1569" y="403" fill="#ff0ffe"/><rect x="1569" y="413" fill="#f409ff"/><rect x="1569" y="423" fill="#e804ff"/><rect x="1569" y="433" fill="#de00ff"/><rect x="1569" y="443" fill="#d400ff"/><rect x="1569" y="453" fill="#cc00ff"/><rect x="1569" y="463" fill="#c300ff"/><rect x="1569" y="473" fill="#bc00ff"/><rect x="1569" y="483" fill="#b400ff"/><rect x="1569" y="493" fill="#ae00ff"/><rect x="1569" y="503" fill="#a700ff"/><rect x="1569" y="513" fill="#a100ff"/><rect x="1569" y="523" fill="#9c00ff"/><rect x="1569" y="533" fill="#9600ff"/><rect x="1569" y="543" fill="#9100ff"/><rect x="1569" y="553" fill="#8d00ff"/><rect x="1569" y="563" fill="#8800ff"/><rect x="1569" y="573" fill="#8400ff"/><rect x="1569" y="583" fill="#8000ff"/><rect x="1569" y="593" fill="#7c00ff"/><rect x="1569" y="603" fill="#7800ff"/><rect x="1569" y="613" fill="#7400ff"/><rect x="1569" y="623" fill="#7100ff"/><rect x="1569" y="633" fill="#6e00ff"/><rect x="1569" y="643" fill="#6b00ff"/><rect x="1569" y="653" fill="#6800ff"/><rect x="1569" y="663" fill="#6500ff"/><rect x="1569" y="673" fill="#6200ff"/><rect x="1569" y="683" fill="#5f00ff"/><rect x="1569" y="693" fill="#5d00ff"/><rect x="1569" y="703" fill="#5a00ff"/><rect x="1569" y="713" fill="#5800ff"/><rect x="1579" y="163" fill="#ff5900"/><rect x="1579" y="173" fill="#ff5600"/><rect x="1579" y="183" fill="#ff5400"/><rect x="1579" y="193" fill="#ff5100"/><rect x="1579" y="203" fill="#ff4e04"/><rect x="1579" y="213" fill="#ff4c12"/><rect x="1579" y="223" fill="#ff491f"/><rect x="1579" y="233" fill="#ff462b"/><rect x="1579" y="243" fill="#ff4337"/><rect x="1579" y="253" fill="#ff4043"/><rect x="1579" y="263" fill="#ff3d4e"/><rect x="1579" y="273" fill="#ff3a5a"/><rect x="1579" y="283" fill="#ff3765"/><rect x="1579" y="293" fill="#ff3370"/><rect x="1579" y="303" fill="#ff307c"/><rect x="1579" y="313" fill="#ff2d87"/><rect x="1579" y="323" fill="#ff2992"/><rect x="1579" y="333" fill="#ff259e"/><rect x="1579" y="343" fill="#ff22a9"/><rect x="1579" y="353" fill="#ff1eb5"/><rect x="1579" y="363" fill="#ff1ac0"/><rect x="1579" y="373" fill="#ff16cc"/><rect x="1579" y="383" fill="#ff11d8"/><rect x="1579" y="393" fill="#ff0de4"/><rect x="1579" y="403" fill="#ff08f0"/><rect x="1579" y="413" fill="#ff02fc"/><rect x="1579" y="423" fill="#f700ff"/><rect x="1579" y="433" fill="#ec00ff"/><rect x="1579" y="443" fill="#e200ff"/><rect x="1579" y="453" fill="#d800ff"/><rect x="1579" y="463" fill="#cf00ff"/><rect x="1579" y="473" fill="#c700ff"/><rect x="1579" y="483" fill="#c000ff"/><rect x="1579" y="493" fill="#b900ff"/><rect x="1579" y="503" fill="#b200ff"/><rect x="1579" y="513" fill="#ac00ff"/><rect x="1579" y="523" fill="#a600ff"/><rect x="1579" y="533" fill="#a000ff"/><rect x="1579" y="543" fill="#9b00ff"/><rect x="1579" y="553" fill="#9600ff"/><rect x="1579" y="563" fill="#9100ff"/><rect x="1579" y="573" fill="#8d00ff"/><rect x="1579" y="583" fill="#8800ff"/><rect x="1579" y="593" fill="#8400ff"/><rect x="1579" y="603" fill="#8000ff"/><rect x="1579" y="613" fill="#7c00ff"/><rect x="1579" y="623" fill="#7900ff"/><rect x="1579" y="633" fill="#7500ff"/><rect x="1579" y="643" fill="#7200ff"/><rect x="1579" y="653" fill="#6f00ff"/><rect x="1579" y="663" fill="#6c00ff"/><rect x="1579" y="673" fill="#6900ff"/><rect x="1579" y="683" fill="#6600ff"/><rect x="1579" y="693" fill="#6400ff"/><rect x="1579" y="703" fill="#6100ff"/><rect x="1589" y="173" fill="#ff4f00"/><rect x="1589" y="183" fill="#ff4c00"/><rect x="1589" y="193" fill="#ff4a00"/><rect x="1589" y="203" fill="#ff4702"/><rect x="1589" y="213" fill="#ff4410"/><rect x="1589" y="223" fill="#ff421d"/><rect x="1589" y="233" fill="#ff3f28"/><rect x="1589" y="243" fill="#ff3c34"/><rect x="1589" y="253" fill="#ff393f"/><rect x="1589" y="263" fill="#ff364a"/><rect x="1589" y="273" fill="#ff3355"/><rect x="1589" y="283" fill="#ff305f"/><rect x="1589" y="293" fill="#ff2d6a"/><rect x="1589" y="303" fill="#ff2975"/><rect x="1589" y="313" fill="#ff2680"/><rect x="1589" y="323" fill="#ff238b"/><rect x="1589" y="333" fill="#ff1f95"/><rect x="1589" y="343" fill="#ff1ba0"/><rect x="1589" y="353" fill="#ff18ab"/><rect x="1589" y="363" fill="#ff14b6"/><rect x="1589" y="373" fill="#ff0fc1"/><rect x="1589" y="383" fill="#ff0bcc"/><rect x="1589" y="393" fill="#ff06d7"/><rect x="1589" y="403" fill="#ff01e3"/><rect x="1589" y="413" fill="#ff00ee"/><rect x="1589" y="423" fill="#ff00f9"/><rect x="1589" y="433" fill="#f900ff"/><rect x="1589" y="443" fill="#ef00ff"/><rect x="1589" y="453" fill="#e500ff"/><rect x="1589" y="463" fill="#dc00ff"/><rect x="1589" y="473" fill="#d300ff"/><rect x="1589" y="483" fill="#cb00ff"/><rect x="1589" y="493" fill="#c400ff"/><rect x="1589" y="503" fill="#bd00ff"/><rect x="1589" y="513" fill="#b600ff"/><rect x="1589" y="523" fill="#b000ff"/><rect x="1589" y="533" fill="#aa00ff"/><rect x="1589" y="543" fill="#a400ff"/><rect x="1589" y="553" fill="#9f00ff"/><rect x="1589" y="563" fill="#9a00ff"/><rect x="1589" y="573" fill="#9500ff"/><rect x="1589" y="583" fill="#9100ff"/><rect x="1589" y="593" fill="#8d00ff"/><rect x="1589" y="603" fill="#8800ff"/><rect x="1589" y="613" fill="#8500ff"/><rect x="1589" y="623" fill="#8100ff"/><rect x="1589" y="633" fill="#7d00ff"/><rect x="1589" y="643" fill="#7a00ff"/><rect x="1589" y="653" fill="#7600ff"/><rect x="1589" y="663" fill="#7300ff"/><rect x="1589" y="673" fill="#7000ff"/><rect x="1589" y="683" fill="#6d00ff"/><rect x="1599" y="173" fill="#ff4800"/><rect x="1599" y="183" fill="#ff4600"/><rect x="1599" y="193" fill="#ff4300"/><rect x="1599" y="203" fill="#ff4100"/><rect x="1599" y="213" fill="#ff3e0e"/><rect x="1599" y="223" fill="#ff3b1a"/><rect x="1599" y="233" fill="#ff3825"/><rect x="1599" y="243" fill="#ff3630"/><rect x="1599" y="253" fill="#ff333b"/><rect x="1599" y="263" fill="#ff3045"/><rect x="1599" y="273" fill="#ff2d50"/><rect x="1599" y="283" fill="#ff2a5a"/><rect x="1599" y="293" fill="#ff2764"/><rect x="1599" y="303" fill="#ff236f"/><rect x="1599" y="313" fill="#ff2079"/><rect x="1599" y="323" fill="#ff1d83"/><rect x="1599" y="333" fill="#ff198e"/><rect x="1599" y="343" fill="#ff1598"/><rect x="1599" y="353" fill="#ff12a2"/><rect x="1599" y="363" fill="#ff0ead"/><rect x="1599" y="373" fill="#ff09b7"/><rect x="1599" y="383" fill="#ff05c2"/><rect x="1599" y="393" fill="#ff00cc"/><rect x="1599" y="403" fill="#ff00d7"/><rect x="1599" y="413" fill="#ff00e2"/><rect x="1599" y="423" fill="#ff00ed"/><rect x="1599" y="433" fill="#ff00f7"/><rect x="1599" y="443" fill="#fc00ff"/><rect x="1599" y="453" fill="#f100ff"/><rect x="1599" y="463" fill="#e800ff"/><rect x="1599" y="473" fill="#df00ff"/><rect x="1599" y="483" fill="#d600ff"/><rect x="1599" y="493" fill="#cf00ff"/><rect x="1599" y="503" fill="#c700ff"/><rect x="1599" y="513" fill="#c000ff"/><rect x="1599" y="523" fill="#ba00ff"/><rect x="1599" y="533" fill="#b400ff"/><rect x="1599" y="543" fill="#ae00ff"/><rect x="1599" y="553" fill="#a800ff"/><rect x="1599" y="563" fill="#a300ff"/><rect x="1599" y="573" fill="#9e00ff"/><rect x="1599" y="583" fill="#9900ff"/><rect x="1599" y="593" fill="#9500ff"/><rect x="1599" y="603" fill="#9100ff"/><rect x="1599" y="613" fill="#8d00ff"/><rect x="1599" y="623" fill="#8900ff"/><rect x="1599" y="633" fill="#8500ff"/><rect x="1599" y="643" fill="#8100ff"/><rect x="1599" y="653" fill="#7e00ff"/><rect x="1599" y="663" fill="#7b00ff"/><rect x="1599" y="673" fill="#7700ff"/><rect x="1609" y="173" fill="#ff4200"/><rect x="1609" y="183" fill="#ff4000"/><rect x="1609" y="193" fill="#ff3d00"/><rect x="1609" y="203" fill="#ff3a00"/><rect x="1609" y="213" fill="#ff380c"/><rect x="1609" y="223" fill="#ff3518"/><rect x="1609" y="233" fill="#ff3323"/><rect x="1609" y="243" fill="#ff302d"/><rect x="1609" y="253" fill="#ff2d37"/><rect x="1609" y="263" fill="#ff2a42"/><rect x="1609" y="273" fill="#ff274c"/><rect x="1609" y="283" fill="#ff2455"/><rect x="1609" y="293" fill="#ff215f"/><rect x="1609" y="303" fill="#ff1e69"/><rect x="1609" y="313" fill="#ff1a73"/><rect x="1609" y="323" fill="#ff177d"/><rect x="1609" y="333" fill="#ff1487"/><rect x="1609" y="343" fill="#ff1091"/><rect x="1609" y="353" fill="#ff0c9a"/><rect x="1609" y="363" fill="#ff08a4"/><rect x="1609" y="373" fill="#ff03ae"/><rect x="1609" y="383" fill="#ff00b8"/><rect x="1609" y="393" fill="#ff00c2"/><rect x="1609" y="403" fill="#ff00cc"/><rect x="1609" y="413" fill="#ff00d7"/><rect x="1609" y="423" fill="#ff00e1"/><rect x="1609" y="433" fill="#ff00eb"/><rect x="1609" y="443" fill="#ff00f6"/><rect x="1609" y="453" fill="#fe00ff"/><rect x="1609" y="463" fill="#f400ff"/><rect x="1609" y="473" fill="#ea00ff"/><rect x="1609" y="483" fill="#e200ff"/><rect x="1609" y="493" fill="#da00ff"/><rect x="1609" y="503" fill="#d200ff"/><rect x="1609" y="513" fill="#cb00ff"/><rect x="1609" y="523" fill="#c400ff"/><rect x="1609" y="533" fill="#bd00ff"/><rect x="1609" y="543" fill="#b700ff"/><rect x="1609" y="553" fill="#b200ff"/><rect x="1609" y="563" fill="#ac00ff"/><rect x="1609" y="573" fill="#a700ff"/><rect x="1609" y="583" fill="#a200ff"/><rect x="1609" y="593" fill="#9d00ff"/><rect x="1609" y="603" fill="#9900ff"/><rect x="1609" y="613" fill="#9500ff"/><rect x="1609" y="623" fill="#9100ff"/><rect x="1609" y="633" fill="#8d00ff"/><rect x="1609" y="643" fill="#8900ff"/><rect x="1609" y="653" fill="#8500ff"/><rect x="1609" y="663" fill="#8200ff"/><rect x="1619" y="173" fill="#ff3c00"/><rect x="1619" y="183" fill="#ff3a00"/><rect x="1619" y="193" fill="#ff3700"/><rect x="1619" y="203" fill="#ff3500"/><rect x="1619" y="213" fill="#ff320a"/><rect x="1619" y="223" fill="#ff3016"/><rect x="1619" y="233" fill="#ff2d20"/><rect x="1619" y="243" fill="#ff2a2a"/><rect x="1619" y="253" fill="#ff2834"/><rect x="1619" y="263" fill="#ff253e"/><rect x="1619" y="273" fill="#ff2248"/><rect x="1619" y="283" fill="#ff1f51"/><rect x="1619" y="293" fill="#ff1c5b"/><rect x="1619" y="303" fill="#ff1964"/><rect x="1619" y="313" fill="#ff156d"/><rect x="1619" y="323" fill="#ff1277"/><rect x="1619" y="333" fill="#ff0e80"/><rect x="1619" y="343" fill="#ff0b8a"/><rect x="1619" y="353" fill="#ff0793"/><rect x="1619" y="363" fill="#ff029d"/><rect x="1619" y="373" fill="#ff00a6"/><rect x="1619" y="383" fill="#ff00b0"/><rect x="1619" y="393" fill="#ff00b9"/><rect x="1619" y="403" fill="#ff00c3"/><rect x="1619" y="413" fill="#ff00cd"/><rect x="1619" y="423" fill="#ff00d6"/><rect x="1619" y="433" fill="#ff00e0"/><rect x="1619" y="443" fill="#ff00ea"/><rect x="1619" y="453" fill="#ff00f4"/><rect x="1619" y="463" fill="#ff00fe"/><rect x="1619" y="473" fill="#f600ff"/><rect x="1619" y="483" fill="#ed00ff"/><rect x="1619" y="493" fill="#e500ff"/><rect x="1619" y="503" fill="#dd00ff"/><rect x="1619" y="513" fill="#d500ff"/><rect x="1619" y="523" fill="#ce00ff"/><rect x="1619" y="533" fill="#c700ff"/><rect x="1619" y="543" fill="#c100ff"/><rect x="1619" y="553" fill="#bb00ff"/><rect x="1619" y="563" fill="#b500ff"/><rect x="1619" y="573" fill="#b000ff"/><rect x="1619" y="583" fill="#ab00ff"/><rect x="1619" y="593" fill="#a600ff"/><rect x="1619" y="603" fill="#a100ff"/><rect x="1619" y="613" fill="#9d00ff"/><rect x="1619" y="623" fill="#9800ff"/><rect x="1619" y="633" fill="#9400ff"/><rect x="1619" y="643" fill="#9000ff"/><rect x="1619" y="653" fill="#8d00ff"/><rect x="1629" y="173" fill="#ff3700"/><rect x="1629" y="183" fill="#ff3500"/><rect x="1629" y="193" fill="#ff3200"/><rect x="1629" y="203" fill="#ff3000"/><rect x="1629" y="213" fill="#ff2d09"/><rect x="1629" y="223" fill="#ff2b14"/><rect x="1629" y="233" fill="#ff281e"/><rect x="1629" y="243" fill="#ff2528"/><rect x="1629" y="253" fill="#ff2231"/><rect x="1629" y="263" fill="#ff203b"/><rect x="1629" y="273" fill="#ff1d44"/><rect x="1629" y="283" fill="#ff1a4d"/><rect x="1629" y="293" fill="#ff1756"/><rect x="1629" y="303" fill="#ff145f"/><rect x="1629" y="313" fill="#ff1068"/><rect x="1629" y="323" fill="#ff0d71"/><rect x="1629" y="333" fill="#ff097a"/><rect x="1629" y="343" fill="#ff0583"/><rect x="1629" y="353" fill="#ff018c"/><rect x="1629" y="363" fill="#ff0096"/><rect x="1629" y="373" fill="#ff009f"/><rect x="1629" y="383" fill="#ff00a8"/><rect x="1629" y="393" fill="#ff00b1"/><rect x="1629" y="403" fill="#ff00ba"/><rect x="1629" y="413" fill="#ff00c3"/><rect x="1629" y="423" fill="#ff00cd"/><rect x="1629" y="433" fill="#ff00d6"/><rect x="1629" y="443" fill="#ff00df"/><rect x="1629" y="453" fill="#ff00e9"/><rect x="1629" y="463" fill="#ff00f2"/><rect x="1629" y="473" fill="#ff00fc"/><rect x="1629" y="483" fill="#f800ff"/><rect x="1629" y="493" fill="#ef00ff"/><rect x="1629" y="503" fill="#e700ff"/><rect x="1629" y="513" fill="#df00ff"/><rect x="1629" y="523" fill="#d800ff"/><rect x="1629" y="533" fill="#d100ff"/><rect x="1629" y="543" fill="#ca00ff"/><rect x="1629" y="553" fill="#c400ff"/><rect x="1629" y="563" fill="#be00ff"/><rect x="1629" y="573" fill="#b900ff"/><rect x="1629" y="583" fill="#b300ff"/><rect x="1629" y="593" fill="#ae00ff"/><rect x="1629" y="603" fill="#a900ff"/><rect x="1629" y="613" fill="#a500ff"/><rect x="1629" y="623" fill="#a000ff"/><rect x="1629" y="633" fill="#9c00ff"/><rect x="1639" y="173" fill="#ff3200"/><rect x="1639" y="183" fill="#ff3000"/><rect x="1639" y="193" fill="#ff2d00"/><rect x="1639" y="203" fill="#ff2b00"/><rect x="1639" y="213" fill="#ff2807"/><rect x="1639" y="223" fill="#ff2612"/><rect x="1639" y="233" fill="#ff231c"/><rect x="1639" y="243" fill="#ff2025"/><rect x="1639" y="253" fill="#ff1e2f"/><rect x="1639" y="263" fill="#ff1b38"/><rect x="1639" y="273" fill="#ff1840"/><rect x="1639" y="283" fill="#ff1549"/><rect x="1639" y="293" fill="#ff1252"/><rect x="1639" y="303" fill="#ff0f5b"/><rect x="1639" y="313" fill="#ff0c64"/><rect x="1639" y="323" fill="#ff086c"/><rect x="1639" y="333" fill="#ff0475"/><rect x="1639" y="343" fill="#ff007e"/><rect x="1639" y="353" fill="#ff0086"/><rect x="1639" y="363" fill="#ff008f"/><rect x="1639" y="373" fill="#ff0098"/><rect x="1639" y="383" fill="#ff00a0"/><rect x="1639" y="393" fill="#ff00a9"/><rect x="1639" y="403" fill="#ff00b2"/><rect x="1639" y="413" fill="#ff00bb"/><rect x="1639" y="423" fill="#ff00c4"/><rect x="1639" y="433" fill="#ff00cd"/><rect x="1639" y="443" fill="#ff00d6"/><rect x="1639" y="453" fill="#ff00df"/><rect x="1639" y="463" fill="#ff00e8"/><rect x="1639" y="473" fill="#ff00f1"/><rect x="1639" y="483" fill="#ff00fa"/><rect x="1639" y="493" fill="#fa00ff"/><rect x="1639" y="503" fill="#f200ff"/><rect x="1639" y="513" fill="#ea00ff"/><rect x="1639" y="523" fill="#e200ff"/><rect x="1639" y="533" fill="#db00ff"/><rect x="1639" y="543" fill="#d400ff"/><rect x="1639" y="553" fill="#cd00ff"/><rect x="1639" y="563" fill="#c700ff"/><rect x="1639" y="573" fill="#c100ff"/><rect x="1639" y="583" fill="#bc00ff"/><rect x="1639" y="593" fill="#b600ff"/><rect x="1639" y="603" fill="#b100ff"/><rect x="1639" y="613" fill="#ad00ff"/><rect x="1639" y="623" fill="#a800ff"/><rect x="1649" y="173" fill="#ff2d00"/><rect x="1649" y="183" fill="#ff2b00"/><rect x="1649" y="193" fill="#ff2900"/><rect x="1649" y="203" fill="#ff2600"/><rect x="1649" y="213" fill="#ff2406"/><rect x="1649" y="223" fill="#ff2110"/><rect x="1649" y="233" fill="#ff1f1a"/><rect x="1649" y="243" fill="#ff1c23"/><rect x="1649" y="253" fill="#ff192c"/><rect x="1649" y="263" fill="#ff1635"/><rect x="1649" y="273" fill="#ff143d"/><rect x="1649" y="283" fill="#ff1146"/><rect x="1649" y="293" fill="#ff0e4e"/><rect x="1649" y="303" fill="#ff0a57"/><rect x="1649" y="313" fill="#ff075f"/><rect x="1649" y="323" fill="#ff0368"/><rect x="1649" y="333" fill="#ff0070"/><rect x="1649" y="343" fill="#ff0078"/><rect x="1649" y="353" fill="#ff0081"/><rect x="1649" y="363" fill="#ff0089"/><rect x="1649" y="373" fill="#ff0091"/><rect x="1649" y="383" fill="#ff009a"/><rect x="1649" y="393" fill="#ff00a2"/><rect x="1649" y="403" fill="#ff00ab"/><rect x="1649" y="413" fill="#ff00b3"/><rect x="1649" y="423" fill="#ff00bc"/><rect x="1649" y="433" fill="#ff00c4"/><rect x="1649" y="443" fill="#ff00cd"/><rect x="1649" y="453" fill="#ff00d6"/><rect x="1649" y="463" fill="#ff00de"/><rect x="1649" y="473" fill="#ff00e7"/><rect x="1649" y="483" fill="#ff00f0"/><rect x="1649" y="493" fill="#ff00f9"/><rect x="1649" y="503" fill="#fc00ff"/><rect x="1649" y="513" fill="#f400ff"/><rect x="1649" y="523" fill="#ec00ff"/><rect x="1649" y="533" fill="#e400ff"/><rect x="1649" y="543" fill="#dd00ff"/><rect x="1649" y="553" fill="#d600ff"/><rect x="1649" y="563" fill="#d000ff"/><rect x="1649" y="573" fill="#ca00ff"/><rect x="1649" y="583" fill="#c400ff"/><rect x="1649" y="593" fill="#bf00ff"/><rect x="1649" y="603" fill="#b900ff"/><rect x="1649" y="613" fill="#b400ff"/><rect x="1659" y="183" fill="#ff2600"/><rect x="1659" y="193" fill="#ff2400"/><rect x="1659" y="203" fill="#ff2200"/><rect x="1659" y="213" fill="#ff1f04"/><rect x="1659" y="223" fill="#ff1d0f"/><rect x="1659" y="233" fill="#ff1a18"/><rect x="1659" y="243" fill="#ff1821"/><rect x="1659" y="253" fill="#ff152a"/><rect x="1659" y="263" fill="#ff1232"/><rect x="1659" y="273" fill="#ff0f3a"/><rect x="1659" y="283" fill="#ff0c43"/><rect x="1659" y="293" fill="#ff094b"/><rect x="1659" y="303" fill="#ff0653"/><rect x="1659" y="313" fill="#ff025b"/><rect x="1659" y="323" fill="#ff0063"/><rect x="1659" y="333" fill="#ff006b"/><rect x="1659" y="343" fill="#ff0073"/><rect x="1659" y="353" fill="#ff007b"/><rect x="1659" y="363" fill="#ff0083"/><rect x="1659" y="373" fill="#ff008b"/><rect x="1659" y="383" fill="#ff0094"/><rect x="1659" y="393" fill="#ff009c"/><rect x="1659" y="403" fill="#ff00a4"/><rect x="1659" y="413" fill="#ff00ac"/><rect x="1659" y="423" fill="#ff00b4"/><rect x="1659" y="433" fill="#ff00bc"/><rect x="1659" y="443" fill="#ff00c5"/><rect x="1659" y="453" fill="#ff00cd"/><rect x="1659" y="463" fill="#ff00d5"/><rect x="1659" y="473" fill="#ff00de"/><rect x="1659" y="483" fill="#ff00e6"/><rect x="1659" y="493" fill="#ff00ef"/><rect x="1659" y="503" fill="#ff00f7"/><rect x="1659" y="513" fill="#fe00ff"/><rect x="1659" y="523" fill="#f600ff"/><rect x="1659" y="533" fill="#ee00ff"/><rect x="1659" y="543" fill="#e700ff"/><rect x="1659" y="553" fill="#e000ff"/><rect x="1659" y="563" fill="#d900ff"/><rect x="1659" y="573" fill="#d300ff"/><rect x="1659" y="583" fill="#cd00ff"/><rect x="1659" y="593" fill="#c700ff"/><rect x="1659" y="603" fill="#c200ff"/><rect x="1669" y="183" fill="#ff2200"/><rect x="1669" y="193" fill="#ff2000"/><rect x="1669" y="203" fill="#ff1e00"/><rect x="1669" y="213" fill="#ff1b03"/><rect x="1669" y="223" fill="#ff190d"/><rect x="1669" y="233" fill="#ff1616"/><rect x="1669" y="243" fill="#ff141f"/><rect x="1669" y="253" fill="#ff1127"/><rect x="1669" y="263" fill="#ff0e30"/><rect x="1669" y="273" fill="#ff0b38"/><rect x="1669" y="283" fill="#ff0840"/><rect x="1669" y="293" fill="#ff0548"/><rect x="1669" y="303" fill="#ff014f"/><rect x="1669" y="313" fill="#ff0057"/><rect x="1669" y="323" fill="#ff005f"/><rect x="1669" y="333" fill="#ff0067"/><rect x="1669" y="343" fill="#ff006f"/><rect x="1669" y="353" fill="#ff0076"/><rect x="1669" y="363" fill="#ff007e"/><rect x="1669" y="373" fill="#ff0086"/><rect x="1669" y="383" fill="#ff008e"/><rect x="1669" y="393" fill="#ff0096"/><rect x="1669" y="403" fill="#ff009d"/><rect x="1669" y="413" fill="#ff00a5"/><rect x="1669" y="423" fill="#ff00ad"/><rect x="1669" y="433" fill="#ff00b5"/><rect x="1669" y="443" fill="#ff00bd"/><rect x="1669" y="453" fill="#ff00c5"/><rect x="1669" y="463" fill="#ff00cd"/><rect x="1669" y="473" fill="#ff00d5"/><rect x="1669" y="483" fill="#ff00dd"/><rect x="1669" y="493" fill="#ff00e5"/><rect x="1669" y="503" fill="#ff00ee"/><rect x="1669" y="513" fill="#ff00f6"/><rect x="1669" y="523" fill="#ff00fe"/><rect x="1669" y="533" fill="#f800ff"/><rect x="1669" y="543" fill="#f000ff"/><rect x="1669" y="553" fill="#e900ff"/><rect x="1669" y="563" fill="#e200ff"/><rect x="1669" y="573" fill="#db00ff"/><rect x="1669" y="583" fill="#d500ff"/><rect x="1679" y="183" fill="#ff1e00"/><rect x="1679" y="193" fill="#ff1c00"/><rect x="1679" y="203" fill="#ff1a00"/><rect x="1679" y="213" fill="#ff1701"/><rect x="1679" y="223" fill="#ff150c"/><rect x="1679" y="233" fill="#ff1215"/><rect x="1679" y="243" fill="#ff101d"/><rect x="1679" y="253" fill="#ff0d25"/><rect x="1679" y="263" fill="#ff0a2d"/><rect x="1679" y="273" fill="#ff0735"/><rect x="1679" y="283" fill="#ff043d"/><rect x="1679" y="293" fill="#ff0045"/><rect x="1679" y="303" fill="#ff004c"/><rect x="1679" y="313" fill="#ff0054"/><rect x="1679" y="323" fill="#ff005b"/><rect x="1679" y="333" fill="#ff0063"/><rect x="1679" y="343" fill="#ff006a"/><rect x="1679" y="353" fill="#ff0072"/><rect x="1679" y="363" fill="#ff0079"/><rect x="1679" y="373" fill="#ff0081"/><rect x="1679" y="383" fill="#ff0088"/><rect x="1679" y="393" fill="#ff0090"/><rect x="1679" y="403" fill="#ff0098"/><rect x="1679" y="413" fill="#ff009f"/><rect x="1679" y="423" fill="#ff00a7"/><rect x="1679" y="433" fill="#ff00ae"/><rect x="1679" y="443" fill="#ff00b6"/><rect x="1679" y="453" fill="#ff00be"/><rect x="1679" y="463" fill="#ff00c5"/><rect x="1679" y="473" fill="#ff00cd"/><rect x="1679" y="483" fill="#ff00d5"/><rect x="1679" y="493" fill="#ff00dd"/><rect x="1679" y="503" fill="#ff00e5"/><rect x="1679" y="513" fill="#ff00ec"/><rect x="1679" y="523" fill="#ff00f4"/><rect x="1679" y="533" fill="#ff00fc"/><rect x="1679" y="543" fill="#fa00ff"/><rect x="1679" y="553" fill="#f200ff"/><rect x="1679" y="563" fill="#eb00ff"/><rect x="1679" y="573" fill="#e400ff"/><rect x="1689" y="183" fill="#ff1b00"/><rect x="1689" y="193" fill="#ff1800"/><rect x="1689" y="203" fill="#ff1600"/><rect x="1689" y="213" fill="#ff1400"/><rect x="1689" y="223" fill="#ff110a"/><rect x="1689" y="233" fill="#ff0f13"/><rect x="1689" y="243" fill="#ff0c1b"/><rect x="1689" y="253" fill="#ff0923"/><rect x="1689" y="263" fill="#ff062b"/><rect x="1689" y="273" fill="#ff0333"/><rect x="1689" y="283" fill="#ff003a"/><rect x="1689" y="293" fill="#ff0042"/><rect x="1689" y="303" fill="#ff0049"/><rect x="1689" y="313" fill="#ff0050"/><rect x="1689" y="323" fill="#ff0058"/><rect x="1689" y="333" fill="#ff005f"/><rect x="1689" y="343" fill="#ff0066"/><rect x="1689" y="353" fill="#ff006e"/><rect x="1689" y="363" fill="#ff0075"/><rect x="1689" y="373" fill="#ff007c"/><rect x="1689" y="383" fill="#ff0083"/><rect x="1689" y="393" fill="#ff008b"/><rect x="1689" y="403" fill="#ff0092"/><rect x="1689" y="413" fill="#ff0099"/><rect x="1689" y="423" fill="#ff00a1"/><rect x="1689" y="433" fill="#ff00a8"/><rect x="1689" y="443" fill="#ff00af"/><rect x="1689" y="453" fill="#ff00b7"/><rect x="1689" y="463" fill="#ff00be"/><rect x="1689" y="473" fill="#ff00c6"/><rect x="1689" y="483" fill="#ff00cd"/><rect x="1689" y="493" fill="#ff00d5"/><rect x="1689" y="503" fill="#ff00dc"/><rect x="1689" y="513" fill="#ff00e4"/><rect x="1689" y="523" fill="#ff00ec"/><rect x="1689" y="533" fill="#ff00f3"/><rect x="1689" y="543" fill="#ff00fb"/><rect x="1689" y="553" fill="#fb00ff"/><rect x="1689" y="563" fill="#f400ff"/><rect x="1699" y="183" fill="#ff1700"/><rect x="1699" y="193" fill="#ff1500"/><rect x="1699" y="203" fill="#ff1200"/><rect x="1699" y="213" fill="#ff1000"/><rect x="1699" y="223" fill="#ff0d09"/><rect x="1699" y="233" fill="#ff0b12"/><rect x="1699" y="243" fill="#ff081a"/><rect x="1699" y="253" fill="#ff0521"/><rect x="1699" y="263" fill="#ff0229"/><rect x="1699" y="273" fill="#ff0030"/><rect x="1699" y="283" fill="#ff0038"/><rect x="1699" y="293" fill="#ff003f"/><rect x="1699" y="303" fill="#ff0046"/><rect x="1699" y="313" fill="#ff004d"/><rect x="1699" y="323" fill="#ff0054"/><rect x="1699" y="333" fill="#ff005c"/><rect x="1699" y="343" fill="#ff0063"/><rect x="1699" y="353" fill="#ff006a"/><rect x="1699" y="363" fill="#ff0071"/><rect x="1699" y="373" fill="#ff0078"/><rect x="1699" y="383" fill="#ff007f"/><rect x="1699" y="393" fill="#ff0086"/><rect x="1699" y="403" fill="#ff008d"/><rect x="1699" y="413" fill="#ff0094"/><rect x="1699" y="423" fill="#ff009b"/><rect x="1699" y="433" fill="#ff00a2"/><rect x="1699" y="443" fill="#ff00a9"/><rect x="1699" y="453" fill="#ff00b0"/><rect x="1699" y="463" fill="#ff00b8"/><rect x="1699" y="473" fill="#ff00bf"/><rect x="1699" y="483" fill="#ff00c6"/><rect x="1699" y="493" fill="#ff00cd"/><rect x="1699" y="503" fill="#ff00d5"/><rect x="1699" y="513" fill="#ff00dc"/><rect x="1699" y="523" fill="#ff00e3"/><rect x="1699" y="533" fill="#ff00eb"/><rect x="1699" y="543" fill="#ff00f2"/><rect x="1699" y="553" fill="#ff00fa"/><rect x="1709" y="183" fill="#ff1400"/><rect x="1709" y="193" fill="#ff1100"/><rect x="1709" y="203" fill="#ff0f00"/><rect x="1709" y="213" fill="#ff0c00"/><rect x="1709" y="223" fill="#ff0a08"/><rect x="1709" y="233" fill="#ff0710"/><rect x="1709" y="243" fill="#ff0418"/><rect x="1709" y="253" fill="#ff0120"/><rect x="1709" y="263" fill="#ff0027"/><rect x="1709" y="273" fill="#ff002e"/><rect x="1709" y="283" fill="#ff0035"/><rect x="1709" y="293" fill="#ff003c"/><rect x="1709" y="303" fill="#ff0043"/><rect x="1709" y="313" fill="#ff004a"/><rect x="1709" y="323" fill="#ff0051"/><rect x="1709" y="333" fill="#ff0058"/><rect x="1709" y="343" fill="#ff005f"/><rect x="1709" y="353" fill="#ff0066"/><rect x="1709" y="363" fill="#ff006d"/><rect x="1709" y="373" fill="#ff0074"/><rect x="1709" y="383" fill="#ff007a"/><rect x="1709" y="393" fill="#ff0081"/><rect x="1709" y="403" fill="#ff0088"/><rect x="1709" y="413" fill="#ff008f"/><rect x="1709" y="423" fill="#ff0096"/><rect x="1709" y="433" fill="#ff009d"/><rect x="1709" y="443" fill="#ff00a3"/><rect x="1709" y="453" fill="#ff00aa"/><rect x="1709" y="463" fill="#ff00b1"/><rect x="1709" y="473" fill="#ff00b8"/><rect x="1709" y="483" fill="#ff00bf"/><rect x="1709" y="493" fill="#ff00c6"/><rect x="1709" y="503" fill="#ff00cd"/><rect x="1709" y="513" fill="#ff00d4"/><rect x="1709" y="523" fill="#ff00db"/><rect x="1709" y="533" fill="#ff00e3"/><rect x="1719" y="183" fill="#ff1000"/><rect x="1719" y="193" fill="#ff0e00"/><rect x="1719" y="203" fill="#ff0b00"/><rect x="1719" y="213" fill="#ff0900"/><rect x="1719" y="223" fill="#ff0607"/><rect x="1719" y="233" fill="#ff040f"/><rect x="1719" y="243" fill="#ff0017"/><rect x="1719" y="253" fill="#ff001e"/><rect x="1719" y="263" fill="#ff0025"/><rect x="1719" y="273" fill="#ff002c"/><rect x="1719" y="283" fill="#ff0033"/><rect x="1719" y="293" fill="#ff003a"/><rect x="1719" y="303" fill="#ff0041"/><rect x="1719" y="313" fill="#ff0048"/><rect x="1719" y="323" fill="#ff004e"/><rect x="1719" y="333" fill="#ff0055"/><rect x="1719" y="343" fill="#ff005c"/><rect x="1719" y="353" fill="#ff0062"/><rect x="1719" y="363" fill="#ff0069"/><rect x="1719" y="373" fill="#ff0070"/><rect x="1719" y="383" fill="#ff0076"/><rect x="1719" y="393" fill="#ff007d"/><rect x="1719" y="403" fill="#ff0083"/><rect x="1719" y="413" fill="#ff008a"/><rect x="1719" y="423" fill="#ff0091"/><rect x="1719" y="433" fill="#ff0097"/><rect x="1719" y="443" fill="#ff009e"/><rect x="1719" y="453" fill="#ff00a5"/><rect x="1719" y="463" fill="#ff00ab"/><rect x="1719" y="473" fill="#ff00b2"/><rect x="1719" y="483" fill="#ff00b9"/><rect x="1719" y="493" fill="#ff00c0"/><rect x="1719" y="503" fill="#ff00c7"/><rect x="1719" y="513" fill="#ff00cd"/><rect x="1719" y="523" fill="#ff00d4"/><rect x="1729" y="193" fill="#ff0b00"/><rect x="1729" y="203" fill="#ff0800"/><rect x="1729" y="213" fill="#ff0600"/><rect x="1729" y="223" fill="#ff0305"/><rect x="1729" y="233" fill="#ff000e"/><rect x="1729" y="243" fill="#ff0015"/><rect x="1729" y="253" fill="#ff001c"/><rect x="1729" y="263" fill="#ff0023"/><rect x="1729" y="273" fill="#ff002a"/><rect x="1729" y="283" fill="#ff0031"/><rect x="1729" y="293" fill="#ff0038"/><rect x="1729" y="303" fill="#ff003e"/><rect x="1729" y="313" fill="#ff0045"/><rect x="1729" y="323" fill="#ff004c"/><rect x="1729" y="333" fill="#ff0052"/><rect x="1729" y="343" fill="#ff0059"/><rect x="1729" y="353" fill="#ff005f"/><rect x="1729" y="363" fill="#ff0065"/><rect x="1729" y="373" fill="#ff006c"/><rect x="1729" y="383" fill="#ff0072"/><rect x="1729" y="393" fill="#ff0079"/><rect x="1729" y="403" fill="#ff007f"/><rect x="1729" y="413" fill="#ff0086"/><rect x="1729" y="423" fill="#ff008c"/><rect x="1729" y="433" fill="#ff0093"/><rect x="1729" y="443" fill="#ff0099"/><rect x="1729" y="453" fill="#ff009f"/><rect x="1729" y="463" fill="#ff00a6"/><rect x="1729" y="473" fill="#ff00ac"/><rect x="1729" y="483" fill="#ff00b3"/><rect x="1729" y="493" fill="#ff00ba"/><rect x="1729" y="503" fill="#ff00c0"/><rect x="1729" y="513" fill="#ff00c7"/><rect x="1739" y="193" fill="#ff0700"/><rect x="1739" y="203" fill="#ff0500"/><rect x="1739" y="213" fill="#ff0200"/><rect x="1739" y="223" fill="#ff0004"/><rect x="1739" y="233" fill="#ff000c"/><rect x="1739" y="243" fill="#ff0014"/><rect x="1739" y="253" fill="#ff001b"/><rect x="1739" y="263" fill="#ff0022"/><rect x="1739" y="273" fill="#ff0029"/><rect x="1739" y="283" fill="#ff002f"/><rect x="1739" y="293" fill="#ff0036"/><rect x="1739" y="303" fill="#ff003c"/><rect x="1739" y="313" fill="#ff0043"/><rect x="1739" y="323" fill="#ff0049"/><rect x="1739" y="333" fill="#ff004f"/><rect x="1739" y="343" fill="#ff0056"/><rect x="1739" y="353" fill="#ff005c"/><rect x="1739" y="363" fill="#ff0062"/><rect x="1739" y="373" fill="#ff0068"/><rect x="1739" y="383" fill="#ff006f"/><rect x="1739" y="393" fill="#ff0075"/><rect x="1739" y="403" fill="#ff007b"/><rect x="1739" y="413" fill="#ff0081"/><rect x="1739" y="423" fill="#ff0088"/><rect x="1739" y="433" fill="#ff008e"/><rect x="1739" y="443" fill="#ff0094"/><rect x="1739" y="453" fill="#ff009a"/><rect x="1739" y="463" fill="#ff00a1"/><rect x="1739" y="473" fill="#ff00a7"/><rect x="1739" y="483" fill="#ff00ad"/><rect x="1739" y="493" fill="#ff00b4"/><rect x="1739" y="503" fill="#ff00ba"/><rect x="1749" y="193" fill="#ff0400"/><rect x="1749" y="203" fill="#ff0100"/><rect x="1749" y="213" fill="#ff0000"/><rect x="1749" y="223" fill="#ff0003"/><rect x="1749" y="233" fill="#ff000b"/><rect x="1749" y="243" fill="#ff0013"/><rect x="1749" y="253" fill="#ff001a"/><rect x="1749" y="263" fill="#ff0020"/><rect x="1749" y="273" fill="#ff0027"/><rect x="1749" y="283" fill="#ff002d"/><rect x="1749" y="293" fill="#ff0034"/><rect x="1749" y="303" fill="#ff003a"/><rect x="1749" y="313" fill="#ff0040"/><rect x="1749" y="323" fill="#ff0046"/><rect x="1749" y="333" fill="#ff004d"/><rect x="1749" y="343" fill="#ff0053"/><rect x="1749" y="353" fill="#ff0059"/><rect x="1749" y="363" fill="#ff005f"/><rect x="1749" y="373" fill="#ff0065"/><rect x="1749" y="383" fill="#ff006b"/><rect x="1749" y="393" fill="#ff0071"/><rect x="1749" y="403" fill="#ff0077"/><rect x="1749" y="413" fill="#ff007d"/><rect x="1749" y="423" fill="#ff0083"/><rect x="1749" y="433" fill="#ff008a"/><rect x="1749" y="443" fill="#ff0090"/><rect x="1749" y="453" fill="#ff0096"/><rect x="1749" y="463" fill="#ff009c"/><rect x="1749" y="473" fill="#ff00a2"/><rect x="1749" y="483" fill="#ff00a8"/><rect x="1759" y="193" fill="#ff0000"/><rect x="1759" y="203" fill="#ff0000"/><rect x="1759" y="213" fill="#ff0000"/><rect x="1759" y="223" fill="#ff0002"/><rect x="1759" y="233" fill="#ff000a"/><rect x="1759" y="243" fill="#ff0011"/><rect x="1759" y="253" fill="#ff0018"/><rect x="1759" y="263" fill="#ff001f"/><rect x="1759" y="273" fill="#ff0025"/><rect x="1759" y="283" fill="#ff002c"/><rect x="1759" y="293" fill="#ff0032"/><rect x="1759" y="303" fill="#ff0038"/><rect x="1759" y="313" fill="#ff003e"/><rect x="1759" y="323" fill="#ff0044"/><rect x="1759" y="333" fill="#ff004a"/><rect x="1759" y="343" fill="#ff0050"/><rect x="1759" y="353" fill="#ff0056"/><rect x="1759" y="363" fill="#ff005c"/><rect x="1759" y="373" fill="#ff0062"/><rect x="1759" y="383" fill="#ff0068"/><rect x="1759" y="393" fill="#ff006e"/><rect x="1759" y="403" fill="#ff0074"/><rect x="1759" y="413" fill="#ff007a"/><rect x="1759" y="423" fill="#ff0080"/><rect x="1759" y="433" fill="#ff0085"/><rect x="1759" y="443" fill="#ff008b"/><rect x="1759" y="453" fill="#ff0091"/><rect x="1759" y="463" fill="#ff0097"/><rect x="1759" y="473" fill="#ff009d"/><rect x="1769" y="193" fill="#ff0000"/><rect x="1769" y="203" fill="#ff0000"/><rect x="1769" y="213" fill="#ff0000"/><rect x="1769" y="223" fill="#ff0001"/><rect x="1769" y="233" fill="#ff0009"/><rect x="1769" y="243" fill="#ff0010"/><rect x="1769" y="253" fill="#ff0017"/><rect x="1769" y="263" fill="#ff001d"/><rect x="1769" y="273" fill="#ff0024"/><rect x="1769" y="283" fill="#ff002a"/><rect x="1769" y="293" fill="#ff0030"/><rect x="1769" y="303" fill="#ff0036"/><rect x="1769" y="313" fill="#ff003c"/><rect x="1769" y="323" fill="#ff0042"/><rect x="1769" y="333" fill="#ff0048"/><rect x="1769" y="343" fill="#ff004e"/><rect x="1769" y="353" fill="#ff0053"/><rect x="1769" y="363" fill="#ff0059"/><rect x="1769" y="373" fill="#ff005f"/><rect x="1769" y="383" fill="#ff0065"/><rect x="1769" y="393" fill="#ff006a"/><rect x="1769" y="403" fill="#ff0070"/><rect x="1769" y="413" fill="#ff0076"/><rect x="1769" y="423" fill="#ff007c"/><rect x="1769" y="433" fill="#ff0082"/><rect x="1769" y="443" fill="#ff0087"/><rect x="1769" y="453" fill="#ff008d"/><rect x="1769" y="463" fill="#ff0093"/><rect x="1779" y="193" fill="#ff0000"/><rect x="1779" y="203" fill="#ff0000"/><rect x="1779" y="213" fill="#ff0000"/><rect x="1779" y="223" fill="#ff0000"/><rect x="1779" y="233" fill="#ff0008"/><rect x="1779" y="243" fill="#ff000f"/><rect x="1779" y="253" fill="#ff0016"/><rect x="1779" y="263" fill="#ff001c"/><rect x="1779" y="273" fill="#ff0022"/><rect x="1779" y="283" fill="#ff0028"/><rect x="1779" y="293" fill="#ff002e"/><rect x="1779" y="303" fill="#ff0034"/><rect x="1779" y="313" fill="#ff003a"/><rect x="1779" y="323" fill="#ff0040"/><rect x="1779" y="333" fill="#ff0045"/><rect x="1779" y="343" fill="#ff004b"/><rect x="1779" y="353" fill="#ff0051"/><rect x="1779" y="363" fill="#ff0056"/><rect x="1779" y="373" fill="#ff005c"/><rect x="1779" y="383" fill="#ff0062"/><rect x="1779" y="393" fill="#ff0067"/><rect x="1779" y="403" fill="#ff006d"/><rect x="1779" y="413" fill="#ff0073"/><rect x="1779" y="423" fill="#ff0078"/><rect x="1779" y="433" fill="#ff007e"/><rect x="1779" y="443" fill="#ff0083"/><rect x="1779" y="453" fill="#ff0089"/><rect x="1789" y="193" fill="#ff0000"/><rect x="1789" y="203" fill="#ff0000"/><rect x="1789" y="213" fill="#ff0000"/><rect x="1789" y="223" fill="#ff0000"/><rect x="1789" y="233" fill="#ff0007"/><rect x="1789" y="243" fill="#ff000e"/><rect x="1789" y="253" fill="#ff0014"/><rect x="1789" y="263" fill="#ff001b"/><rect x="1789" y="273" fill="#ff0021"/><rect x="1789" y="283" fill="#ff0027"/><rect x="1789" y="293" fill="#ff002d"/><rect x="1789" y="303" fill="#ff0032"/><rect x="1789" y="313" fill="#ff0038"/><rect x="1789" y="323" fill="#ff003e"/><rect x="1789" y="333" fill="#ff0043"/><rect x="1789" y="343" fill="#ff0049"/><rect x="1789" y="353" fill="#ff004e"/><rect x="1789" y="363" fill="#ff0054"/><rect x="1789" y="373" fill="#ff0059"/><rect x="1789" y="383" fill="#ff005f"/><rect x="1789" y="393" fill="#ff0064"/><rect x="1789" y="403" fill="#ff006a"/><rect x="1789" y="413" fill="#ff006f"/><rect x="1789" y="423" fill="#ff0075"/><rect x="1789" y="433" fill="#ff007a"/><rect x="1799" y="193" fill="#ff0000"/><rect x="1799" y="203" fill="#ff0000"/><rect x="1799" y="213" fill="#ff0000"/><rect x="1799" y="223" fill="#ff0000"/><rect x="1799" y="233" fill="#ff0006"/><rect x="1799" y="243" fill="#ff000d"/><rect x="1799" y="253" fill="#ff0013"/><rect x="1799" y="263" fill="#ff0019"/><rect x="1799" y="273" fill="#ff001f"/><rect x="1799" y="283" fill="#ff0025"/><rect x="1799" y="293" fill="#ff002b"/><rect x="1799" y="303" fill="#ff0031"/><rect x="1799" y="313" fill="#ff0036"/><rect x="1799" y="323" fill="#ff003c"/><rect x="1799" y="333" fill="#ff0041"/><rect x="1799" y="343" fill="#ff0047"/><rect x="1799" y="353" fill="#ff004c"/><rect x="1799" y="363" fill="#ff0051"/><rect x="1799" y="373" fill="#ff0057"/><rect x="1799" y="383" fill="#ff005c"/><rect x="1799" y="393" fill="#ff0062"/><rect x="1799" y="403" fill="#ff0067"/><rect x="1799" y="413" fill="#ff006c"/><rect x="1799" y="423" fill="#ff0072"/><rect x="1809" y="203" fill="#ff0000"/><rect x="1809" y="213" fill="#ff0000"/><rect x="1809" y="223" fill="#ff0000"/><rect x="1809" y="233" fill="#ff0005"/><rect x="1809" y="243" fill="#ff000c"/><rect x="1809" y="253" fill="#ff0012"/><rect x="1809" y="263" fill="#ff0018"/><rect x="1809" y="273" fill="#ff001e"/><rect x="1809" y="283" fill="#ff0024"/><rect x="1809" y="293" fill="#ff0029"/><rect x="1809" y="303" fill="#ff002f"/><rect x="1809" y="313" fill="#ff0034"/><rect x="1809" y="323" fill="#ff003a"/><rect x="1809" y="333" fill="#ff003f"/><rect x="1809" y="343" fill="#ff0044"/><rect x="1809" y="353" fill="#ff004a"/><rect x="1809" y="363" fill="#ff004f"/><rect x="1809" y="373" fill="#ff0054"/><rect x="1809" y="383" fill="#ff005a"/><rect x="1809" y="393" fill="#ff005f"/><rect x="1809" y="403" fill="#ff0064"/><rect x="1809" y="413" fill="#ff0069"/><rect x="1819" y="203" fill="#ff0000"/><rect x="1819" y="213" fill="#ff0000"/><rect x="1819" y="223" fill="#ff0000"/><rect x="1819" y="233" fill="#ff0004"/><rect x="1819" y="243" fill="#ff000b"/><rect x="1819" y="253" fill="#ff0011"/><rect x="1819" y="263" fill="#ff0017"/><rect x="1819" y="273" fill="#ff001d"/><rect x="1819" y="283" fill="#ff0022"/><rect x="1819" y="293" fill="#ff0028"/><rect x="1819" y="303" fill="#ff002d"/><rect x="1819" y="313" fill="#ff0033"/><rect x="1819" y="323" fill="#ff0038"/><rect x="1819" y="333" fill="#ff003d"/><rect x="1819" y="343" fill="#ff0042"/><rect x="1819" y="353" fill="#ff0048"/><rect x="1819" y="363" fill="#ff004d"/><rect x="1819" y="373" fill="#ff0052"/><rect x="1819" y="383" fill="#ff0057"/><rect x="1819" y="393" fill="#ff005c"/><rect x="1819" y="403" fill="#ff0061"/><rect x="1829" y="203" fill="#ff0000"/><rect x="1829" y="213" fill="#ff0000"/><rect x="1829" y="223" fill="#ff0000"/><rect x="1829" y="233" fill="#ff0003"/><rect x="1829" y="243" fill="#ff000a"/><rect x="1829" y="253" fill="#ff0010"/><rect x="1829" y="263" fill="#ff0016"/><rect x="1829" y="273" fill="#ff001c"/><rect x="1829" y="283" fill="#ff0021"/><rect x="1829" y="293" fill="#ff0027"/><rect x="1829" y="303" fill="#ff002c"/><rect x="1829" y="313" fill="#ff0031"/><rect x="1829" y="323" fill="#ff0036"/><rect x="1829" y="333" fill="#ff003b"/><rect x="1829" y="343" fill="#ff0041"/><rect x="1829" y="353" fill="#ff0046"/><rect x="1829" y="363" fill="#ff004b"/><rect x="1829" y="373" fill="#ff0050"/><rect x="1829" y="383" fill="#ff0055"/><rect x="1839" y="203" fill="#ff0000"/><rect x="1839" y="213" fill="#ff0000"/><rect x="1839" y="223" fill="#ff0000"/><rect x="1839" y="233" fill="#ff0002"/><rect x="1839" y="243" fill="#ff0009"/><rect x="1839" y="253" fill="#ff000f"/><rect x="1839" y="263" fill="#ff0015"/><rect x="1839" y="273" fill="#ff001b"/><rect x="1839" y="283" fill="#ff0020"/><rect x="1839" y="293" fill="#ff0025"/><rect x="1839" y="303" fill="#ff002a"/><rect x="1839" y="313" fill="#ff0030"/><rect x="1839" y="323" fill="#ff0035"/><rect x="1839" y="333" fill="#ff003a"/><rect x="1839" y="343" fill="#ff003f"/><rect x="1839" y="353" fill="#ff0044"/><rect x="1839" y="363" fill="#ff0049"/><rect x="1839" y="373" fill="#ff004e"/><rect x="1849" y="203" fill="#ff0000"/><rect x="1849" y="213" fill="#ff0000"/><rect x="1849" y="223" fill="#ff0000"/><rect x="1849" y="233" fill="#ff0002"/><rect x="1849" y="243" fill="#ff0008"/><rect x="1849" y="253" fill="#ff000e"/><rect x="1849" y="263" fill="#ff0014"/><rect x="1849" y="273" fill="#ff0019"/><rect x="1849" y="283" fill="#ff001f"/><rect x="1849" y="293" fill="#ff0024"/><rect x="1849" y="303" fill="#ff0029"/><rect x="1849" y="313" fill="#ff002e"/><rect x="1849" y="323" fill="#ff0033"/><rect x="1849" y="333" fill="#ff0038"/><rect x="1849" y="343" fill="#ff003d"/><rect x="1849" y="353" fill="#ff0042"/><rect x="1849" y="363" fill="#ff0047"/><rect x="1859" y="203" fill="#ff0000"/><rect x="1859" y="213" fill="#ff0000"/><rect x="1859" y="223" fill="#ff0000"/><rect x="1859" y="233" fill="#ff0001"/><rect x="1859" y="243" fill="#ff0007"/><rect x="1859" y="253" fill="#ff000d"/><rect x="1859" y="263" fill="#ff0013"/><rect x="1859" y="273" fill="#ff0018"/><rect x="1859" y="283" fill="#ff001e"/><rect x="1859" y="293" fill="#ff0023"/><rect x="1859" y="303" fill="#ff0028"/><rect x="1859" y="313" fill="#ff002d"/><rect x="1859" y="323" fill="#ff0032"/><rect x="1859" y="333" fill="#ff0036"/><rect x="1859" y="343" fill="#ff003b"/><rect x="1859" y="353" fill="#ff0040"/><rect x="1869" y="203" fill="#ff0000"/><rect x="1869" y="213" fill="#ff0000"/><rect x="1869" y="223" fill="#ff0000"/><rect x="1869" y="233" fill="#ff0000"/><rect x="1869" y="243" fill="#ff0007"/><rect x="1869" y="253" fill="#ff000d"/><rect x="1869" y="263" fill="#ff0012"/><rect x="1869" y="273" fill="#ff0017"/><rect x="1869" y="283" fill="#ff001c"/><rect x="1869" y="293" fill="#ff0021"/><rect x="1869" y="303" fill="#ff0026"/><rect x="1869" y="313" fill="#ff002b"/><rect x="1869" y="323" fill="#ff0030"/><rect x="1869" y="333" fill="#ff0035"/><rect x="1879" y="213" fill="#ff0000"/><rect x="1879" y="223" fill="#ff0000"/><rect x="1879" y="233" fill="#ff0000"/><rect x="1879" y="243" fill="#ff0006"/><rect x="1879" y="253" fill="#ff000c"/><rect x="1879" y="263" fill="#ff0011"/><rect x="1879" y="273" fill="#ff0016"/><rect x="1879" y="283" fill="#ff001b"/><rect x="1879" y="293" fill="#ff0020"/><rect x="1879" y="303" fill="#ff0025"/><rect x="1879" y="313" fill="#ff002a"/><rect x="1879" y="323" fill="#ff002f"/><rect x="1889" y="213" fill="#ff0000"/><rect x="1889" y="223" fill="#ff0000"/><rect x="1889" y="233" fill="#ff0000"/><rect x="1889" y="243" fill="#ff0005"/><rect x="1889" y="253" fill="#ff000b"/><rect x="1889" y="263" fill="#ff0010"/><rect x="1889" y="273" fill="#ff0015"/><rect x="1889" y="283" fill="#ff001a"/><rect x="1889" y="293" fill="#ff001f"/><rect x="1889" y="303" fill="#ff0024"/><rect x="1889" y="313" fill="#ff0029"/><rect x="1899" y="213" fill="#ff0000"/><rect x="1899" y="223" fill="#ff0000"/><rect x="1899" y="233" fill="#ff0000"/><rect x="1899" y="243" fill="#ff0004"/><rect x="1899" y="253" fill="#ff000a"/><rect x="1899" y="263" fill="#ff000f"/><rect x="1899" y="273" fill="#ff0014"/><rect x="1899" y="283" fill="#ff0019"/><rect x="1899" y="293" fill="#ff001e"/><rect x="1899" y="303" fill="#ff0023"/><rect x="1909" y="213" fill="#ff0000"/><rect x="1909" y="223" fill="#ff0000"/><rect x="1909" y="233" fill="#ff0000"/><rect x="1909" y="243" fill="#ff0003"/><rect x="1909" y="253" fill="#ff0009"/><rect x="1909" y="263" fill="#ff000f"/><rect x="1909" y="273" fill="#ff0014"/><rect x="1909" y="283" fill="#ff0018"/></g>
<path d="M1531.3 740.5 L1531.1 740.5 L1530.8 740.8 L1530.5 740.8 L1530.0 741.1 L1529.5 741.1 L1528.8 741.1 L1527.9 741.2 L1526.2 740.2 L1523.4 737.9 L1519.5 734.3 L1514.0 728.9 L1507.0 721.7 L1498.2 712.8 L1486.6 701.3 L1472.7 687.2 L1455.5 668.5 L1435.0 643.2 L1407.7 603.4 L1375.5 548.9 L1340.6 481.1 L1306.9 407.8 L1280.7 337.4 L1262.8 278.0 L1253.6 233.9 L1251.4 203.2 L1254.9 182.1 L1263.3 168.7 L1275.1 161.9 L1289.3 159.4 L1304.7 158.7 L1320.3 158.4 L1336.6 158.7 L1354.2 159.6 L1373.3 161.3 L1394.3 163.6 L1417.6 166.6 L1443.3 170.1 L1471.8 174.0 L1503.2 178.3 L1537.3 183.1 L1574.2 188.2 L1613.2 193.6 L1653.2 199.2 L1692.0 204.6 L1729.8 209.9 L1764.0 214.6 L1794.3 218.8 L1820.0 222.4 L1841.6 225.4 L1859.7 227.9 L1875.5 230.1 L1888.8 232.0 L1899.6 233.5 L1907.9 234.6 L1914.5 235.5 L1919.3 236.2 L1922.5 236.7 L1925.1 237.0 L1927.2 237.3 L1929.2 237.6 L1931.0 237.8 L1932.2 238.0 L1932.7 238.1 L1933.0 238.1 Z M1743.8 222.7 L1386.8 181.5 L1442.0 596.3 Z" fill-rule="evenodd" fill="#000" fill-opacity="0.42"/></g>
<rect x="1378.1" y="172.6" width="13.8" height="16.8" fill="none" stroke="#fff" stroke-width="2"/>
<rect x="1391.1" y="187.6" width="13.8" height="16.8" fill="none" stroke="#fff" stroke-width="2"/>
<rect x="1404.1" y="202.6" width="13.8" height="16.8" fill="none" stroke="#fff" stroke-width="2"/>
<rect x="1419.1" y="221.6" width="13.8" height="16.8" fill="none" stroke="#fff" stroke-width="2"/>
<rect x="1437.1" y="242.0" width="13.8" height="16.8" fill="none" stroke="#fff" stroke-width="2"/>
<rect x="1465.1" y="181.6" width="13.8" height="16.8" fill="none" stroke="#fff" stroke-width="2"/>
<rect x="1463.9" y="197.6" width="13.8" height="16.8" fill="none" stroke="#fff" stroke-width="2"/>
<rect x="1463.1" y="213.6" width="13.8" height="16.8" fill="none" stroke="#fff" stroke-width="2"/>
<rect x="1462.1" y="229.2" width="13.8" height="16.8" fill="none" stroke="#fff" stroke-width="2"/>
<rect x="1461.1" y="246.1" width="13.8" height="16.8" fill="none" stroke="#fff" stroke-width="2"/>
<rect x="1393.7" y="282.6" width="13.8" height="16.8" fill="none" stroke="#fff" stroke-width="2"/>
<rect x="1406.1" y="279.1" width="13.8" height="16.8" fill="none" stroke="#fff" stroke-width="2"/>
<rect x="1419.1" y="276.1" width="13.8" height="16.8" fill="none" stroke="#fff" stroke-width="2"/>
<rect x="1433.1" y="273.6" width="13.8" height="16.8" fill="none" stroke="#fff" stroke-width="2"/>
<rect x="1446.6" y="273.6" width="13.8" height="16.8" fill="none" stroke="#fff" stroke-width="2"/>
<rect x="1736.1" y="212.6" width="13.8" height="16.8" fill="none" stroke="#fff" stroke-width="2"/>
<rect x="1670.1" y="227.0" width="13.8" height="16.8" fill="none" stroke="#fff" stroke-width="2"/>
<rect x="1613.9" y="239.0" width="13.8" height="16.8" fill="none" stroke="#fff" stroke-width="2"/>
<rect x="1563.6" y="246.6" width="13.8" height="16.8" fill="none" stroke="#fff" stroke-width="2"/>
<rect x="1508.1" y="259.2" width="13.8" height="16.8" fill="none" stroke="#fff" stroke-width="2"/>
<rect x="1575.6" y="410.4" width="13.8" height="16.8" fill="none" stroke="#fff" stroke-width="2"/>
<rect x="1542.6" y="371.0" width="13.8" height="16.8" fill="none" stroke="#fff" stroke-width="2"/>
<rect x="1515.6" y="339.1" width="13.8" height="16.8" fill="none" stroke="#fff" stroke-width="2"/>
<rect x="1495.7" y="313.2" width="13.8" height="16.8" fill="none" stroke="#fff" stroke-width="2"/>
<rect x="1476.6" y="289.6" width="13.8" height="16.8" fill="none" stroke="#fff" stroke-width="2"/>
<rect x="1434.1" y="586.6" width="13.8" height="16.8" fill="none" stroke="#fff" stroke-width="2"/>
<rect x="1443.6" y="479.6" width="13.8" height="16.8" fill="none" stroke="#fff" stroke-width="2"/>
<rect x="1448.9" y="408.5" width="13.8" height="16.8" fill="none" stroke="#fff" stroke-width="2"/>
<rect x="1452.6" y="352.2" width="13.8" height="16.8" fill="none" stroke="#fff" stroke-width="2"/>
<rect x="1455.6" y="306.1" width="13.8" height="16.8" fill="none" stroke="#fff" stroke-width="2"/>
<rect x="1458.1" y="268.6" width="13.8" height="16.8" fill="none" stroke="#000" stroke-width="2"/>
<ellipse cx="1380.0" cy="181.0" rx="4.5" ry="5.6" fill="#18a818" stroke="#000" stroke-width="1.25"/>
<ellipse cx="1392.8" cy="195.6" rx="4.5" ry="5.6" fill="#4aae4a" stroke="#000" stroke-width="1.25"/>
<ellipse cx="1406.6" cy="212.5" rx="4.5" ry="5.6" fill="#62b062" stroke="#000" stroke-width="1.25"/>
<ellipse cx="1422.0" cy="231.6" rx="4.5" ry="5.6" fill="#80b480" stroke="#000" stroke-width="1.25"/>
<ellipse cx="1440.4" cy="253.8" rx="4.5" ry="5.6" fill="#9ab49a" stroke="#000" stroke-width="1.25"/>
<ellipse cx="1468.5" cy="190.8" rx="4.5" ry="5.6" fill="#b4b418" stroke="#000" stroke-width="1.25"/>
<ellipse cx="1468.5" cy="205.8" rx="4.5" ry="5.6" fill="#b4b44a" stroke="#000" stroke-width="1.25"/>
<ellipse cx="1466.6" cy="221.9" rx="4.5" ry="5.6" fill="#b4b462" stroke="#000" stroke-width="1.25"/>
<ellipse cx="1466.6" cy="238.8" rx="4.5" ry="5.6" fill="#b8b880" stroke="#000" stroke-width="1.25"/>
<ellipse cx="1464.0" cy="256.8" rx="4.5" ry="5.6" fill="#b8b89a" stroke="#000" stroke-width="1.25"/>
<ellipse cx="1397.6" cy="296.0" rx="4.5" ry="5.6" fill="#18b4b4" stroke="#000" stroke-width="1.25"/>
<ellipse cx="1411.0" cy="292.4" rx="4.5" ry="5.6" fill="#50b4b4" stroke="#000" stroke-width="1.25"/>
<ellipse cx="1423.9" cy="289.8" rx="4.5" ry="5.6" fill="#70b4b4" stroke="#000" stroke-width="1.25"/>
<ellipse cx="1435.5" cy="285.6" rx="4.5" ry="5.6" fill="#8cb4b4" stroke="#000" stroke-width="1.25"/>
<ellipse cx="1449.8" cy="284.5" rx="4.5" ry="5.6" fill="#a2b4b4" stroke="#000" stroke-width="1.25"/>
<ellipse cx="1733.3" cy="221.9" rx="4.5" ry="5.6" fill="#c81818" stroke="#000" stroke-width="1.25"/>
<ellipse cx="1673.3" cy="232.0" rx="4.5" ry="5.6" fill="#c04444" stroke="#000" stroke-width="1.25"/>
<ellipse cx="1618.5" cy="245.5" rx="4.5" ry="5.6" fill="#bc5c5c" stroke="#000" stroke-width="1.25"/>
<ellipse cx="1566.8" cy="256.0" rx="4.5" ry="5.6" fill="#bc7272" stroke="#000" stroke-width="1.25"/>
<ellipse cx="1512.0" cy="269.0" rx="4.5" ry="5.6" fill="#b88a8a" stroke="#000" stroke-width="1.25"/>
<ellipse cx="1578.0" cy="420.0" rx="4.5" ry="5.6" fill="#b418b4" stroke="#000" stroke-width="1.25"/>
<ellipse cx="1546.9" cy="380.0" rx="4.5" ry="5.6" fill="#b448b4" stroke="#000" stroke-width="1.25"/>
<ellipse cx="1519.5" cy="348.6" rx="4.5" ry="5.6" fill="#b464b4" stroke="#000" stroke-width="1.25"/>
<ellipse cx="1498.9" cy="325.0" rx="4.5" ry="5.6" fill="#b482b4" stroke="#000" stroke-width="1.25"/>
<ellipse cx="1479.8" cy="301.4" rx="4.5" ry="5.6" fill="#b4a0b4" stroke="#000" stroke-width="1.25"/>
<ellipse cx="1440.7" cy="594.9" rx="4.5" ry="5.6" fill="#1818b8" stroke="#000" stroke-width="1.25"/>
<ellipse cx="1449.8" cy="496.4" rx="4.5" ry="5.6" fill="#4a4ab8" stroke="#000" stroke-width="1.25"/>
<ellipse cx="1455.8" cy="421.4" rx="4.5" ry="5.6" fill="#6464b8" stroke="#000" stroke-width="1.25"/>
<ellipse cx="1456.9" cy="366.0" rx="4.5" ry="5.6" fill="#8282b8" stroke="#000" stroke-width="1.25"/>
<ellipse cx="1459.9" cy="318.0" rx="4.5" ry="5.6" fill="#9c9cb8" stroke="#000" stroke-width="1.25"/>
<ellipse cx="1464.4" cy="279" rx="4.5" ry="5.6" fill="#fff" stroke="#000" stroke-width="1.25"/>
</svg>
<div class="r" style="left:1249px;top:143px;width:660px;height:616px;box-sizing:border-box;border:2px solid #9a9a9a"></div>
<div class="r" style="left:1680px;top:565px;width:225px;height:186px;background:#2a2a2a"></div>
<svg class="r" style="left:1683px;top:568px" width="219" height="180" viewBox="0 0 219 180">
<defs>
<linearGradient id="ib" x1="0" y1="0" x2="1" y2="1"><stop offset="0" stop-color="#a8ff00"/><stop offset="0.45" stop-color="#ffff10"/><stop offset="1" stop-color="#ffb000"/></linearGradient>
<linearGradient id="ia" x1="0" y1="0" x2="1" y2="1"><stop offset="0" stop-color="#5e9800"/><stop offset="0.5" stop-color="#989800"/><stop offset="1" stop-color="#946a00"/></linearGradient>
</defs>
<rect x="0" y="0" width="219" height="180" fill="url(#ib)"/>
<path d="M0 0 L219 0 L219 161 L0 18 Z" fill="url(#ia)"/>
<ellipse cx="90.9" cy="75.5" rx="4.6" ry="4.9" fill="#c8c000" stroke="#000" stroke-width="1.4"/>
<rect x="101.5" y="81" width="15" height="16" fill="none" stroke="#fff" stroke-width="2"/>
<rect x="0.75" y="0.75" width="217.5" height="178.5" fill="none" stroke="#9a9a9a" stroke-width="1.5"/>
</svg>
<div class="r" style="left:1390px;top:58px;width:142px;height:30px;background:linear-gradient(#676767,#5e5e5e 50%,#5a5a5a);border-radius:4px 4px 0 0;box-shadow:inset 0 1px 0 #777"></div>
<div class="r" style="left:1390px;top:59px;width:6px;height:29px;background:#00dd00;border-radius:3px 0 0 0"></div>
<div class="t " style="left:1398.75px;top:61.12px;font-size:10.90px;line-height:10.90px;color:#f0f0f0;transform:scaleX(0.9579);transform-origin:0 0;">X-Rite i1Pro 2</div>
<div class="t " style="left:1398.75px;top:74.92px;font-size:10.90px;line-height:10.90px;color:#f0f0f0;transform:scaleX(1.0086);transform-origin:0 0;">Direct View</div>
<div class="r" style="left:1468.0px;top:63.3px;width:19px;height:19px;border-radius:50%;background:linear-gradient(#474747,#5a5a5a 60%,#6e6e6e)"></div>
<svg class="r" style="left:1472.0px;top:71.3px;overflow:visible" width="11" height="6"><path d="M0 0L11 0L5.5 5.5Z" fill="#fff"/></svg>
<div class="r" style="left:1496px;top:61px;width:1.5px;height:27px;background:#3c3c3c"></div>
<div class="r" style="left:1504.6px;top:59.9px;width:25.8px;height:25.8px;border-radius:50%;background:#0000f0;box-sizing:border-box;border:1.2px solid #d0d0ff"></div>
<div class="t " style="left:1510.40px;top:68.87px;font-size:8.72px;line-height:8.72px;color:#fff;transform:scaleX(0.9759);transform-origin:0 0;">237</div>
<div class="r" style="left:1539px;top:58px;width:129px;height:30px;background:linear-gradient(#676767,#5e5e5e 50%,#5a5a5a);border-radius:4px 4px 0 0;box-shadow:inset 0 1px 0 #777"></div>
<div class="r" style="left:1539px;top:59px;width:6px;height:29px;background:#e6e600;border-radius:3px 0 0 0"></div>
<div class="t " style="left:1547.30px;top:60.92px;font-size:10.90px;line-height:10.90px;color:#f0f0f0;transform:scaleX(0.9554);transform-origin:0 0;">Source</div>
<div class="r" style="left:1642.7px;top:63.5px;width:19px;height:19px;border-radius:50%;background:linear-gradient(#474747,#5a5a5a 60%,#6e6e6e)"></div>
<svg class="r" style="left:1646.7px;top:71.5px;overflow:visible" width="11" height="6"><path d="M0 0L11 0L5.5 5.5Z" fill="#fff"/></svg>
<div class="r" style="left:1675px;top:58px;width:143px;height:30px;background:linear-gradient(#676767,#5e5e5e 50%,#5a5a5a);border-radius:4px 4px 0 0;box-shadow:inset 0 1px 0 #777"></div>
<div class="r" style="left:1675px;top:59px;width:5.5px;height:29px;background:#e6e600;border-radius:3px 0 0 0"></div>
<div class="t " style="left:1683.70px;top:60.82px;font-size:10.90px;line-height:10.90px;color:#f0f0f0;transform:scaleX(0.9933);transform-origin:0 0;">Direct Display Control</div>
<div class="r" style="left:1792.4px;top:63.5px;width:19px;height:19px;border-radius:50%;background:linear-gradient(#474747,#5a5a5a 60%,#6e6e6e)"></div>
<svg class="r" style="left:1796.4px;top:71.5px;overflow:visible" width="11" height="6"><path d="M0 0L11 0L5.5 5.5Z" fill="#fff"/></svg>
<div class="r" style="left:1821px;top:58px;width:34px;height:28px;box-sizing:border-box;border:1px solid #9a9a9a;border-radius:4px;background:linear-gradient(#7c7c7c,#5e5e5e 60%,#555)"></div>
<div class="r" style="left:1828px;top:62px;width:20px;height:20px;border-radius:50%;background:linear-gradient(#4e4e4e,#6a6a6a)"></div>
<div class="r" style="left:1857px;top:58px;width:34px;height:28px;box-sizing:border-box;border:1px solid #9a9a9a;border-radius:4px;background:linear-gradient(#7c7c7c,#5e5e5e 60%,#555)"></div>
<div class="r" style="left:1864px;top:62px;width:20px;height:20px;border-radius:50%;background:linear-gradient(#4e4e4e,#6a6a6a)"></div>
<div class="r" style="left:1893px;top:58px;width:34px;height:28px;box-sizing:border-box;border:1px solid #9a9a9a;border-radius:4px;background:linear-gradient(#7c7c7c,#5e5e5e 60%,#555)"></div>
<div class="r" style="left:1897.1px;top:62px;width:20px;height:20px;border-radius:50%;background:linear-gradient(#4e4e4e,#6a6a6a)"></div>
<svg class="r" style="left:1829.8px;top:64px;overflow:visible" width="16" height="16" viewBox="-8 -8 16 16"><g fill="#cfcfcf"><rect x="-1.6" y="-7.2" width="3.2" height="3.5" transform="rotate(0)"/><rect x="-1.6" y="-7.2" width="3.2" height="3.5" transform="rotate(45)"/><rect x="-1.6" y="-7.2" width="3.2" height="3.5" transform="rotate(90)"/><rect x="-1.6" y="-7.2" width="3.2" height="3.5" transform="rotate(135)"/><rect x="-1.6" y="-7.2" width="3.2" height="3.5" transform="rotate(180)"/><rect x="-1.6" y="-7.2" width="3.2" height="3.5" transform="rotate(225)"/><rect x="-1.6" y="-7.2" width="3.2" height="3.5" transform="rotate(270)"/><rect x="-1.6" y="-7.2" width="3.2" height="3.5" transform="rotate(315)"/><circle r="5"/></g><circle r="3.1" fill="#5c5c5c"/></svg>
<div class="t " style="left:1869.30px;top:65.42px;font-size:15.99px;line-height:15.99px;color:#eaeaea;font-weight:bold;transform:scaleX(0.9215);transform-origin:0 0;">?</div>
<svg class="r" style="left:1902px;top:66px;overflow:visible" width="8" height="12"><path d="M7 0L7 12L0 6Z" fill="#fff"/></svg>
<div class="r" style="left:200px;top:1099px;width:1720px;height:9px;background:#383838"></div>
<div class="r" style="left:200px;top:1108px;width:1720px;height:62px;background:linear-gradient(#4a4a4a,#333 50%,#202020)"></div>
<div class="r" style="left:201px;top:1108px;width:45px;height:60px;border-radius:5px;background:linear-gradient(#a8a8a8,#8a8a8a 45%,#5c5c5c)"></div>
<div class="r" style="left:216px;top:1110px;width:15px;height:15px;border-radius:50%;background:linear-gradient(#5c5c5c,#8a8a8a)"></div>
<svg class="r" style="left:219px;top:1113px" width="9" height="6"><path d="M0 5.5L9 5.5L4.5 0Z" fill="#222"/></svg>
<div class="r" style="left:206px;top:1134px;width:35px;height:30px;border-radius:4px;background:#ffff00;box-shadow:inset 1px 1px 1px rgba(0,0,0,.35)"></div>
<div class="r" style="left:252px;top:1108px;width:150px;height:60px;border-radius:5px;background:linear-gradient(#a9a9a9,#8e8e8e 45%,#5a5a5a)"></div>
<div class="r" style="left:258px;top:1113px;width:139px;height:36px;border-radius:4px;background:#c1c1a2;box-shadow:inset 1px 1px 1px rgba(0,0,0,.3)"></div>
<div class="t " style="left:316.50px;top:1155.10px;font-size:11.05px;line-height:11.05px;color:#333;transform:scaleX(0.9498);transform-origin:0 0;">20%</div>
<div class="r" style="left:404px;top:1108px;width:150px;height:60px;border-radius:5px;background:linear-gradient(#a9a9a9,#8e8e8e 45%,#5a5a5a)"></div>
<div class="r" style="left:410px;top:1113px;width:139px;height:36px;border-radius:4px;background:#c0be86;box-shadow:inset 1px 1px 1px rgba(0,0,0,.3)"></div>
<div class="t " style="left:468.50px;top:1155.10px;font-size:11.05px;line-height:11.05px;color:#333;transform:scaleX(0.9498);transform-origin:0 0;">40%</div>
<div class="r" style="left:556px;top:1108px;width:150px;height:60px;border-radius:5px;background:linear-gradient(#a9a9a9,#8e8e8e 45%,#5a5a5a)"></div>
<div class="r" style="left:562px;top:1113px;width:139px;height:36px;border-radius:4px;background:#c3bf6e;box-shadow:inset 1px 1px 1px rgba(0,0,0,.3)"></div>
<div class="t " style="left:620.50px;top:1155.10px;font-size:11.05px;line-height:11.05px;color:#333;transform:scaleX(0.9498);transform-origin:0 0;">60%</div>
<div class="r" style="left:708px;top:1108px;width:150px;height:60px;border-radius:5px;background:linear-gradient(#a9a9a9,#8e8e8e 45%,#5a5a5a)"></div>
<div class="r" style="left:714px;top:1113px;width:139px;height:36px;border-radius:4px;background:#c2be4e;box-shadow:inset 1px 1px 1px rgba(0,0,0,.3)"></div>
<div class="t " style="left:772.50px;top:1155.10px;font-size:11.05px;line-height:11.05px;color:#333;transform:scaleX(0.9498);transform-origin:0 0;">80%</div>
<div class="r" style="left:860px;top:1108px;width:150px;height:60px;border-radius:5px;background:linear-gradient(#1c1c1c,#2a2a2a 40%,#3a3a3a)"></div>
<div class="r" style="left:865px;top:1112.6px;width:140px;height:36.6px;border-radius:4px;background:#c2c200"></div>
<div class="t " style="left:921.30px;top:1154.61px;font-size:11.63px;line-height:11.63px;color:#fff;font-weight:bold;transform:scaleX(0.9079);transform-origin:0 0;">100%</div>
<div class="r" style="left:1646px;top:1108px;width:226px;height:30px;background:linear-gradient(#7c7c7c,#666 50%,#575757);border-radius:4px 4px 0 0"></div>
<div class="r" style="left:1693px;top:1108px;width:1px;height:30px;background:#444"></div>
<div class="r" style="left:1738px;top:1108px;width:1px;height:30px;background:#444"></div>
<div class="r" style="left:1782px;top:1108px;width:1px;height:30px;background:#444"></div>
<div class="r" style="left:1828px;top:1108px;width:1px;height:30px;background:#444"></div>
<div class="r" style="left:1659px;top:1113px;width:20px;height:20px;border-radius:50%;background:linear-gradient(#5a5a5a,#8a8a8a)"></div>
<div class="r" style="left:1704px;top:1113px;width:20px;height:20px;border-radius:50%;background:linear-gradient(#5a5a5a,#8a8a8a)"></div>
<div class="r" style="left:1749px;top:1113px;width:20px;height:20px;border-radius:50%;background:linear-gradient(#5a5a5a,#8a8a8a)"></div>
<div class="r" style="left:1794px;top:1113px;width:20px;height:20px;border-radius:50%;background:linear-gradient(#5a5a5a,#8a8a8a)"></div>
<div class="r" style="left:1839px;top:1113px;width:20px;height:20px;border-radius:50%;background:linear-gradient(#5a5a5a,#8a8a8a)"></div>
<div class="r" style="left:1872px;top:1108px;width:48px;height:30px;background:#2c2c2c"></div>
<div class="r" style="left:1894px;top:1113px;width:20px;height:20px;border-radius:50%;background:#262626"></div>
<div class="r" style="left:1597px;top:1128px;width:48px;height:42px;border-radius:5px 5px 0 0;background:linear-gradient(#909090,#7a7a7a 50%,#606060)"></div>
<div class="r" style="left:1605.5px;top:1132.7px;width:31px;height:30px;box-sizing:border-box;border:3px solid #2a2a2a;border-radius:5px;background:linear-gradient(#b8b8b8,#9a9a9a)"></div>
<div class="r" style="left:1614px;top:1141px;width:14px;height:13px;background:#000"></div>
<div class="r" style="left:1646px;top:1139px;width:136px;height:31px;background:linear-gradient(#c4c4c4,#a4a4a4 45%,#7c7c7c);border-radius:5px 0 0 0"></div>
<div class="r" style="left:1782px;top:1139px;width:137px;height:31px;background:linear-gradient(#c4c4c4,#a4a4a4 45%,#7c7c7c);border-radius:0 5px 0 0"></div>
<div class="r" style="left:1782px;top:1139px;width:1px;height:31px;background:#333"></div>
<div class="r" style="left:1667.3px;top:1144.3px;width:19px;height:19px;border-radius:50%;background:linear-gradient(#888,#b4b4b4)"></div>
<div class="r" style="left:1880.4px;top:1144.3px;width:19px;height:19px;border-radius:50%;background:linear-gradient(#888,#b4b4b4)"></div>
<div class="t " style="left:1671.30px;top:1146.42px;font-size:15.99px;line-height:15.99px;color:#2a2a2a;transform:scaleX(1.2370);transform-origin:0 0;">«</div>
<div class="t " style="left:1884.40px;top:1146.42px;font-size:15.99px;line-height:15.99px;color:#2a2a2a;transform:scaleX(1.2370);transform-origin:0 0;">»</div>
<div class="t " style="left:1703.80px;top:1143.37px;font-size:21.95px;line-height:21.95px;color:#2a2a2a;transform:scaleX(1.0309);transform-origin:0 0;">Back</div>
<div class="t " style="left:1810.50px;top:1143.37px;font-size:21.95px;line-height:21.95px;color:#2a2a2a;transform:scaleX(1.1390);transform-origin:0 0;">Next</div>
<svg class="r" style="left:1500px;top:1070px;overflow:visible" width="420" height="100" viewBox="1500 1070 420 100"><defs><mask id="wm" maskUnits="userSpaceOnUse" x="1500" y="1070" width="420" height="100"><rect x="1500" y="1070" width="420" height="100" fill="#fff"/><text x="1594" y="1126" font-family="Liberation Sans" font-weight="bold" font-size="36.34" textLength="197" lengthAdjust="spacingAndGlyphs" fill="#000">NOTEBOOK</text><text x="1791.5" y="1126" font-family="Liberation Sans" font-weight="bold" font-size="36.34" textLength="118" lengthAdjust="spacingAndGlyphs" fill="#000">CHECK</text></mask></defs><polyline points="1549.0,1131.0 1587.7,1128.8 1586.2,1099.6 1536.0,1088.0 1536.5,1136.5 1567.7,1148.8 1623.0,1135.8 1593.0,1129.6" fill="none" stroke="#c4c4c4" stroke-opacity="0.75" stroke-width="7" stroke-linejoin="round"/><polyline points="1549.0,1131.0 1587.7,1128.8 1586.2,1099.6 1536.0,1088.0 1536.5,1136.5 1567.7,1148.8 1623.0,1135.8 1593.0,1129.6" fill="none" stroke="#8c2a30" stroke-opacity="0.8" stroke-width="3.8" stroke-linejoin="round"/><polyline points="1550.0,1105.0 1564.5,1124.0 1591.0,1088.0" fill="none" stroke="#c4c4c4" stroke-opacity="0.8" stroke-width="6.5" stroke-linejoin="round" stroke-linecap="round"/><polyline points="1550.0,1105.0 1564.5,1124.0 1591.0,1088.0" fill="none" stroke="#333" stroke-width="4" stroke-linejoin="round" stroke-linecap="round"/><g mask="url(#wm)" fill="none" stroke="#cfcfcf" stroke-opacity="0.85" stroke-width="4.4" stroke-linejoin="round"><text x="1594" y="1126" font-family="Liberation Sans" font-weight="bold" font-size="36.34" textLength="197" lengthAdjust="spacingAndGlyphs">NOTEBOOK</text><text x="1791.5" y="1126" font-family="Liberation Sans" font-weight="bold" font-size="36.34" textLength="118" lengthAdjust="spacingAndGlyphs">CHECK</text></g><text x="1594" y="1126" font-family="Liberation Sans" font-weight="bold" font-size="36.34" textLength="197" lengthAdjust="spacingAndGlyphs" fill="#96222c" fill-opacity="0.6">NOTEBOOK</text><text x="1791.5" y="1126" font-family="Liberation Sans" font-weight="bold" font-size="36.34" textLength="118" lengthAdjust="spacingAndGlyphs" fill="#1e1e1e" fill-opacity="0.6">CHECK</text></svg>
</body></html>
